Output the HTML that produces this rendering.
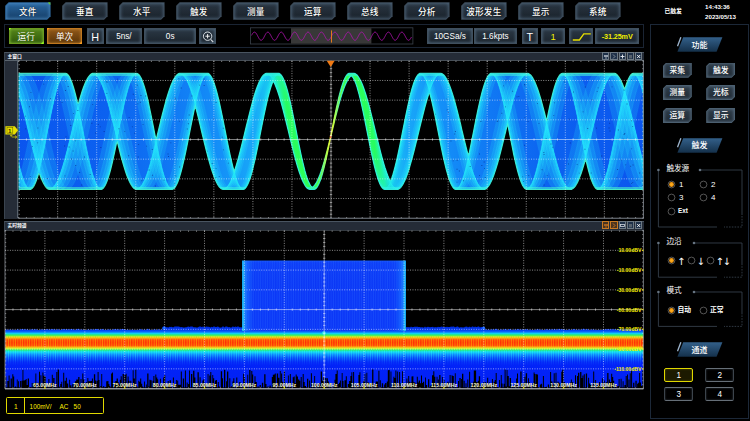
<!DOCTYPE html><html lang="zh"><head><meta charset="utf-8"><title>Oscilloscope</title><style>
html,body{margin:0;padding:0;background:#000;}
body{width:750px;height:421px;position:relative;overflow:hidden;font-family:"Liberation Sans","Noto Sans CJK SC",sans-serif;color:#fff;}
.a{position:absolute;box-sizing:border-box;}
.t{position:absolute;white-space:nowrap;line-height:1;}
.mb{position:absolute;box-sizing:border-box;height:17.4px;width:45.4px;top:2.3px;clip-path:polygon(3.5px 0,100% 0,100% calc(100% - 3.5px),calc(100% - 3.5px) 100%,0 100%,0 3.5px);background:#3f4f5e;}
.mb i{position:absolute;left:0.8px;top:0.8px;right:0.8px;bottom:0.8px;clip-path:polygon(3.2px 0,100% 0,100% calc(100% - 3.2px),calc(100% - 3.2px) 100%,0 100%,0 3.2px);background:linear-gradient(#2a3642,#1a222b);box-shadow:inset 0 0 3.5px 0.5px #536b80;}
.mb span{position:absolute;left:0;right:0;top:0;bottom:0;text-align:center;font-size:8.6px;line-height:20.2px;font-weight:500;letter-spacing:0.2px;text-shadow:0 0 1px #000;}
.tb{position:absolute;box-sizing:border-box;top:27.6px;height:16.6px;background:linear-gradient(#2b3845,#1b242d);box-shadow:inset 0 0 3px 0.5px #4f667a;border:0.8px solid #40505f;text-align:center;font-size:8.2px;line-height:16px;}
.pb{position:absolute;box-sizing:border-box;width:29px;height:15.2px;clip-path:polygon(3.5px 0,100% 0,100% calc(100% - 3.5px),calc(100% - 3.5px) 100%,0 100%,0 3.5px);background:#4b5f70;}
.pb i{position:absolute;left:0.8px;top:0.8px;right:0.8px;bottom:0.8px;clip-path:polygon(3.2px 0,100% 0,100% calc(100% - 3.2px),calc(100% - 3.2px) 100%,0 100%,0 3.2px);background:linear-gradient(#2f3d4a,#202a34);box-shadow:inset 0 0 3px 0.5px #54697c;}
.pb span{position:absolute;left:0;right:0;top:0;bottom:0;text-align:center;font-size:7.8px;line-height:16px;font-weight:500;}
.hd{position:absolute;height:15px;width:45px;}
.hd span{position:absolute;left:0;right:0;top:0.6px;text-align:center;font-size:8px;line-height:16px;font-weight:500;}
.rd{position:absolute;width:5.6px;height:5.6px;border-radius:50%;border:0.8px solid #9aa0a6;box-sizing:border-box;background:#000;}
.rd.on{background:#f29a1c;border-color:#c8c8c8;box-shadow:inset 0 0 0 0.8px #3a2a10;}
.rl{position:absolute;font-size:6.6px;line-height:1;white-space:nowrap;font-weight:bold;}
.gl{position:absolute;font-size:7.8px;line-height:1;white-space:nowrap;background:#000;padding:0 1px;}
.cb{position:absolute;box-sizing:border-box;width:29.4px;height:14.8px;border:1px solid #666f78;border-left-color:#3c444c;border-right-color:#3c444c;border-radius:2px;background:#000;text-align:center;font-size:8.2px;line-height:13.4px;box-shadow:inset 0 0 2px #39424b;}
</style></head><body>
<div class="mb" style="left:5.2px;background:#2f6aa0"><i style="background:linear-gradient(#2a66a0,#163e66);box-shadow:inset 0 0 3.5px 0.5px #4d8cc4"></i><span>文件</span><b class="a" style="right:0;top:0;width:3px;height:3px;background:#6ad020;clip-path:polygon(0 0,100% 0,100% 100%)"></b></div>
<div class="mb" style="left:62.2px"><i></i><span>垂直</span></div>
<div class="mb" style="left:119.2px"><i></i><span>水平</span></div>
<div class="mb" style="left:176.2px"><i></i><span>触发</span></div>
<div class="mb" style="left:233.2px"><i></i><span>测量</span></div>
<div class="mb" style="left:290.2px"><i></i><span>运算</span></div>
<div class="mb" style="left:347.2px"><i></i><span>总线</span></div>
<div class="mb" style="left:404.2px"><i></i><span>分析</span></div>
<div class="mb" style="left:461.2px"><i></i><span>波形发生</span></div>
<div class="mb" style="left:518.2px"><i></i><span>显示</span></div>
<div class="mb" style="left:575.2px"><i></i><span>系统</span></div>
<div class="t" style="left:664.5px;top:9.2px;font-size:5.8px;font-weight:bold">已触发</div>
<div class="t" style="left:705px;top:3.7px;font-size:6.2px;font-weight:bold">14:43:36</div>
<div class="t" style="left:705px;top:13.7px;font-size:6.2px;font-weight:bold">2023/05/13</div>
<div class="a" style="left:4.2px;top:24.2px;width:639.6px;height:23.8px;border:1px solid #1a2433;"></div>
<div class="tb" style="left:8.8px;width:34.8px;background:linear-gradient(#55851a,#2f5a0a);border-color:#6a9a20;box-shadow:inset 0 0 3px #86bd3a;font-size:8.6px">运行<b class="a" style="left:-1px;top:-1px;width:3px;height:3px;background:#9aff20;clip-path:polygon(0 0,100% 0,0 100%)"></b><b class="a" style="right:-1px;bottom:-1px;width:3px;height:3px;background:#9aff20;clip-path:polygon(100% 0,100% 100%,0 100%)"></b></div>
<div class="tb" style="left:47.2px;width:34.6px;background:linear-gradient(#91581a,#5a3408);border-color:#c07820;box-shadow:inset 0 0 3px #d08a30;font-size:8.6px">单次<b class="a" style="left:-1px;top:-1px;width:3px;height:3px;background:#ffa020;clip-path:polygon(0 0,100% 0,0 100%)"></b><b class="a" style="right:-1px;bottom:-1px;width:3px;height:3px;background:#ffa020;clip-path:polygon(100% 0,100% 100%,0 100%)"></b></div>
<div class="tb" style="left:86.6px;width:17px;font-size:10.8px">H</div>
<div class="tb" style="left:105.8px;width:36.2px">5ns/</div>
<div class="tb" style="left:144.2px;width:52px">0s</div>
<div class="tb" style="left:198.6px;width:17.4px"><svg class="a" style="left:0;top:0" width="16" height="15" viewBox="0 0 16 15"><circle cx="7.6" cy="7.2" r="4.2" fill="none" stroke="#e8eef4" stroke-width="0.9"/><path d="M5.4 7.2h4.4M7.6 5v4.4" stroke="#fff" stroke-width="0.9"/><path d="M10.6 10.4l2.6 2.6" stroke="#cfd6dc" stroke-width="1.2"/></svg></div>
<svg class="a" style="left:250px;top:27px" width="164" height="18" viewBox="0 0 164 18"><rect x="0.5" y="0.8" width="162.4" height="16.2" fill="#000" stroke="#3a424b" stroke-width="0.8"/><rect x="41" y="1.2" width="80.4" height="15.4" fill="#383838"/><polyline points="1.5,8.4 2.0,7.5 2.5,6.7 3.0,6.0 3.5,5.5 4.0,5.2 4.5,5.1 5.0,5.2 5.5,5.6 6.0,6.1 6.5,6.9 7.0,7.7 7.5,8.6 8.0,9.6 8.5,10.5 9.0,11.4 9.5,12.1 10.0,12.7 10.5,13.1 11.0,13.3 11.5,13.2 12.0,13.0 12.5,12.5 13.0,11.9 13.5,11.1 14.0,10.2 14.5,9.2 15.0,8.2 15.5,7.3 16.0,6.5 16.5,5.9 17.0,5.4 17.5,5.2 18.0,5.1 18.5,5.3 19.0,5.7 19.5,6.3 20.0,7.0 20.5,7.9 21.0,8.8 21.5,9.8 22.0,10.7 22.5,11.5 23.0,12.3 23.5,12.8 24.0,13.2 24.5,13.3 25.0,13.2 25.5,12.9 26.0,12.4 26.5,11.7 27.0,10.9 27.5,10.0 28.0,9.0 28.5,8.1 29.0,7.2 29.5,6.4 30.0,5.8 30.5,5.4 31.0,5.1 31.5,5.1 32.0,5.4 32.5,5.8 33.0,6.4 33.5,7.2 34.0,8.1 34.5,9.0 35.0,10.0 35.5,10.9 36.0,11.7 36.5,12.4 37.0,12.9 37.5,13.2 38.0,13.3 38.5,13.2 39.0,12.8 39.5,12.3 40.0,11.5 40.5,10.7 41.0,9.8 41.5,8.8 42.0,7.9 42.5,7.0 43.0,6.3 43.5,5.7 44.0,5.3 44.5,5.1 45.0,5.2 45.5,5.4 46.0,5.9 46.5,6.5 47.0,7.3 47.5,8.2 48.0,9.2 48.5,10.2 49.0,11.1 49.5,11.9 50.0,12.5 50.5,13.0 51.0,13.2 51.5,13.3 52.0,13.1 52.5,12.7 53.0,12.1 53.5,11.4 54.0,10.5 54.5,9.6 55.0,8.6 55.5,7.7 56.0,6.9 56.5,6.1 57.0,5.6 57.5,5.2 58.0,5.1 58.5,5.2 59.0,5.5 59.5,6.0 60.0,6.7 60.5,7.5 61.0,8.4 61.5,9.4 62.0,10.3 62.5,11.2 63.0,12.0 63.5,12.6 64.0,13.0 64.5,13.3 65.0,13.3 65.5,13.0 66.0,12.6 66.5,12.0 67.0,11.2 67.5,10.3 68.0,9.4 68.5,8.4 69.0,7.5 69.5,6.7 70.0,6.0 70.5,5.5 71.0,5.2 71.5,5.1 72.0,5.2 72.5,5.6 73.0,6.1 73.5,6.9 74.0,7.7 74.5,8.6 75.0,9.6 75.5,10.5 76.0,11.4 76.5,12.1 77.0,12.7 77.5,13.1 78.0,13.3 78.5,13.2 79.0,13.0 79.5,12.5 80.0,11.9 80.5,11.1 81.0,10.2 81.5,9.2 82.0,8.2 82.5,7.3 83.0,6.5 83.5,5.9 84.0,5.4 84.5,5.2 85.0,5.1 85.5,5.3 86.0,5.7 86.5,6.3 87.0,7.0 87.5,7.9 88.0,8.8 88.5,9.8 89.0,10.7 89.5,11.5 90.0,12.3 90.5,12.8 91.0,13.2 91.5,13.3 92.0,13.2 92.5,12.9 93.0,12.4 93.5,11.7 94.0,10.9 94.5,10.0 95.0,9.0 95.5,8.1 96.0,7.2 96.5,6.4 97.0,5.8 97.5,5.4 98.0,5.1 98.5,5.1 99.0,5.4 99.5,5.8 100.0,6.4 100.5,7.2 101.0,8.1 101.5,9.0 102.0,10.0 102.5,10.9 103.0,11.7 103.5,12.4 104.0,12.9 104.5,13.2 105.0,13.3 105.5,13.2 106.0,12.8 106.5,12.3 107.0,11.5 107.5,10.7 108.0,9.8 108.5,8.8 109.0,7.9 109.5,7.0 110.0,6.3 110.5,5.7 111.0,5.3 111.5,5.1 112.0,5.2 112.5,5.4 113.0,5.9 113.5,6.5 114.0,7.3 114.5,8.2 115.0,9.2 115.5,10.2 116.0,11.1 116.5,11.9 117.0,12.5 117.5,13.0 118.0,13.2 118.5,13.3 119.0,13.1 119.5,12.7 120.0,12.1 120.5,11.4 121.0,10.5 121.5,9.6 122.0,8.6 122.5,7.7 123.0,6.9 123.5,6.1 124.0,5.6 124.5,5.2 125.0,5.1 125.5,5.2 126.0,5.5 126.5,6.0 127.0,6.7 127.5,7.5 128.0,8.4 128.5,9.4 129.0,10.3 129.5,11.2 130.0,12.0 130.5,12.6 131.0,13.0 131.5,13.3 132.0,13.3 132.5,13.0 133.0,12.6 133.5,12.0 134.0,11.2 134.5,10.3 135.0,9.4 135.5,8.4 136.0,7.5 136.5,6.7 137.0,6.0 137.5,5.5 138.0,5.2 138.5,5.1 139.0,5.2 139.5,5.6 140.0,6.1 140.5,6.9 141.0,7.7 141.5,8.6 142.0,9.6 142.5,10.5 143.0,11.4 143.5,12.1 144.0,12.7 144.5,13.1 145.0,13.3 145.5,13.2 146.0,13.0 146.5,12.5 147.0,11.9 147.5,11.1 148.0,10.2 148.5,9.2 149.0,8.2 149.5,7.3 150.0,6.5 150.5,5.9 151.0,5.4 151.5,5.2 152.0,5.1 152.5,5.3 153.0,5.7 153.5,6.3 154.0,7.0 154.5,7.9 155.0,8.8 155.5,9.8 156.0,10.7 156.5,11.5 157.0,12.3 157.5,12.8 158.0,13.2 158.5,13.3 159.0,13.2 159.5,12.9 160.0,12.4 160.5,11.7 161.0,10.9 161.5,10.0" fill="none" stroke="#b414b4" stroke-width="0.8"/><path d="M81.5 3.4v12.2" stroke="#f08018" stroke-width="0.9"/></svg>
<div class="tb" style="left:427.2px;width:45.4px">10GSa/s</div>
<div class="tb" style="left:474.2px;width:42.6px">1.6kpts</div>
<div class="tb" style="left:521.6px;width:16.6px;font-size:10.8px">T</div>
<div class="tb" style="left:541px;width:24px;color:#f0f000;font-size:9.4px">1</div>
<div class="tb" style="left:568.8px;width:24px"><svg class="a" style="left:0;top:0" width="23" height="15" viewBox="0 0 23 15"><path d="M2.8 11h6.6l4.4-6.2h7" fill="none" stroke="#e8e000" stroke-width="1.3"/></svg></div>
<div class="tb" style="left:595px;width:44.4px;color:#f0f000;font-size:7.2px;font-weight:bold;letter-spacing:-0.1px">-31.25mV</div>
<div class="a" style="left:4.2px;top:52.2px;width:639.6px;height:166.4px;background:#252c37;border-top:0.8px solid #4a5561;border-left:0.8px solid #3a444f;"></div>
<div class="a" style="left:4.8px;top:60.2px;width:13.4px;height:158px;background:#252c37;border-right:0.8px solid #59636d"></div>
<div class="t" style="left:7.4px;top:54.8px;font-size:4.8px;font-weight:bold">主窗口</div>
<div class="a" style="left:4.8px;top:60.2px;width:639px;height:0.8px;background:#59636d"></div>
<div class="a" style="left:602.1px;top:52.3px;width:7.4px;height:8.2px;background:#1f3149;border:0.8px solid #6d7983"></div><div class="a" style="left:610.2px;top:52.3px;width:7.4px;height:8.2px;background:#1f3149;border:0.8px solid #6d7983"></div><div class="a" style="left:618.6px;top:52.3px;width:7.4px;height:8.2px;background:#1f3149;border:0.8px solid #6d7983"></div><div class="a" style="left:626.8px;top:52.3px;width:7.4px;height:8.2px;background:#1f3149;border:0.8px solid #6d7983"></div><div class="a" style="left:635.0px;top:52.3px;width:7.4px;height:8.2px;background:#1f3149;border:0.8px solid #6d7983"></div><svg class="a" style="left:602px;top:52px" width="42" height="10" viewBox="0 0 42 10"><path d="M2 4h4" stroke="#e6ebf0" stroke-width="1.2" fill="none"/><path d="M3 6h2" stroke="#e6ebf0" stroke-opacity="0.75" stroke-width="0.8" fill="none"/><path d="M11 2.5l2 2l-2 2" stroke="#9aa5af" stroke-width="0.8" fill="none"/><path d="M18.5 4.5h4M20.5 2.5v4" stroke="#e6ebf0" stroke-width="0.9"/><rect x="27" y="3" width="3" height="3.4" fill="#56616c"/><path d="M35.2 3l3 3M38.2 3l-3 3" stroke="#fff" stroke-width="0.9"/></svg>
<svg class="a" style="left:0;top:0" width="750" height="421" viewBox="0 0 750 421"><defs><linearGradient id="wg" gradientUnits="userSpaceOnUse" x1="0" y1="0" x2="661" y2="0"><stop offset="0.0009" stop-color="#0a52ee"/><stop offset="0.1673" stop-color="#0c62f0"/><stop offset="0.2581" stop-color="#1078f4"/><stop offset="0.3337" stop-color="#1490f8"/><stop offset="0.3852" stop-color="#18a8f8"/><stop offset="0.4064" stop-color="#18c8f0"/><stop offset="0.4185" stop-color="#20f0b0"/><stop offset="0.4336" stop-color="#28fc60"/><stop offset="0.4790" stop-color="#30ff50"/><stop offset="0.4911" stop-color="#70ff40"/><stop offset="0.5002" stop-color="#d0ff38"/><stop offset="0.5002" stop-color="#d0ff38"/><stop offset="0.5092" stop-color="#70ff40"/><stop offset="0.5213" stop-color="#30ff50"/><stop offset="0.5667" stop-color="#28fc60"/><stop offset="0.5818" stop-color="#20f0b0"/><stop offset="0.5939" stop-color="#18c8f0"/><stop offset="0.6151" stop-color="#18a8f8"/><stop offset="0.6666" stop-color="#1490f8"/><stop offset="0.7422" stop-color="#1078f4"/><stop offset="0.8330" stop-color="#0c62f0"/><stop offset="0.9994" stop-color="#0a52ee"/></linearGradient><linearGradient id="eg" gradientUnits="userSpaceOnUse" x1="0" y1="0" x2="661" y2="0"><stop offset="0.0009" stop-color="#24e8ff"/><stop offset="0.4033" stop-color="#22ecf8"/><stop offset="0.4215" stop-color="#20f4d0"/><stop offset="0.4396" stop-color="#28fc78"/><stop offset="0.4759" stop-color="#38ff60"/><stop offset="0.4896" stop-color="#90ff50"/><stop offset="0.5002" stop-color="#e0ff30"/><stop offset="0.5002" stop-color="#e0ff30"/><stop offset="0.5107" stop-color="#90ff50"/><stop offset="0.5244" stop-color="#38ff60"/><stop offset="0.5607" stop-color="#28fc78"/><stop offset="0.5788" stop-color="#20f4d0"/><stop offset="0.5970" stop-color="#22ecf8"/><stop offset="0.9994" stop-color="#24e8ff"/></linearGradient><linearGradient id="og" gradientUnits="userSpaceOnUse" x1="0" y1="0" x2="661" y2="0"><stop offset="0.0009" stop-color="#50ffc8"/><stop offset="0.4699" stop-color="#30f4e8"/><stop offset="0.4850" stop-color="#30f0d0"/><stop offset="0.4941" stop-color="#b0ff50"/><stop offset="0.5002" stop-color="#f0f030"/><stop offset="0.5002" stop-color="#f0f030"/><stop offset="0.5062" stop-color="#b0ff50"/><stop offset="0.5153" stop-color="#30f0d0"/><stop offset="0.5304" stop-color="#30f4e8"/><stop offset="0.9994" stop-color="#50ffc8"/></linearGradient><clipPath id="mc"><rect x="18.6" y="60.8" width="624.8" height="157.39999999999998"/></clipPath></defs><rect x="18.6" y="60.8" width="624.8" height="157.4" fill="#000"/><clipPath id="ec"><path d="M18.6,73.3 19.6,73.3 20.6,73.3 21.6,73.3 22.6,73.3 23.6,73.3 24.6,73.3 25.6,73.3 26.6,73.3 27.6,73.3 28.6,73.3 29.6,73.3 30.6,73.3 31.6,73.3 32.6,73.3 33.6,73.3 34.6,73.3 35.6,73.3 36.6,73.3 37.6,73.3 38.6,73.3 39.6,73.3 40.6,73.3 41.6,73.3 42.6,73.3 43.6,73.3 44.6,73.3 45.5,73.3 46.5,73.3 47.5,73.3 48.5,73.3 49.5,73.3 50.5,73.3 51.5,73.3 52.5,73.3 53.5,73.3 54.5,73.3 55.5,73.3 56.5,73.3 57.5,73.3 58.5,73.3 59.5,73.3 60.5,73.3 61.5,73.3 62.5,73.3 63.5,73.3 64.5,73.3 65.5,73.3 66.5,73.5 67.5,74.2 68.5,75.4 69.5,76.9 70.5,78.9 71.5,81.3 72.5,84.1 73.5,87.2 74.5,90.7 75.5,94.4 76.5,98.5 77.5,102.8 78.5,103.3 79.5,99.7 80.5,96.3 81.5,93.1 82.5,90.0 83.5,87.2 84.5,84.6 85.5,82.3 86.5,80.2 87.5,78.4 88.5,76.8 89.5,75.5 90.5,74.5 91.5,73.8 92.5,73.4 93.5,73.3 94.5,73.3 95.5,73.3 96.5,73.3 97.4,73.3 98.4,73.3 99.4,73.3 100.4,73.3 101.4,73.3 102.4,73.3 103.4,73.3 104.4,73.3 105.4,73.3 106.4,73.3 107.4,73.3 108.4,73.3 109.4,73.3 110.4,73.3 111.4,73.3 112.4,73.3 113.4,73.3 114.4,73.3 115.4,73.3 116.4,73.3 117.4,73.3 118.4,73.3 119.4,73.3 120.4,73.3 121.4,73.3 122.4,73.3 123.4,73.3 124.4,73.3 125.4,73.3 126.4,73.3 127.4,73.3 128.4,73.3 129.4,73.3 130.4,73.3 131.4,73.3 132.4,73.3 133.4,73.3 134.4,73.3 135.4,73.3 136.4,73.3 137.4,73.5 138.4,74.1 139.4,75.2 140.4,76.7 141.4,78.6 142.4,81.0 143.4,83.7 144.4,86.7 145.4,90.2 146.4,93.9 147.4,97.9 148.4,102.2 149.3,106.7 150.3,111.4 151.3,116.2 152.3,121.2 153.3,126.2 154.3,131.3 155.3,136.3 156.3,139.1 157.3,135.0 158.3,130.9 159.3,126.7 160.3,122.6 161.3,118.5 162.3,114.5 163.3,110.6 164.3,106.8 165.3,103.1 166.3,99.5 167.3,96.1 168.3,92.9 169.3,89.9 170.3,87.1 171.3,84.5 172.3,82.2 173.3,80.1 174.3,78.3 175.3,76.7 176.3,75.4 177.3,74.5 178.3,73.8 179.3,73.4 180.3,73.3 181.3,73.3 182.3,73.3 183.3,73.3 184.3,73.3 185.3,73.3 186.3,73.3 187.3,73.3 188.3,73.3 189.3,73.3 190.3,73.3 191.3,73.3 192.3,73.3 193.3,73.3 194.3,73.3 195.3,73.3 196.3,73.3 197.3,73.3 198.3,73.3 199.3,73.3 200.3,73.3 201.2,73.3 202.2,73.3 203.2,73.3 204.2,73.3 205.2,73.3 206.2,73.3 207.2,73.3 208.2,73.4 209.2,74.0 210.2,75.0 211.2,76.5 212.2,78.3 213.2,80.6 214.2,83.3 215.2,86.3 216.2,89.7 217.2,93.4 218.2,97.4 219.2,101.6 220.2,106.1 221.2,110.8 222.2,115.6 223.2,120.5 224.2,125.5 225.2,130.6 226.2,135.6 227.2,140.7 228.2,145.6 229.2,150.4 230.2,155.1 231.2,159.6 232.2,163.8 233.2,167.8 234.2,171.5 235.2,168.5 236.2,165.3 237.2,161.9 238.2,158.4 239.2,154.7 240.2,150.9 241.2,147.0 242.2,143.0 243.2,138.9 244.2,134.8 245.2,130.6 246.2,126.5 247.2,122.4 248.2,118.3 249.2,114.3 250.2,110.4 251.2,106.6 252.2,102.9 253.1,99.3 254.1,95.9 255.1,92.7 256.1,89.7 257.1,86.9 258.1,84.4 259.1,82.0 260.1,80.0 261.1,78.2 262.1,76.6 263.1,75.4 264.1,74.4 265.1,73.8 266.1,73.4 267.1,73.3 268.1,73.3 269.1,73.3 270.1,73.3 271.1,73.3 272.1,73.3 273.1,73.3 274.1,73.3 275.1,73.3 276.1,73.3 277.1,73.3 278.1,73.3 279.1,73.4 280.1,73.9 281.1,74.9 282.1,76.2 283.1,78.1 284.1,80.3 285.1,82.9 286.1,85.9 287.1,89.2 288.1,92.9 289.1,96.8 290.1,101.0 291.1,105.5 292.1,110.1 293.1,114.9 294.1,119.8 295.1,124.8 296.1,129.9 297.1,135.0 298.1,140.0 299.1,144.9 300.1,149.8 301.1,154.5 302.1,159.0 303.1,163.2 304.1,167.3 305.0,171.0 306.0,174.4 307.0,177.5 308.0,180.2 309.0,182.6 310.0,184.5 311.0,186.0 312.0,187.1 313.0,186.7 314.0,185.8 315.0,184.5 316.0,183.0 317.0,181.2 318.0,179.1 319.0,176.7 320.0,174.2 321.0,171.4 322.0,168.4 323.0,165.1 324.0,161.8 325.0,158.2 326.0,154.5 327.0,150.7 328.0,146.8 329.0,142.7 330.0,138.7 331.0,134.2 332.0,129.1 333.0,124.1 334.0,119.1 335.0,114.2 336.0,109.4 337.0,104.8 338.0,100.4 339.0,96.2 340.0,92.3 341.0,88.7 342.0,85.4 343.0,82.5 344.0,79.9 345.0,77.8 346.0,76.0 347.0,74.7 348.0,73.8 349.0,73.4 350.0,73.3 351.0,73.3 352.0,73.3 353.0,73.3 354.0,73.3 355.0,73.6 356.0,74.1 357.0,74.9 357.9,76.1 358.9,77.5 359.9,79.2 360.9,81.1 361.9,83.3 362.9,85.8 363.9,88.5 364.9,91.4 365.9,94.5 366.9,97.8 367.9,101.3 368.9,104.9 369.9,108.7 370.9,112.6 371.9,116.6 372.9,120.6 373.9,124.7 374.9,128.8 375.9,133.0 376.9,137.1 377.9,141.2 378.9,145.2 379.9,149.2 380.9,153.1 381.9,156.8 382.9,160.4 383.9,163.9 384.9,167.2 385.9,170.2 386.9,173.1 387.9,175.8 388.9,178.2 389.9,180.4 390.9,180.2 391.9,177.5 392.9,174.4 393.9,170.9 394.9,167.2 395.9,163.2 396.9,158.9 397.9,154.4 398.9,149.7 399.9,144.8 400.9,139.9 401.9,134.9 402.9,129.8 403.9,124.8 404.9,119.8 405.9,114.8 406.9,110.0 407.9,105.4 408.9,101.0 409.8,96.7 410.8,92.8 411.8,89.1 412.8,85.8 413.8,82.8 414.8,80.2 415.8,78.0 416.8,76.2 417.8,74.8 418.8,73.9 419.8,73.4 420.8,73.3 421.8,73.3 422.8,73.3 423.8,73.3 424.8,73.3 425.8,73.3 426.8,73.3 427.8,73.3 428.8,73.3 429.8,73.3 430.8,73.3 431.8,73.3 432.8,73.3 433.8,73.3 434.8,73.3 435.8,73.3 436.8,73.3 437.8,73.3 438.8,73.3 439.8,73.3 440.8,73.3 441.8,73.6 442.8,74.1 443.8,75.0 444.8,76.1 445.8,77.6 446.8,79.3 447.8,81.2 448.8,83.5 449.8,85.9 450.8,88.6 451.8,91.6 452.8,94.7 453.8,98.0 454.8,101.5 455.8,105.1 456.8,108.9 457.8,112.8 458.8,116.8 459.8,120.8 460.8,124.9 461.7,129.1 462.7,133.2 463.7,137.3 464.7,141.4 465.7,145.5 466.7,149.4 467.7,153.3 468.7,155.0 469.7,150.3 470.7,145.5 471.7,140.6 472.7,135.6 473.7,130.5 474.7,125.4 475.7,120.4 476.7,115.5 477.7,110.7 478.7,106.0 479.7,101.5 480.7,97.3 481.7,93.3 482.7,89.6 483.7,86.3 484.7,83.2 485.7,80.6 486.7,78.3 487.7,76.4 488.7,75.0 489.7,74.0 490.7,73.4 491.7,73.3 492.7,73.3 493.7,73.3 494.7,73.3 495.7,73.3 496.7,73.3 497.7,73.3 498.7,73.3 499.7,73.3 500.7,73.3 501.7,73.3 502.7,73.3 503.7,73.3 504.7,73.3 505.7,73.3 506.7,73.3 507.7,73.3 508.7,73.3 509.7,73.3 510.7,73.3 511.7,73.3 512.7,73.3 513.6,73.3 514.6,73.3 515.6,73.3 516.6,73.3 517.6,73.3 518.6,73.3 519.6,73.3 520.6,73.3 521.6,73.3 522.6,73.3 523.6,73.3 524.6,73.3 525.6,73.3 526.6,73.3 527.6,73.3 528.6,73.6 529.6,74.2 530.6,75.0 531.6,76.2 532.6,77.6 533.6,79.4 534.6,81.3 535.6,83.6 536.6,86.1 537.6,88.8 538.6,91.7 539.6,94.9 540.6,98.2 541.6,101.7 542.6,105.3 543.6,109.1 544.6,113.0 545.6,117.0 546.6,121.1 547.6,116.2 548.6,111.3 549.6,106.6 550.6,102.1 551.6,97.9 552.6,93.8 553.6,90.1 554.6,86.7 555.6,83.6 556.6,80.9 557.6,78.6 558.6,76.7 559.6,75.2 560.6,74.1 561.6,73.5 562.6,73.3 563.6,73.3 564.6,73.3 565.5,73.3 566.5,73.3 567.5,73.3 568.5,73.3 569.5,73.3 570.5,73.3 571.5,73.3 572.5,73.3 573.5,73.3 574.5,73.3 575.5,73.3 576.5,73.3 577.5,73.3 578.5,73.3 579.5,73.3 580.5,73.3 581.5,73.3 582.5,73.3 583.5,73.3 584.5,73.3 585.5,73.3 586.5,73.3 587.5,73.3 588.5,73.3 589.5,73.3 590.5,73.3 591.5,73.3 592.5,73.3 593.5,73.3 594.5,73.3 595.5,73.3 596.5,73.3 597.5,73.3 598.5,73.3 599.5,73.3 600.5,73.3 601.5,73.3 602.5,73.3 603.5,73.3 604.5,73.3 605.5,73.3 606.5,73.3 607.5,73.3 608.5,73.3 609.5,73.3 610.5,73.3 611.5,73.3 612.5,73.3 613.5,73.3 614.5,73.3 615.5,73.6 616.5,74.2 617.4,75.1 618.4,76.3 619.4,77.7 620.4,79.5 621.4,81.5 622.4,83.7 623.4,86.2 624.4,89.0 625.4,87.1 626.4,84.0 627.4,81.3 628.4,78.9 629.4,76.9 630.4,75.3 631.4,74.2 632.4,73.5 633.4,73.3 634.4,73.3 635.4,73.3 636.4,73.3 637.4,73.3 638.4,73.3 639.4,73.3 640.4,73.3 641.4,73.3 642.4,73.3 643.4,73.3 L643.4,189.5 642.4,189.5 641.4,189.5 640.4,189.5 639.4,189.5 638.4,189.5 637.4,189.5 636.4,189.5 635.4,189.5 634.4,189.5 633.4,189.5 632.4,189.5 631.4,189.5 630.4,189.5 629.4,189.5 628.4,189.5 627.4,189.5 626.4,189.5 625.4,189.5 624.4,189.5 623.4,189.5 622.4,189.5 621.4,189.5 620.4,189.5 619.4,189.5 618.4,189.5 617.4,189.5 616.5,189.5 615.5,189.5 614.5,189.5 613.5,189.5 612.5,189.5 611.5,189.5 610.5,189.5 609.5,189.5 608.5,189.5 607.5,189.5 606.5,189.5 605.5,189.5 604.5,189.5 603.5,189.5 602.5,189.5 601.5,189.5 600.5,189.5 599.5,189.5 598.5,189.5 597.5,189.5 596.5,189.0 595.5,188.1 594.5,186.8 593.5,185.1 592.5,182.9 591.5,180.4 590.5,177.5 589.5,174.2 588.5,170.6 587.5,166.7 586.5,162.5 585.5,159.2 584.5,162.8 583.5,166.2 582.5,169.4 581.5,172.5 580.5,175.3 579.5,177.9 578.5,180.3 577.5,182.4 576.5,184.3 575.5,185.9 574.5,187.2 573.5,188.2 572.5,188.9 571.5,189.4 570.5,189.5 569.5,189.5 568.5,189.5 567.5,189.5 566.5,189.5 565.5,189.5 564.6,189.5 563.6,189.5 562.6,189.5 561.6,189.5 560.6,189.5 559.6,189.5 558.6,189.5 557.6,189.5 556.6,189.5 555.6,189.5 554.6,189.5 553.6,189.5 552.6,189.5 551.6,189.5 550.6,189.5 549.6,189.5 548.6,189.5 547.6,189.5 546.6,189.5 545.6,189.5 544.6,189.5 543.6,189.5 542.6,189.5 541.6,189.5 540.6,189.5 539.6,189.5 538.6,189.5 537.6,189.5 536.6,189.5 535.6,189.5 534.6,189.5 533.6,189.5 532.6,189.5 531.6,189.5 530.6,189.5 529.6,189.5 528.6,189.5 527.6,189.5 526.6,189.5 525.6,189.1 524.6,188.3 523.6,187.0 522.6,185.4 521.6,183.3 520.6,180.8 519.6,177.9 518.6,174.7 517.6,171.1 516.6,167.2 515.6,163.1 514.6,158.7 513.6,154.2 512.7,149.4 511.7,144.5 510.7,139.5 509.7,134.5 508.7,129.4 507.7,124.4 506.7,127.4 505.7,131.5 504.7,135.7 503.7,139.8 502.7,143.9 501.7,147.9 500.7,151.8 499.7,155.7 498.7,159.4 497.7,163.0 496.7,166.4 495.7,169.6 494.7,172.6 493.7,175.5 492.7,178.1 491.7,180.4 490.7,182.5 489.7,184.4 488.7,186.0 487.7,187.2 486.7,188.3 485.7,189.0 484.7,189.4 483.7,189.5 482.7,189.5 481.7,189.5 480.7,189.5 479.7,189.5 478.7,189.5 477.7,189.5 476.7,189.5 475.7,189.5 474.7,189.5 473.7,189.5 472.7,189.5 471.7,189.5 470.7,189.5 469.7,189.5 468.7,189.5 467.7,189.5 466.7,189.5 465.7,189.5 464.7,189.5 463.7,189.5 462.7,189.5 461.7,189.5 460.8,189.5 459.8,189.5 458.8,189.5 457.8,189.5 456.8,189.5 455.8,189.5 454.8,189.2 453.8,188.4 452.8,187.2 451.8,185.6 450.8,183.6 449.8,181.1 448.8,178.3 447.8,175.1 446.8,171.6 445.8,167.8 444.8,163.7 443.8,159.3 442.8,154.8 441.8,150.1 440.8,145.2 439.8,140.2 438.8,135.2 437.8,130.1 436.8,125.1 435.8,120.1 434.8,115.2 433.8,110.4 432.8,105.8 431.8,101.5 430.8,97.3 429.8,93.4 428.8,94.0 427.8,97.2 426.8,100.5 425.8,104.1 424.8,107.7 423.8,111.5 422.8,115.5 421.8,119.5 420.8,123.5 419.8,127.6 418.8,131.8 417.8,135.9 416.8,140.0 415.8,144.1 414.8,148.1 413.8,152.1 412.8,155.9 411.8,159.6 410.8,163.2 409.8,166.6 408.9,169.8 407.9,172.8 406.9,175.6 405.9,178.2 404.9,180.6 403.9,182.6 402.9,184.5 401.9,186.0 400.9,187.3 399.9,188.3 398.9,189.0 397.9,189.4 396.9,189.5 395.9,189.5 394.9,189.5 393.9,189.5 392.9,189.5 391.9,189.5 390.9,189.5 389.9,189.5 388.9,189.5 387.9,189.5 386.9,189.5 385.9,189.5 384.9,189.5 383.9,189.2 382.9,188.6 381.9,187.4 380.9,185.9 379.9,183.9 378.9,181.5 377.9,178.7 376.9,175.6 375.9,172.1 374.9,168.3 373.9,164.3 372.9,160.0 371.9,155.4 370.9,150.7 369.9,145.9 368.9,140.9 367.9,135.9 366.9,130.8 365.9,125.8 364.9,120.8 363.9,115.9 362.9,111.1 361.9,106.5 360.9,102.0 359.9,97.9 358.9,93.9 357.9,90.3 357.0,87.0 356.0,84.1 355.0,81.5 354.0,79.4 353.0,77.6 352.0,76.3 351.0,76.0 350.0,76.9 349.0,78.2 348.0,79.7 347.0,81.5 346.0,83.5 345.0,85.8 344.0,88.4 343.0,91.2 342.0,94.2 341.0,97.4 340.0,100.7 339.0,104.3 338.0,108.0 337.0,111.8 336.0,115.7 335.0,119.7 334.0,123.8 333.0,127.9 332.0,132.0 331.0,136.1 330.0,140.8 329.0,145.8 328.0,150.6 327.0,155.3 326.0,159.9 325.0,164.2 324.0,168.3 323.0,172.1 322.0,175.5 321.0,178.7 320.0,181.4 319.0,183.8 318.0,185.8 317.0,187.4 316.0,188.5 315.0,189.2 314.0,189.5 313.0,189.5 312.0,189.5 311.0,189.5 310.0,189.5 309.0,189.3 308.0,188.8 307.0,188.0 306.0,186.9 305.0,185.5 304.1,183.8 303.1,181.9 302.1,179.7 301.1,177.3 300.1,174.6 299.1,171.7 298.1,168.6 297.1,165.3 296.1,161.8 295.1,158.2 294.1,154.5 293.1,150.6 292.1,146.6 291.1,142.6 290.1,138.5 289.1,134.3 288.1,130.2 287.1,126.1 286.1,122.0 285.1,117.9 284.1,114.0 283.1,110.1 282.1,106.3 281.1,102.7 280.1,99.2 279.1,95.9 278.1,92.8 277.1,89.9 276.1,87.2 275.1,84.8 274.1,82.6 273.1,81.2 272.1,83.7 271.1,86.6 270.1,89.8 269.1,93.4 268.1,97.2 267.1,101.4 266.1,105.8 265.1,110.4 264.1,115.1 263.1,120.0 262.1,125.0 261.1,130.0 260.1,135.1 259.1,140.1 258.1,145.1 257.1,150.0 256.1,154.7 255.1,159.3 254.1,163.6 253.1,167.7 252.2,171.6 251.2,175.1 250.2,178.3 249.2,181.1 248.2,183.5 247.2,185.6 246.2,187.2 245.2,188.4 244.2,189.2 243.2,189.5 242.2,189.5 241.2,189.5 240.2,189.5 239.2,189.5 238.2,189.5 237.2,189.5 236.2,189.5 235.2,189.5 234.2,189.5 233.2,189.5 232.2,189.5 231.2,189.5 230.2,189.5 229.2,189.5 228.2,189.5 227.2,189.5 226.2,189.5 225.2,189.5 224.2,189.5 223.2,189.5 222.2,189.3 221.2,188.7 220.2,187.9 219.2,186.8 218.2,185.4 217.2,183.7 216.2,181.8 215.2,179.6 214.2,177.1 213.2,174.4 212.2,171.5 211.2,168.4 210.2,165.1 209.2,161.6 208.2,158.0 207.2,154.2 206.2,150.4 205.2,146.4 204.2,142.3 203.2,138.2 202.2,134.1 201.2,130.0 200.3,125.8 199.3,121.8 198.3,117.7 197.3,113.7 196.3,109.9 195.3,106.1 194.3,109.7 193.3,114.5 192.3,119.3 191.3,124.3 190.3,129.3 189.3,134.4 188.3,139.4 187.3,144.4 186.3,149.3 185.3,154.1 184.3,158.7 183.3,163.0 182.3,167.2 181.3,171.0 180.3,174.6 179.3,177.8 178.3,180.7 177.3,183.2 176.3,185.3 175.3,187.0 174.3,188.3 173.3,189.1 172.3,189.5 171.3,189.5 170.3,189.5 169.3,189.5 168.3,189.5 167.3,189.5 166.3,189.5 165.3,189.5 164.3,189.5 163.3,189.5 162.3,189.5 161.3,189.5 160.3,189.5 159.3,189.5 158.3,189.5 157.3,189.5 156.3,189.5 155.3,189.5 154.3,189.5 153.3,189.5 152.3,189.5 151.3,189.5 150.3,189.5 149.3,189.5 148.4,189.5 147.4,189.5 146.4,189.5 145.4,189.5 144.4,189.5 143.4,189.5 142.4,189.5 141.4,189.5 140.4,189.5 139.4,189.5 138.4,189.5 137.4,189.5 136.4,189.5 135.4,189.2 134.4,188.7 133.4,187.9 132.4,186.7 131.4,185.3 130.4,183.6 129.4,181.6 128.4,179.4 127.4,177.0 126.4,174.3 125.4,171.3 124.4,168.2 123.4,164.9 122.4,161.4 121.4,157.8 120.4,154.0 119.4,150.1 118.4,146.2 117.4,142.1 116.4,143.8 115.4,148.7 114.4,153.4 113.4,158.0 112.4,162.5 111.4,166.6 110.4,170.5 109.4,174.1 108.4,177.4 107.4,180.4 106.4,182.9 105.4,185.1 104.4,186.8 103.4,188.1 102.4,189.0 101.4,189.4 100.4,189.5 99.4,189.5 98.4,189.5 97.4,189.5 96.5,189.5 95.5,189.5 94.5,189.5 93.5,189.5 92.5,189.5 91.5,189.5 90.5,189.5 89.5,189.5 88.5,189.5 87.5,189.5 86.5,189.5 85.5,189.5 84.5,189.5 83.5,189.5 82.5,189.5 81.5,189.5 80.5,189.5 79.5,189.5 78.5,189.5 77.5,189.5 76.5,189.5 75.5,189.5 74.5,189.5 73.5,189.5 72.5,189.5 71.5,189.5 70.5,189.5 69.5,189.5 68.5,189.5 67.5,189.5 66.5,189.5 65.5,189.5 64.5,189.5 63.5,189.5 62.5,189.5 61.5,189.5 60.5,189.5 59.5,189.5 58.5,189.5 57.5,189.5 56.5,189.5 55.5,189.5 54.5,189.5 53.5,189.5 52.5,189.5 51.5,189.5 50.5,189.5 49.5,189.5 48.5,189.2 47.5,188.7 46.5,187.8 45.5,186.6 44.6,185.2 43.6,183.5 42.6,181.5 41.6,179.3 40.6,176.8 39.6,174.1 38.6,173.7 37.6,177.0 36.6,180.0 35.6,182.6 34.6,184.8 33.6,186.6 32.6,188.0 31.6,188.9 30.6,189.4 29.6,189.5 28.6,189.5 27.6,189.5 26.6,189.5 25.6,189.5 24.6,189.5 23.6,189.5 22.6,189.5 21.6,189.5 20.6,189.5 19.6,189.5 18.6,189.5Z"/></clipPath><g clip-path="url(#mc)"><path d="M18.6,73.3 19.6,73.3 20.6,73.3 21.6,73.3 22.6,73.3 23.6,73.3 24.6,73.3 25.6,73.3 26.6,73.3 27.6,73.3 28.6,73.3 29.6,73.3 30.6,73.3 31.6,73.3 32.6,73.3 33.6,73.3 34.6,73.3 35.6,73.3 36.6,73.3 37.6,73.3 38.6,73.3 39.6,73.3 40.6,73.3 41.6,73.3 42.6,73.3 43.6,73.3 44.6,73.3 45.5,73.3 46.5,73.3 47.5,73.3 48.5,73.3 49.5,73.3 50.5,73.3 51.5,73.3 52.5,73.3 53.5,73.3 54.5,73.3 55.5,73.3 56.5,73.3 57.5,73.3 58.5,73.3 59.5,73.3 60.5,73.3 61.5,73.3 62.5,73.3 63.5,73.3 64.5,73.3 65.5,73.3 66.5,73.5 67.5,74.2 68.5,75.4 69.5,76.9 70.5,78.9 71.5,81.3 72.5,84.1 73.5,87.2 74.5,90.7 75.5,94.4 76.5,98.5 77.5,102.8 78.5,103.3 79.5,99.7 80.5,96.3 81.5,93.1 82.5,90.0 83.5,87.2 84.5,84.6 85.5,82.3 86.5,80.2 87.5,78.4 88.5,76.8 89.5,75.5 90.5,74.5 91.5,73.8 92.5,73.4 93.5,73.3 94.5,73.3 95.5,73.3 96.5,73.3 97.4,73.3 98.4,73.3 99.4,73.3 100.4,73.3 101.4,73.3 102.4,73.3 103.4,73.3 104.4,73.3 105.4,73.3 106.4,73.3 107.4,73.3 108.4,73.3 109.4,73.3 110.4,73.3 111.4,73.3 112.4,73.3 113.4,73.3 114.4,73.3 115.4,73.3 116.4,73.3 117.4,73.3 118.4,73.3 119.4,73.3 120.4,73.3 121.4,73.3 122.4,73.3 123.4,73.3 124.4,73.3 125.4,73.3 126.4,73.3 127.4,73.3 128.4,73.3 129.4,73.3 130.4,73.3 131.4,73.3 132.4,73.3 133.4,73.3 134.4,73.3 135.4,73.3 136.4,73.3 137.4,73.5 138.4,74.1 139.4,75.2 140.4,76.7 141.4,78.6 142.4,81.0 143.4,83.7 144.4,86.7 145.4,90.2 146.4,93.9 147.4,97.9 148.4,102.2 149.3,106.7 150.3,111.4 151.3,116.2 152.3,121.2 153.3,126.2 154.3,131.3 155.3,136.3 156.3,139.1 157.3,135.0 158.3,130.9 159.3,126.7 160.3,122.6 161.3,118.5 162.3,114.5 163.3,110.6 164.3,106.8 165.3,103.1 166.3,99.5 167.3,96.1 168.3,92.9 169.3,89.9 170.3,87.1 171.3,84.5 172.3,82.2 173.3,80.1 174.3,78.3 175.3,76.7 176.3,75.4 177.3,74.5 178.3,73.8 179.3,73.4 180.3,73.3 181.3,73.3 182.3,73.3 183.3,73.3 184.3,73.3 185.3,73.3 186.3,73.3 187.3,73.3 188.3,73.3 189.3,73.3 190.3,73.3 191.3,73.3 192.3,73.3 193.3,73.3 194.3,73.3 195.3,73.3 196.3,73.3 197.3,73.3 198.3,73.3 199.3,73.3 200.3,73.3 201.2,73.3 202.2,73.3 203.2,73.3 204.2,73.3 205.2,73.3 206.2,73.3 207.2,73.3 208.2,73.4 209.2,74.0 210.2,75.0 211.2,76.5 212.2,78.3 213.2,80.6 214.2,83.3 215.2,86.3 216.2,89.7 217.2,93.4 218.2,97.4 219.2,101.6 220.2,106.1 221.2,110.8 222.2,115.6 223.2,120.5 224.2,125.5 225.2,130.6 226.2,135.6 227.2,140.7 228.2,145.6 229.2,150.4 230.2,155.1 231.2,159.6 232.2,163.8 233.2,167.8 234.2,171.5 235.2,168.5 236.2,165.3 237.2,161.9 238.2,158.4 239.2,154.7 240.2,150.9 241.2,147.0 242.2,143.0 243.2,138.9 244.2,134.8 245.2,130.6 246.2,126.5 247.2,122.4 248.2,118.3 249.2,114.3 250.2,110.4 251.2,106.6 252.2,102.9 253.1,99.3 254.1,95.9 255.1,92.7 256.1,89.7 257.1,86.9 258.1,84.4 259.1,82.0 260.1,80.0 261.1,78.2 262.1,76.6 263.1,75.4 264.1,74.4 265.1,73.8 266.1,73.4 267.1,73.3 268.1,73.3 269.1,73.3 270.1,73.3 271.1,73.3 272.1,73.3 273.1,73.3 274.1,73.3 275.1,73.3 276.1,73.3 277.1,73.3 278.1,73.3 279.1,73.4 280.1,73.9 281.1,74.9 282.1,76.2 283.1,78.1 284.1,80.3 285.1,82.9 286.1,85.9 287.1,89.2 288.1,92.9 289.1,96.8 290.1,101.0 291.1,105.5 292.1,110.1 293.1,114.9 294.1,119.8 295.1,124.8 296.1,129.9 297.1,135.0 298.1,140.0 299.1,144.9 300.1,149.8 301.1,154.5 302.1,159.0 303.1,163.2 304.1,167.3 305.0,171.0 306.0,174.4 307.0,177.5 308.0,180.2 309.0,182.6 310.0,184.5 311.0,186.0 312.0,187.1 313.0,186.7 314.0,185.8 315.0,184.5 316.0,183.0 317.0,181.2 318.0,179.1 319.0,176.7 320.0,174.2 321.0,171.4 322.0,168.4 323.0,165.1 324.0,161.8 325.0,158.2 326.0,154.5 327.0,150.7 328.0,146.8 329.0,142.7 330.0,138.7 331.0,134.2 332.0,129.1 333.0,124.1 334.0,119.1 335.0,114.2 336.0,109.4 337.0,104.8 338.0,100.4 339.0,96.2 340.0,92.3 341.0,88.7 342.0,85.4 343.0,82.5 344.0,79.9 345.0,77.8 346.0,76.0 347.0,74.7 348.0,73.8 349.0,73.4 350.0,73.3 351.0,73.3 352.0,73.3 353.0,73.3 354.0,73.3 355.0,73.6 356.0,74.1 357.0,74.9 357.9,76.1 358.9,77.5 359.9,79.2 360.9,81.1 361.9,83.3 362.9,85.8 363.9,88.5 364.9,91.4 365.9,94.5 366.9,97.8 367.9,101.3 368.9,104.9 369.9,108.7 370.9,112.6 371.9,116.6 372.9,120.6 373.9,124.7 374.9,128.8 375.9,133.0 376.9,137.1 377.9,141.2 378.9,145.2 379.9,149.2 380.9,153.1 381.9,156.8 382.9,160.4 383.9,163.9 384.9,167.2 385.9,170.2 386.9,173.1 387.9,175.8 388.9,178.2 389.9,180.4 390.9,180.2 391.9,177.5 392.9,174.4 393.9,170.9 394.9,167.2 395.9,163.2 396.9,158.9 397.9,154.4 398.9,149.7 399.9,144.8 400.9,139.9 401.9,134.9 402.9,129.8 403.9,124.8 404.9,119.8 405.9,114.8 406.9,110.0 407.9,105.4 408.9,101.0 409.8,96.7 410.8,92.8 411.8,89.1 412.8,85.8 413.8,82.8 414.8,80.2 415.8,78.0 416.8,76.2 417.8,74.8 418.8,73.9 419.8,73.4 420.8,73.3 421.8,73.3 422.8,73.3 423.8,73.3 424.8,73.3 425.8,73.3 426.8,73.3 427.8,73.3 428.8,73.3 429.8,73.3 430.8,73.3 431.8,73.3 432.8,73.3 433.8,73.3 434.8,73.3 435.8,73.3 436.8,73.3 437.8,73.3 438.8,73.3 439.8,73.3 440.8,73.3 441.8,73.6 442.8,74.1 443.8,75.0 444.8,76.1 445.8,77.6 446.8,79.3 447.8,81.2 448.8,83.5 449.8,85.9 450.8,88.6 451.8,91.6 452.8,94.7 453.8,98.0 454.8,101.5 455.8,105.1 456.8,108.9 457.8,112.8 458.8,116.8 459.8,120.8 460.8,124.9 461.7,129.1 462.7,133.2 463.7,137.3 464.7,141.4 465.7,145.5 466.7,149.4 467.7,153.3 468.7,155.0 469.7,150.3 470.7,145.5 471.7,140.6 472.7,135.6 473.7,130.5 474.7,125.4 475.7,120.4 476.7,115.5 477.7,110.7 478.7,106.0 479.7,101.5 480.7,97.3 481.7,93.3 482.7,89.6 483.7,86.3 484.7,83.2 485.7,80.6 486.7,78.3 487.7,76.4 488.7,75.0 489.7,74.0 490.7,73.4 491.7,73.3 492.7,73.3 493.7,73.3 494.7,73.3 495.7,73.3 496.7,73.3 497.7,73.3 498.7,73.3 499.7,73.3 500.7,73.3 501.7,73.3 502.7,73.3 503.7,73.3 504.7,73.3 505.7,73.3 506.7,73.3 507.7,73.3 508.7,73.3 509.7,73.3 510.7,73.3 511.7,73.3 512.7,73.3 513.6,73.3 514.6,73.3 515.6,73.3 516.6,73.3 517.6,73.3 518.6,73.3 519.6,73.3 520.6,73.3 521.6,73.3 522.6,73.3 523.6,73.3 524.6,73.3 525.6,73.3 526.6,73.3 527.6,73.3 528.6,73.6 529.6,74.2 530.6,75.0 531.6,76.2 532.6,77.6 533.6,79.4 534.6,81.3 535.6,83.6 536.6,86.1 537.6,88.8 538.6,91.7 539.6,94.9 540.6,98.2 541.6,101.7 542.6,105.3 543.6,109.1 544.6,113.0 545.6,117.0 546.6,121.1 547.6,116.2 548.6,111.3 549.6,106.6 550.6,102.1 551.6,97.9 552.6,93.8 553.6,90.1 554.6,86.7 555.6,83.6 556.6,80.9 557.6,78.6 558.6,76.7 559.6,75.2 560.6,74.1 561.6,73.5 562.6,73.3 563.6,73.3 564.6,73.3 565.5,73.3 566.5,73.3 567.5,73.3 568.5,73.3 569.5,73.3 570.5,73.3 571.5,73.3 572.5,73.3 573.5,73.3 574.5,73.3 575.5,73.3 576.5,73.3 577.5,73.3 578.5,73.3 579.5,73.3 580.5,73.3 581.5,73.3 582.5,73.3 583.5,73.3 584.5,73.3 585.5,73.3 586.5,73.3 587.5,73.3 588.5,73.3 589.5,73.3 590.5,73.3 591.5,73.3 592.5,73.3 593.5,73.3 594.5,73.3 595.5,73.3 596.5,73.3 597.5,73.3 598.5,73.3 599.5,73.3 600.5,73.3 601.5,73.3 602.5,73.3 603.5,73.3 604.5,73.3 605.5,73.3 606.5,73.3 607.5,73.3 608.5,73.3 609.5,73.3 610.5,73.3 611.5,73.3 612.5,73.3 613.5,73.3 614.5,73.3 615.5,73.6 616.5,74.2 617.4,75.1 618.4,76.3 619.4,77.7 620.4,79.5 621.4,81.5 622.4,83.7 623.4,86.2 624.4,89.0 625.4,87.1 626.4,84.0 627.4,81.3 628.4,78.9 629.4,76.9 630.4,75.3 631.4,74.2 632.4,73.5 633.4,73.3 634.4,73.3 635.4,73.3 636.4,73.3 637.4,73.3 638.4,73.3 639.4,73.3 640.4,73.3 641.4,73.3 642.4,73.3 643.4,73.3 L643.4,189.5 642.4,189.5 641.4,189.5 640.4,189.5 639.4,189.5 638.4,189.5 637.4,189.5 636.4,189.5 635.4,189.5 634.4,189.5 633.4,189.5 632.4,189.5 631.4,189.5 630.4,189.5 629.4,189.5 628.4,189.5 627.4,189.5 626.4,189.5 625.4,189.5 624.4,189.5 623.4,189.5 622.4,189.5 621.4,189.5 620.4,189.5 619.4,189.5 618.4,189.5 617.4,189.5 616.5,189.5 615.5,189.5 614.5,189.5 613.5,189.5 612.5,189.5 611.5,189.5 610.5,189.5 609.5,189.5 608.5,189.5 607.5,189.5 606.5,189.5 605.5,189.5 604.5,189.5 603.5,189.5 602.5,189.5 601.5,189.5 600.5,189.5 599.5,189.5 598.5,189.5 597.5,189.5 596.5,189.0 595.5,188.1 594.5,186.8 593.5,185.1 592.5,182.9 591.5,180.4 590.5,177.5 589.5,174.2 588.5,170.6 587.5,166.7 586.5,162.5 585.5,159.2 584.5,162.8 583.5,166.2 582.5,169.4 581.5,172.5 580.5,175.3 579.5,177.9 578.5,180.3 577.5,182.4 576.5,184.3 575.5,185.9 574.5,187.2 573.5,188.2 572.5,188.9 571.5,189.4 570.5,189.5 569.5,189.5 568.5,189.5 567.5,189.5 566.5,189.5 565.5,189.5 564.6,189.5 563.6,189.5 562.6,189.5 561.6,189.5 560.6,189.5 559.6,189.5 558.6,189.5 557.6,189.5 556.6,189.5 555.6,189.5 554.6,189.5 553.6,189.5 552.6,189.5 551.6,189.5 550.6,189.5 549.6,189.5 548.6,189.5 547.6,189.5 546.6,189.5 545.6,189.5 544.6,189.5 543.6,189.5 542.6,189.5 541.6,189.5 540.6,189.5 539.6,189.5 538.6,189.5 537.6,189.5 536.6,189.5 535.6,189.5 534.6,189.5 533.6,189.5 532.6,189.5 531.6,189.5 530.6,189.5 529.6,189.5 528.6,189.5 527.6,189.5 526.6,189.5 525.6,189.1 524.6,188.3 523.6,187.0 522.6,185.4 521.6,183.3 520.6,180.8 519.6,177.9 518.6,174.7 517.6,171.1 516.6,167.2 515.6,163.1 514.6,158.7 513.6,154.2 512.7,149.4 511.7,144.5 510.7,139.5 509.7,134.5 508.7,129.4 507.7,124.4 506.7,127.4 505.7,131.5 504.7,135.7 503.7,139.8 502.7,143.9 501.7,147.9 500.7,151.8 499.7,155.7 498.7,159.4 497.7,163.0 496.7,166.4 495.7,169.6 494.7,172.6 493.7,175.5 492.7,178.1 491.7,180.4 490.7,182.5 489.7,184.4 488.7,186.0 487.7,187.2 486.7,188.3 485.7,189.0 484.7,189.4 483.7,189.5 482.7,189.5 481.7,189.5 480.7,189.5 479.7,189.5 478.7,189.5 477.7,189.5 476.7,189.5 475.7,189.5 474.7,189.5 473.7,189.5 472.7,189.5 471.7,189.5 470.7,189.5 469.7,189.5 468.7,189.5 467.7,189.5 466.7,189.5 465.7,189.5 464.7,189.5 463.7,189.5 462.7,189.5 461.7,189.5 460.8,189.5 459.8,189.5 458.8,189.5 457.8,189.5 456.8,189.5 455.8,189.5 454.8,189.2 453.8,188.4 452.8,187.2 451.8,185.6 450.8,183.6 449.8,181.1 448.8,178.3 447.8,175.1 446.8,171.6 445.8,167.8 444.8,163.7 443.8,159.3 442.8,154.8 441.8,150.1 440.8,145.2 439.8,140.2 438.8,135.2 437.8,130.1 436.8,125.1 435.8,120.1 434.8,115.2 433.8,110.4 432.8,105.8 431.8,101.5 430.8,97.3 429.8,93.4 428.8,94.0 427.8,97.2 426.8,100.5 425.8,104.1 424.8,107.7 423.8,111.5 422.8,115.5 421.8,119.5 420.8,123.5 419.8,127.6 418.8,131.8 417.8,135.9 416.8,140.0 415.8,144.1 414.8,148.1 413.8,152.1 412.8,155.9 411.8,159.6 410.8,163.2 409.8,166.6 408.9,169.8 407.9,172.8 406.9,175.6 405.9,178.2 404.9,180.6 403.9,182.6 402.9,184.5 401.9,186.0 400.9,187.3 399.9,188.3 398.9,189.0 397.9,189.4 396.9,189.5 395.9,189.5 394.9,189.5 393.9,189.5 392.9,189.5 391.9,189.5 390.9,189.5 389.9,189.5 388.9,189.5 387.9,189.5 386.9,189.5 385.9,189.5 384.9,189.5 383.9,189.2 382.9,188.6 381.9,187.4 380.9,185.9 379.9,183.9 378.9,181.5 377.9,178.7 376.9,175.6 375.9,172.1 374.9,168.3 373.9,164.3 372.9,160.0 371.9,155.4 370.9,150.7 369.9,145.9 368.9,140.9 367.9,135.9 366.9,130.8 365.9,125.8 364.9,120.8 363.9,115.9 362.9,111.1 361.9,106.5 360.9,102.0 359.9,97.9 358.9,93.9 357.9,90.3 357.0,87.0 356.0,84.1 355.0,81.5 354.0,79.4 353.0,77.6 352.0,76.3 351.0,76.0 350.0,76.9 349.0,78.2 348.0,79.7 347.0,81.5 346.0,83.5 345.0,85.8 344.0,88.4 343.0,91.2 342.0,94.2 341.0,97.4 340.0,100.7 339.0,104.3 338.0,108.0 337.0,111.8 336.0,115.7 335.0,119.7 334.0,123.8 333.0,127.9 332.0,132.0 331.0,136.1 330.0,140.8 329.0,145.8 328.0,150.6 327.0,155.3 326.0,159.9 325.0,164.2 324.0,168.3 323.0,172.1 322.0,175.5 321.0,178.7 320.0,181.4 319.0,183.8 318.0,185.8 317.0,187.4 316.0,188.5 315.0,189.2 314.0,189.5 313.0,189.5 312.0,189.5 311.0,189.5 310.0,189.5 309.0,189.3 308.0,188.8 307.0,188.0 306.0,186.9 305.0,185.5 304.1,183.8 303.1,181.9 302.1,179.7 301.1,177.3 300.1,174.6 299.1,171.7 298.1,168.6 297.1,165.3 296.1,161.8 295.1,158.2 294.1,154.5 293.1,150.6 292.1,146.6 291.1,142.6 290.1,138.5 289.1,134.3 288.1,130.2 287.1,126.1 286.1,122.0 285.1,117.9 284.1,114.0 283.1,110.1 282.1,106.3 281.1,102.7 280.1,99.2 279.1,95.9 278.1,92.8 277.1,89.9 276.1,87.2 275.1,84.8 274.1,82.6 273.1,81.2 272.1,83.7 271.1,86.6 270.1,89.8 269.1,93.4 268.1,97.2 267.1,101.4 266.1,105.8 265.1,110.4 264.1,115.1 263.1,120.0 262.1,125.0 261.1,130.0 260.1,135.1 259.1,140.1 258.1,145.1 257.1,150.0 256.1,154.7 255.1,159.3 254.1,163.6 253.1,167.7 252.2,171.6 251.2,175.1 250.2,178.3 249.2,181.1 248.2,183.5 247.2,185.6 246.2,187.2 245.2,188.4 244.2,189.2 243.2,189.5 242.2,189.5 241.2,189.5 240.2,189.5 239.2,189.5 238.2,189.5 237.2,189.5 236.2,189.5 235.2,189.5 234.2,189.5 233.2,189.5 232.2,189.5 231.2,189.5 230.2,189.5 229.2,189.5 228.2,189.5 227.2,189.5 226.2,189.5 225.2,189.5 224.2,189.5 223.2,189.5 222.2,189.3 221.2,188.7 220.2,187.9 219.2,186.8 218.2,185.4 217.2,183.7 216.2,181.8 215.2,179.6 214.2,177.1 213.2,174.4 212.2,171.5 211.2,168.4 210.2,165.1 209.2,161.6 208.2,158.0 207.2,154.2 206.2,150.4 205.2,146.4 204.2,142.3 203.2,138.2 202.2,134.1 201.2,130.0 200.3,125.8 199.3,121.8 198.3,117.7 197.3,113.7 196.3,109.9 195.3,106.1 194.3,109.7 193.3,114.5 192.3,119.3 191.3,124.3 190.3,129.3 189.3,134.4 188.3,139.4 187.3,144.4 186.3,149.3 185.3,154.1 184.3,158.7 183.3,163.0 182.3,167.2 181.3,171.0 180.3,174.6 179.3,177.8 178.3,180.7 177.3,183.2 176.3,185.3 175.3,187.0 174.3,188.3 173.3,189.1 172.3,189.5 171.3,189.5 170.3,189.5 169.3,189.5 168.3,189.5 167.3,189.5 166.3,189.5 165.3,189.5 164.3,189.5 163.3,189.5 162.3,189.5 161.3,189.5 160.3,189.5 159.3,189.5 158.3,189.5 157.3,189.5 156.3,189.5 155.3,189.5 154.3,189.5 153.3,189.5 152.3,189.5 151.3,189.5 150.3,189.5 149.3,189.5 148.4,189.5 147.4,189.5 146.4,189.5 145.4,189.5 144.4,189.5 143.4,189.5 142.4,189.5 141.4,189.5 140.4,189.5 139.4,189.5 138.4,189.5 137.4,189.5 136.4,189.5 135.4,189.2 134.4,188.7 133.4,187.9 132.4,186.7 131.4,185.3 130.4,183.6 129.4,181.6 128.4,179.4 127.4,177.0 126.4,174.3 125.4,171.3 124.4,168.2 123.4,164.9 122.4,161.4 121.4,157.8 120.4,154.0 119.4,150.1 118.4,146.2 117.4,142.1 116.4,143.8 115.4,148.7 114.4,153.4 113.4,158.0 112.4,162.5 111.4,166.6 110.4,170.5 109.4,174.1 108.4,177.4 107.4,180.4 106.4,182.9 105.4,185.1 104.4,186.8 103.4,188.1 102.4,189.0 101.4,189.4 100.4,189.5 99.4,189.5 98.4,189.5 97.4,189.5 96.5,189.5 95.5,189.5 94.5,189.5 93.5,189.5 92.5,189.5 91.5,189.5 90.5,189.5 89.5,189.5 88.5,189.5 87.5,189.5 86.5,189.5 85.5,189.5 84.5,189.5 83.5,189.5 82.5,189.5 81.5,189.5 80.5,189.5 79.5,189.5 78.5,189.5 77.5,189.5 76.5,189.5 75.5,189.5 74.5,189.5 73.5,189.5 72.5,189.5 71.5,189.5 70.5,189.5 69.5,189.5 68.5,189.5 67.5,189.5 66.5,189.5 65.5,189.5 64.5,189.5 63.5,189.5 62.5,189.5 61.5,189.5 60.5,189.5 59.5,189.5 58.5,189.5 57.5,189.5 56.5,189.5 55.5,189.5 54.5,189.5 53.5,189.5 52.5,189.5 51.5,189.5 50.5,189.5 49.5,189.5 48.5,189.2 47.5,188.7 46.5,187.8 45.5,186.6 44.6,185.2 43.6,183.5 42.6,181.5 41.6,179.3 40.6,176.8 39.6,174.1 38.6,173.7 37.6,177.0 36.6,180.0 35.6,182.6 34.6,184.8 33.6,186.6 32.6,188.0 31.6,188.9 30.6,189.4 29.6,189.5 28.6,189.5 27.6,189.5 26.6,189.5 25.6,189.5 24.6,189.5 23.6,189.5 22.6,189.5 21.6,189.5 20.6,189.5 19.6,189.5 18.6,189.5Z" fill="url(#wg)"/><g clip-path="url(#ec)"><path d="M18.6,94.6 20.6,101.3 22.6,108.7 24.6,116.5 26.6,124.6 28.6,132.9 30.6,141.1 32.6,149.1 34.6,156.8 36.6,163.9 38.6,170.4 40.6,176.0 42.6,180.7 44.6,184.4 46.5,187.0 48.5,188.4 50.5,188.6 52.5,187.7 54.5,185.5 56.5,182.3 58.5,177.9 60.5,172.6 62.5,166.5 64.5,159.6 66.5,152.1 68.5,144.2 70.5,136.0 72.5,127.8 74.5,119.6 76.5,111.6 78.5,104.1 80.5,97.1 82.5,90.8 84.5,85.4 86.5,81.0 88.5,77.6 90.5,75.3 92.5,74.2 94.5,74.3 96.5,75.6 98.4,78.0 100.4,81.6 102.4,86.2 104.4,91.7 106.4,98.1 108.4,105.1 110.4,112.7 112.4,120.7 114.4,128.9 116.4,137.2 118.4,145.4 120.4,153.2 122.4,160.6 124.4,167.4 126.4,173.5 128.4,178.6 130.4,182.8 132.4,185.9 134.4,187.9 136.4,188.7 138.4,188.3 140.4,186.7 142.4,184.0 144.4,180.1 146.4,175.3 148.4,169.5 150.3,162.9 152.3,155.7 154.3,148.0 156.3,139.9 158.3,131.7 160.3,123.4 162.3,115.3 164.3,107.6 166.3,100.3 168.3,93.7 170.3,87.9 172.3,83.0 174.3,79.1 176.3,76.2 178.3,74.6 180.3,74.1 182.3,74.8 184.3,76.7 186.3,79.8 188.3,83.9 190.3,89.0 192.3,95.0 194.3,101.7 196.3,109.1 198.3,116.9 200.3,125.0 202.2,133.3 204.2,141.5 206.2,149.6 208.2,157.2 210.2,164.3 212.2,170.7 214.2,176.3 216.2,181.0 218.2,184.6 220.2,187.1 222.2,188.5 224.2,188.6 226.2,187.6 228.2,185.4 230.2,182.1 232.2,177.7 234.2,172.3 236.2,166.1 238.2,159.2 240.2,151.7 242.2,143.8 244.2,135.6 246.2,127.3 248.2,119.1 250.2,111.2 252.2,103.7 254.1,96.7 256.1,90.5 258.1,85.2 260.1,80.8 262.1,77.4 264.1,75.2 266.1,74.2 268.1,74.3 270.1,75.7 272.1,78.2 274.1,81.8 276.1,86.4 278.1,92.0 280.1,98.4 282.1,105.5 284.1,113.2 286.1,121.2 288.1,129.4 290.1,137.7 292.1,145.8 294.1,153.7 296.1,161.0 298.1,167.8 300.1,173.8 302.1,178.9 304.1,183.0 306.0,186.1 308.0,188.0 310.0,188.7 312.0,188.2 314.0,186.6 316.0,183.8 318.0,179.9 320.0,175.0 322.0,169.2 324.0,162.6 326.0,155.3 328.0,147.6 330.0,139.5 332.0,131.2 334.0,123.0 336.0,114.9 338.0,107.2 340.0,99.9 342.0,93.4 344.0,87.6 346.0,82.7 348.0,78.9 350.0,76.1 352.0,74.5 354.0,74.1 356.0,74.9 357.9,76.9 359.9,80.0 361.9,84.1 363.9,89.3 365.9,95.3 367.9,102.1 369.9,109.5 371.9,117.4 373.9,125.5 375.9,133.8 377.9,142.0 379.9,150.0 381.9,157.6 383.9,164.7 385.9,171.0 387.9,176.6 389.9,181.2 391.9,184.8 393.9,187.2 395.9,188.5 397.9,188.6 399.9,187.5 401.9,185.2 403.9,181.8 405.9,177.4 407.9,172.0 409.8,165.8 411.8,158.8 413.8,151.3 415.8,143.3 417.8,135.1 419.8,126.8 421.8,118.7 423.8,110.7 425.8,103.3 427.8,96.4 429.8,90.2 431.8,84.9 433.8,80.6 435.8,77.3 437.8,75.1 439.8,74.2 441.8,74.4 443.8,75.8 445.8,78.4 447.8,82.0 449.8,86.7 451.8,92.4 453.8,98.8 455.8,105.9 457.8,113.6 459.8,121.6 461.7,129.9 463.7,138.1 465.7,146.3 467.7,154.1 469.7,161.4 471.7,168.1 473.7,174.1 475.7,179.1 477.7,183.2 479.7,186.2 481.7,188.0 483.7,188.7 485.7,188.2 487.7,186.4 489.7,183.6 491.7,179.6 493.7,174.7 495.7,168.8 497.7,162.2 499.7,154.9 501.7,147.1 503.7,139.0 505.7,130.7 507.7,122.5 509.7,114.4 511.7,106.7 513.6,99.5 515.6,93.0 517.6,87.3 519.6,82.5 521.6,78.7 523.6,76.0 525.6,74.5 527.6,74.1 529.6,75.0 531.6,77.0 533.6,80.2 535.6,84.4 537.6,89.6 539.6,95.7 541.6,102.5 543.6,109.9 545.6,117.8 547.6,126.0 549.6,134.2 551.6,142.4 553.6,150.4 555.6,158.0 557.6,165.0 559.6,171.4 561.6,176.9 563.6,181.4 565.5,184.9 567.5,187.3 569.5,188.5 571.5,188.6 573.5,187.4 575.5,185.1 577.5,181.6 579.5,177.1 581.5,171.7 583.5,165.4 585.5,158.4 587.5,150.8 589.5,142.9 591.5,134.7 593.5,126.4 595.5,118.2 597.5,110.3 599.5,102.9 601.5,96.0 603.5,89.9 605.5,84.6 607.5,80.3 609.5,77.1 611.5,75.0 613.5,74.1 615.5,74.4 617.4,75.9 619.4,78.5 621.4,82.3 623.4,87.0 625.4,92.7 627.4,99.2 629.4,106.4 631.4,114.0 633.4,122.1 635.4,130.3 637.4,138.6 639.4,146.7 641.4,154.5 643.4,161.8 L643.4,164.2 641.4,157.1 639.4,149.4 637.4,141.4 635.4,133.1 633.4,124.9 631.4,116.7 629.4,108.9 627.4,101.5 625.4,94.8 623.4,88.8 621.4,83.7 619.4,79.6 617.4,76.6 615.5,74.8 613.5,74.1 611.5,74.6 609.5,76.4 607.5,79.2 605.5,83.2 603.5,88.2 601.5,94.1 599.5,100.7 597.5,108.1 595.5,115.9 593.5,124.0 591.5,132.3 589.5,140.5 587.5,148.6 585.5,156.3 583.5,163.5 581.5,170.0 579.5,175.7 577.5,180.5 575.5,184.2 573.5,186.9 571.5,188.4 569.5,188.7 567.5,187.7 565.5,185.7 563.6,182.4 561.6,178.1 559.6,172.9 557.6,166.7 555.6,159.8 553.6,152.4 551.6,144.4 549.6,136.3 547.6,128.0 545.6,119.7 543.6,111.8 541.6,104.2 539.6,97.2 537.6,90.9 535.6,85.5 533.6,81.0 531.6,77.6 529.6,75.3 527.6,74.2 525.6,74.3 523.6,75.6 521.6,78.0 519.6,81.6 517.6,86.2 515.6,91.8 513.6,98.2 511.7,105.2 509.7,112.9 507.7,120.9 505.7,129.1 503.7,137.4 501.7,145.6 499.7,153.5 497.7,160.9 495.7,167.6 493.7,173.7 491.7,178.8 489.7,183.0 487.7,186.0 485.7,188.0 483.7,188.7 481.7,188.2 479.7,186.6 477.7,183.8 475.7,179.9 473.7,175.0 471.7,169.1 469.7,162.5 467.7,155.2 465.7,147.5 463.7,139.3 461.7,131.1 459.8,122.8 457.8,114.7 455.8,107.0 453.8,99.8 451.8,93.2 449.8,87.4 447.8,82.6 445.8,78.8 443.8,76.0 441.8,74.5 439.8,74.1 437.8,75.0 435.8,77.0 433.8,80.1 431.8,84.4 429.8,89.6 427.8,95.7 425.8,102.5 423.8,110.0 421.8,117.8 419.8,126.0 417.8,134.3 415.8,142.5 413.8,150.5 411.8,158.1 409.8,165.2 407.9,171.5 405.9,177.0 403.9,181.5 401.9,185.0 399.9,187.4 397.9,188.6 395.9,188.5 393.9,187.3 391.9,185.0 389.9,181.5 387.9,176.9 385.9,171.4 383.9,165.1 381.9,158.0 379.9,150.4 377.9,142.4 375.9,134.2 373.9,125.9 371.9,117.7 369.9,109.8 367.9,102.4 365.9,95.6 363.9,89.5 361.9,84.3 359.9,80.1 357.9,76.9 356.0,74.9 354.0,74.1 352.0,74.5 350.0,76.1 348.0,78.8 346.0,82.6 344.0,87.5 342.0,93.3 340.0,99.9 338.0,107.1 336.0,114.8 334.0,122.9 332.0,131.2 330.0,139.5 328.0,147.6 326.0,155.3 324.0,162.6 322.0,169.2 320.0,175.0 318.0,179.9 316.0,183.8 314.0,186.6 312.0,188.2 310.0,188.7 308.0,187.9 306.0,186.0 304.1,182.9 302.1,178.7 300.1,173.6 298.1,167.5 296.1,160.8 294.1,153.3 292.1,145.5 290.1,137.3 288.1,129.0 286.1,120.8 284.1,112.8 282.1,105.1 280.1,98.1 278.1,91.7 276.1,86.1 274.1,81.5 272.1,78.0 270.1,75.6 268.1,74.3 266.1,74.2 264.1,75.3 262.1,77.7 260.1,81.1 258.1,85.6 256.1,91.0 254.1,97.3 252.2,104.3 250.2,111.9 248.2,119.9 246.2,128.1 244.2,136.4 242.2,144.6 240.2,152.5 238.2,159.9 236.2,166.8 234.2,172.9 232.2,178.2 230.2,182.5 228.2,185.7 226.2,187.8 224.2,188.7 222.2,188.4 220.2,186.9 218.2,184.2 216.2,180.4 214.2,175.6 212.2,169.9 210.2,163.4 208.2,156.2 206.2,148.5 204.2,140.4 202.2,132.1 200.3,123.9 198.3,115.7 196.3,107.9 194.3,100.6 192.3,94.0 190.3,88.1 188.3,83.1 186.3,79.2 184.3,76.3 182.3,74.6 180.3,74.1 178.3,74.8 176.3,76.7 174.3,79.7 172.3,83.8 170.3,88.9 168.3,94.8 166.3,101.6 164.3,109.0 162.3,116.8 160.3,125.0 158.3,133.3 156.3,141.5 154.3,149.5 152.3,157.2 150.3,164.3 148.4,170.7 146.4,176.3 144.4,181.0 142.4,184.6 140.4,187.1 138.4,188.5 136.4,188.6 134.4,187.6 132.4,185.3 130.4,182.0 128.4,177.6 126.4,172.2 124.4,165.9 122.4,159.0 120.4,151.4 118.4,143.5 116.4,135.3 114.4,127.0 112.4,118.8 110.4,110.8 108.4,103.3 106.4,96.4 104.4,90.2 102.4,84.9 100.4,80.6 98.4,77.3 96.5,75.1 94.5,74.2 92.5,74.4 90.5,75.8 88.5,78.4 86.5,82.1 84.5,86.8 82.5,92.5 80.5,99.0 78.5,106.1 76.5,113.8 74.5,121.9 72.5,130.1 70.5,138.4 68.5,146.6 66.5,154.4 64.5,161.7 62.5,168.4 60.5,174.3 58.5,179.4 56.5,183.4 54.5,186.3 52.5,188.1 50.5,188.7 48.5,188.1 46.5,186.3 44.6,183.4 42.6,179.3 40.6,174.3 38.6,168.4 36.6,161.7 34.6,154.3 32.6,146.5 30.6,138.4 28.6,130.1 26.6,121.8 24.6,113.8 22.6,106.1 20.6,98.9 18.6,92.4Z" fill="url(#eg)" fill-opacity="0.95" stroke="url(#eg)" stroke-opacity="0.47" stroke-width="0.6"/><path d="M18.6,92.4 20.6,98.9 22.6,106.1 24.6,113.8 26.6,121.8 28.6,130.1 30.6,138.4 32.6,146.5 34.6,154.3 36.6,161.7 38.6,168.4 40.6,174.3 42.6,179.3 44.6,183.4 46.5,186.3 48.5,188.1 50.5,188.7 52.5,188.1 54.5,186.3 56.5,183.4 58.5,179.4 60.5,174.3 62.5,168.4 64.5,161.7 66.5,154.4 68.5,146.6 70.5,138.4 72.5,130.1 74.5,121.9 76.5,113.8 78.5,106.1 80.5,99.0 82.5,92.5 84.5,86.8 86.5,82.1 88.5,78.4 90.5,75.8 92.5,74.4 94.5,74.2 96.5,75.1 98.4,77.3 100.4,80.6 102.4,84.9 104.4,90.2 106.4,96.4 108.4,103.3 110.4,110.8 112.4,118.8 114.4,127.0 116.4,135.3 118.4,143.5 120.4,151.4 122.4,159.0 124.4,165.9 126.4,172.2 128.4,177.6 130.4,182.0 132.4,185.3 134.4,187.6 136.4,188.6 138.4,188.5 140.4,187.1 142.4,184.6 144.4,181.0 146.4,176.3 148.4,170.7 150.3,164.3 152.3,157.2 154.3,149.5 156.3,141.5 158.3,133.3 160.3,125.0 162.3,116.8 164.3,109.0 166.3,101.6 168.3,94.8 170.3,88.9 172.3,83.8 174.3,79.7 176.3,76.7 178.3,74.8 180.3,74.1 182.3,74.6 184.3,76.3 186.3,79.2 188.3,83.1 190.3,88.1 192.3,94.0 194.3,100.6 196.3,107.9 198.3,115.7 200.3,123.9 202.2,132.1 204.2,140.4 206.2,148.5 208.2,156.2 210.2,163.4 212.2,169.9 214.2,175.6 216.2,180.4 218.2,184.2 220.2,186.9 222.2,188.4 224.2,188.7 226.2,187.8 228.2,185.7 230.2,182.5 232.2,178.2 234.2,172.9 236.2,166.8 238.2,159.9 240.2,152.5 242.2,144.6 244.2,136.4 246.2,128.1 248.2,119.9 250.2,111.9 252.2,104.3 254.1,97.3 256.1,91.0 258.1,85.6 260.1,81.1 262.1,77.7 264.1,75.3 266.1,74.2 268.1,74.3 270.1,75.6 272.1,78.0 274.1,81.5 276.1,86.1 278.1,91.7 280.1,98.1 282.1,105.1 284.1,112.8 286.1,120.8 288.1,129.0 290.1,137.3 292.1,145.5 294.1,153.3 296.1,160.8 298.1,167.5 300.1,173.6 302.1,178.7 304.1,182.9 306.0,186.0 308.0,187.9 310.0,188.7 312.0,188.2 314.0,186.6 316.0,183.8 318.0,179.9 320.0,175.0 322.0,169.2 324.0,162.6 326.0,155.3 328.0,147.6 330.0,139.5 332.0,131.2 334.0,122.9 336.0,114.8 338.0,107.1 340.0,99.9 342.0,93.3 344.0,87.5 346.0,82.6 348.0,78.8 350.0,76.1 352.0,74.5 354.0,74.1 356.0,74.9 357.9,76.9 359.9,80.1 361.9,84.3 363.9,89.5 365.9,95.6 367.9,102.4 369.9,109.8 371.9,117.7 373.9,125.9 375.9,134.2 377.9,142.4 379.9,150.4 381.9,158.0 383.9,165.1 385.9,171.4 387.9,176.9 389.9,181.5 391.9,185.0 393.9,187.3 395.9,188.5 397.9,188.6 399.9,187.4 401.9,185.0 403.9,181.5 405.9,177.0 407.9,171.5 409.8,165.2 411.8,158.1 413.8,150.5 415.8,142.5 417.8,134.3 419.8,126.0 421.8,117.8 423.8,110.0 425.8,102.5 427.8,95.7 429.8,89.6 431.8,84.4 433.8,80.1 435.8,77.0 437.8,75.0 439.8,74.1 441.8,74.5 443.8,76.0 445.8,78.8 447.8,82.6 449.8,87.4 451.8,93.2 453.8,99.8 455.8,107.0 457.8,114.7 459.8,122.8 461.7,131.1 463.7,139.3 465.7,147.5 467.7,155.2 469.7,162.5 471.7,169.1 473.7,175.0 475.7,179.9 477.7,183.8 479.7,186.6 481.7,188.2 483.7,188.7 485.7,188.0 487.7,186.0 489.7,183.0 491.7,178.8 493.7,173.7 495.7,167.6 497.7,160.9 499.7,153.5 501.7,145.6 503.7,137.4 505.7,129.1 507.7,120.9 509.7,112.9 511.7,105.2 513.6,98.2 515.6,91.8 517.6,86.2 519.6,81.6 521.6,78.0 523.6,75.6 525.6,74.3 527.6,74.2 529.6,75.3 531.6,77.6 533.6,81.0 535.6,85.5 537.6,90.9 539.6,97.2 541.6,104.2 543.6,111.8 545.6,119.7 547.6,128.0 549.6,136.3 551.6,144.4 553.6,152.4 555.6,159.8 557.6,166.7 559.6,172.9 561.6,178.1 563.6,182.4 565.5,185.7 567.5,187.7 569.5,188.7 571.5,188.4 573.5,186.9 575.5,184.2 577.5,180.5 579.5,175.7 581.5,170.0 583.5,163.5 585.5,156.3 587.5,148.6 589.5,140.5 591.5,132.3 593.5,124.0 595.5,115.9 597.5,108.1 599.5,100.7 601.5,94.1 603.5,88.2 605.5,83.2 607.5,79.2 609.5,76.4 611.5,74.6 613.5,74.1 615.5,74.8 617.4,76.6 619.4,79.6 621.4,83.7 623.4,88.8 625.4,94.8 627.4,101.5 629.4,108.9 631.4,116.7 633.4,124.9 635.4,133.1 637.4,141.4 639.4,149.4 641.4,157.1 643.4,164.2 L643.4,169.8 641.4,163.3 639.4,156.0 637.4,148.3 635.4,140.1 633.4,131.8 631.4,123.5 629.4,115.3 627.4,107.5 625.4,100.2 623.4,93.6 621.4,87.7 619.4,82.8 617.4,78.9 615.5,76.1 613.5,74.5 611.5,74.1 609.5,74.9 607.5,76.9 605.5,80.1 603.5,84.3 601.5,89.6 599.5,95.7 597.5,102.6 595.5,110.1 593.5,118.0 591.5,126.2 589.5,134.6 587.5,142.9 585.5,150.9 583.5,158.5 581.5,165.5 579.5,171.9 577.5,177.3 575.5,181.8 573.5,185.2 571.5,187.5 569.5,188.6 567.5,188.5 565.5,187.2 563.6,184.6 561.6,181.0 559.6,176.3 557.6,170.7 555.6,164.2 553.6,157.1 551.6,149.3 549.6,141.3 547.6,133.0 545.6,124.6 543.6,116.4 541.6,108.6 539.6,101.2 537.6,94.4 535.6,88.5 533.6,83.4 531.6,79.4 529.6,76.4 527.6,74.7 525.6,74.1 523.6,74.7 521.6,76.6 519.6,79.6 517.6,83.7 515.6,88.8 513.6,94.8 511.7,101.6 509.7,109.0 507.7,116.9 505.7,125.1 503.7,133.4 501.7,141.7 499.7,149.8 497.7,157.5 495.7,164.6 493.7,171.0 491.7,176.6 489.7,181.3 487.7,184.8 485.7,187.3 483.7,188.5 481.7,188.6 479.7,187.4 477.7,185.1 475.7,181.6 473.7,177.0 471.7,171.5 469.7,165.1 467.7,158.1 465.7,150.4 463.7,142.4 461.7,134.1 459.8,125.8 457.8,117.5 455.8,109.6 453.8,102.2 451.8,95.3 449.8,89.2 447.8,84.1 445.8,79.9 443.8,76.8 441.8,74.8 439.8,74.1 437.8,74.6 435.8,76.3 433.8,79.1 431.8,83.1 429.8,88.0 427.8,93.9 425.8,100.6 423.8,108.0 421.8,115.8 419.8,124.0 417.8,132.3 415.8,140.6 413.8,148.7 411.8,156.5 409.8,163.7 407.9,170.2 405.9,175.9 403.9,180.7 401.9,184.4 399.9,187.0 397.9,188.4 395.9,188.6 393.9,187.6 391.9,185.4 389.9,182.1 387.9,177.7 385.9,172.3 383.9,166.1 381.9,159.1 379.9,151.5 377.9,143.5 375.9,135.2 373.9,126.9 371.9,118.7 369.9,110.7 367.9,103.1 365.9,96.2 363.9,90.0 361.9,84.7 359.9,80.4 357.9,77.1 356.0,75.0 354.0,74.1 352.0,74.4 350.0,76.0 348.0,78.7 346.0,82.5 344.0,87.3 342.0,93.1 340.0,99.7 338.0,106.9 336.0,114.7 334.0,122.8 332.0,131.2 330.0,139.5 328.0,147.6 326.0,155.4 324.0,162.7 322.0,169.4 320.0,175.2 318.0,180.1 316.0,184.0 314.0,186.7 312.0,188.3 310.0,188.7 308.0,187.8 306.0,185.8 304.1,182.6 302.1,178.4 300.1,173.1 298.1,167.0 296.1,160.1 294.1,152.6 292.1,144.6 290.1,136.4 288.1,128.0 286.1,119.8 284.1,111.7 282.1,104.1 280.1,97.1 278.1,90.8 276.1,85.4 274.1,80.9 272.1,77.5 270.1,75.3 268.1,74.2 266.1,74.3 264.1,75.7 262.1,78.2 260.1,81.9 258.1,86.6 256.1,92.2 254.1,98.7 252.2,105.9 250.2,113.6 248.2,121.7 246.2,130.0 244.2,138.4 242.2,146.5 240.2,154.4 238.2,161.8 236.2,168.5 234.2,174.4 232.2,179.5 230.2,183.5 228.2,186.4 226.2,188.2 224.2,188.7 222.2,188.0 220.2,186.2 218.2,183.1 216.2,179.0 214.2,173.9 212.2,167.8 210.2,161.0 208.2,153.6 206.2,145.7 204.2,137.5 202.2,129.2 200.3,120.9 198.3,112.8 196.3,105.2 194.3,98.0 192.3,91.6 190.3,86.1 188.3,81.5 186.3,77.9 184.3,75.5 182.3,74.3 180.3,74.2 178.3,75.4 176.3,77.8 174.3,81.3 172.3,85.9 170.3,91.4 168.3,97.8 166.3,104.9 164.3,112.5 162.3,120.6 160.3,128.9 158.3,137.2 156.3,145.4 154.3,153.3 152.3,160.8 150.3,167.6 148.4,173.7 146.4,178.8 144.4,183.0 142.4,186.1 140.4,188.0 138.4,188.7 136.4,188.2 134.4,186.5 132.4,183.6 130.4,179.6 128.4,174.6 126.4,168.7 124.4,162.0 122.4,154.7 120.4,146.8 118.4,138.6 116.4,130.3 114.4,122.0 112.4,113.9 110.4,106.2 108.4,99.0 106.4,92.5 104.4,86.8 102.4,82.0 100.4,78.3 98.4,75.8 96.5,74.4 94.5,74.2 92.5,75.2 90.5,77.4 88.5,80.8 86.5,85.2 84.5,90.6 82.5,96.9 80.5,103.9 78.5,111.5 76.5,119.5 74.5,127.7 72.5,136.1 70.5,144.3 68.5,152.3 66.5,159.8 64.5,166.7 62.5,172.9 60.5,178.2 58.5,182.5 56.5,185.7 54.5,187.8 52.5,188.7 50.5,188.3 48.5,186.8 46.5,184.1 44.6,180.2 42.6,175.4 40.6,169.6 38.6,163.0 36.6,155.7 34.6,147.9 32.6,139.8 30.6,131.5 28.6,123.1 26.6,115.0 24.6,107.2 22.6,99.9 20.6,93.3 18.6,87.5Z" fill="url(#eg)" fill-opacity="0.75" stroke="url(#eg)" stroke-opacity="0.38" stroke-width="0.6"/><path d="M18.6,87.5 20.6,93.3 22.6,99.9 24.6,107.2 26.6,115.0 28.6,123.1 30.6,131.5 32.6,139.8 34.6,147.9 36.6,155.7 38.6,163.0 40.6,169.6 42.6,175.4 44.6,180.2 46.5,184.1 48.5,186.8 50.5,188.3 52.5,188.7 54.5,187.8 56.5,185.7 58.5,182.5 60.5,178.2 62.5,172.9 64.5,166.7 66.5,159.8 68.5,152.3 70.5,144.3 72.5,136.1 74.5,127.7 76.5,119.5 78.5,111.5 80.5,103.9 82.5,96.9 84.5,90.6 86.5,85.2 88.5,80.8 90.5,77.4 92.5,75.2 94.5,74.2 96.5,74.4 98.4,75.8 100.4,78.3 102.4,82.0 104.4,86.8 106.4,92.5 108.4,99.0 110.4,106.2 112.4,113.9 114.4,122.0 116.4,130.3 118.4,138.6 120.4,146.8 122.4,154.7 124.4,162.0 126.4,168.7 128.4,174.6 130.4,179.6 132.4,183.6 134.4,186.5 136.4,188.2 138.4,188.7 140.4,188.0 142.4,186.1 144.4,183.0 146.4,178.8 148.4,173.7 150.3,167.6 152.3,160.8 154.3,153.3 156.3,145.4 158.3,137.2 160.3,128.9 162.3,120.6 164.3,112.5 166.3,104.9 168.3,97.8 170.3,91.4 172.3,85.9 174.3,81.3 176.3,77.8 178.3,75.4 180.3,74.2 182.3,74.3 184.3,75.5 186.3,77.9 188.3,81.5 190.3,86.1 192.3,91.6 194.3,98.0 196.3,105.2 198.3,112.8 200.3,120.9 202.2,129.2 204.2,137.5 206.2,145.7 208.2,153.6 210.2,161.0 212.2,167.8 214.2,173.9 216.2,179.0 218.2,183.1 220.2,186.2 222.2,188.0 224.2,188.7 226.2,188.2 228.2,186.4 230.2,183.5 232.2,179.5 234.2,174.4 236.2,168.5 238.2,161.8 240.2,154.4 242.2,146.5 244.2,138.4 246.2,130.0 248.2,121.7 250.2,113.6 252.2,105.9 254.1,98.7 256.1,92.2 258.1,86.6 260.1,81.9 262.1,78.2 264.1,75.7 266.1,74.3 268.1,74.2 270.1,75.3 272.1,77.5 274.1,80.9 276.1,85.4 278.1,90.8 280.1,97.1 282.1,104.1 284.1,111.7 286.1,119.8 288.1,128.0 290.1,136.4 292.1,144.6 294.1,152.6 296.1,160.1 298.1,167.0 300.1,173.1 302.1,178.4 304.1,182.6 306.0,185.8 308.0,187.8 310.0,188.7 312.0,188.3 314.0,186.7 316.0,184.0 318.0,180.1 320.0,175.2 322.0,169.4 324.0,162.7 326.0,155.4 328.0,147.6 330.0,139.5 332.0,131.2 334.0,122.8 336.0,114.7 338.0,106.9 340.0,99.7 342.0,93.1 344.0,87.3 346.0,82.5 348.0,78.7 350.0,76.0 352.0,74.4 354.0,74.1 356.0,75.0 357.9,77.1 359.9,80.4 361.9,84.7 363.9,90.0 365.9,96.2 367.9,103.1 369.9,110.7 371.9,118.7 373.9,126.9 375.9,135.2 377.9,143.5 379.9,151.5 381.9,159.1 383.9,166.1 385.9,172.3 387.9,177.7 389.9,182.1 391.9,185.4 393.9,187.6 395.9,188.6 397.9,188.4 399.9,187.0 401.9,184.4 403.9,180.7 405.9,175.9 407.9,170.2 409.8,163.7 411.8,156.5 413.8,148.7 415.8,140.6 417.8,132.3 419.8,124.0 421.8,115.8 423.8,108.0 425.8,100.6 427.8,93.9 429.8,88.0 431.8,83.1 433.8,79.1 435.8,76.3 437.8,74.6 439.8,74.1 441.8,74.8 443.8,76.8 445.8,79.9 447.8,84.1 449.8,89.2 451.8,95.3 453.8,102.2 455.8,109.6 457.8,117.5 459.8,125.8 461.7,134.1 463.7,142.4 465.7,150.4 467.7,158.1 469.7,165.1 471.7,171.5 473.7,177.0 475.7,181.6 477.7,185.1 479.7,187.4 481.7,188.6 483.7,188.5 485.7,187.3 487.7,184.8 489.7,181.3 491.7,176.6 493.7,171.0 495.7,164.6 497.7,157.5 499.7,149.8 501.7,141.7 503.7,133.4 505.7,125.1 507.7,116.9 509.7,109.0 511.7,101.6 513.6,94.8 515.6,88.8 517.6,83.7 519.6,79.6 521.6,76.6 523.6,74.7 525.6,74.1 527.6,74.7 529.6,76.4 531.6,79.4 533.6,83.4 535.6,88.5 537.6,94.4 539.6,101.2 541.6,108.6 543.6,116.4 545.6,124.6 547.6,133.0 549.6,141.3 551.6,149.3 553.6,157.1 555.6,164.2 557.6,170.7 559.6,176.3 561.6,181.0 563.6,184.6 565.5,187.2 567.5,188.5 569.5,188.6 571.5,187.5 573.5,185.2 575.5,181.8 577.5,177.3 579.5,171.9 581.5,165.5 583.5,158.5 585.5,150.9 587.5,142.9 589.5,134.6 591.5,126.2 593.5,118.0 595.5,110.1 597.5,102.6 599.5,95.7 601.5,89.6 603.5,84.3 605.5,80.1 607.5,76.9 609.5,74.9 611.5,74.1 613.5,74.5 615.5,76.1 617.4,78.9 619.4,82.8 621.4,87.7 623.4,93.6 625.4,100.2 627.4,107.5 629.4,115.3 631.4,123.5 633.4,131.8 635.4,140.1 637.4,148.3 639.4,156.0 641.4,163.3 643.4,169.8 L643.4,177.6 641.4,172.1 639.4,165.8 637.4,158.7 635.4,151.0 633.4,142.9 631.4,134.6 629.4,126.2 627.4,117.9 625.4,109.8 623.4,102.3 621.4,95.4 619.4,89.3 617.4,84.0 615.5,79.8 613.5,76.7 611.5,74.8 609.5,74.1 607.5,74.6 605.5,76.4 603.5,79.3 601.5,83.4 599.5,88.5 597.5,94.5 595.5,101.4 593.5,108.8 591.5,116.8 589.5,125.1 587.5,133.5 585.5,141.8 583.5,150.0 581.5,157.7 579.5,164.9 577.5,171.3 575.5,176.9 573.5,181.5 571.5,185.0 569.5,187.4 567.5,188.6 565.5,188.5 563.6,187.2 561.6,184.7 559.6,181.1 557.6,176.3 555.6,170.7 553.6,164.1 551.6,156.9 549.6,149.1 547.6,140.9 545.6,132.5 543.6,124.1 541.6,115.9 539.6,108.0 537.6,100.6 535.6,93.8 533.6,87.9 531.6,82.9 529.6,79.0 527.6,76.1 525.6,74.5 523.6,74.1 521.6,75.0 519.6,77.0 517.6,80.2 515.6,84.5 513.6,89.9 511.7,96.1 509.7,103.1 507.7,110.7 505.7,118.7 503.7,127.1 501.7,135.5 499.7,143.8 497.7,151.9 495.7,159.5 493.7,166.5 491.7,172.7 489.7,178.1 487.7,182.5 485.7,185.7 483.7,187.8 481.7,188.7 479.7,188.3 477.7,186.7 475.7,183.9 473.7,180.0 471.7,175.1 469.7,169.2 467.7,162.4 465.7,155.0 463.7,147.1 461.7,138.9 459.8,130.5 457.8,122.1 455.8,114.0 453.8,106.2 451.8,98.9 449.8,92.3 447.8,86.6 445.8,81.9 443.8,78.2 441.8,75.6 439.8,74.3 437.8,74.2 435.8,75.3 433.8,77.7 431.8,81.2 429.8,85.7 427.8,91.3 425.8,97.7 423.8,104.9 421.8,112.6 419.8,120.7 417.8,129.1 415.8,137.5 413.8,145.8 411.8,153.7 409.8,161.2 407.9,168.1 405.9,174.1 403.9,179.2 401.9,183.3 399.9,186.3 397.9,188.1 395.9,188.7 393.9,188.0 391.9,186.2 389.9,183.1 387.9,178.9 385.9,173.7 383.9,167.6 381.9,160.7 379.9,153.2 377.9,145.2 375.9,136.9 373.9,128.5 371.9,120.1 369.9,112.0 367.9,104.4 365.9,97.2 363.9,90.9 361.9,85.4 359.9,80.9 357.9,77.5 356.0,75.2 354.0,74.2 352.0,74.4 350.0,75.8 348.0,78.4 346.0,82.2 344.0,87.0 342.0,92.8 340.0,99.4 338.0,106.7 336.0,114.5 334.0,122.7 332.0,131.1 330.0,139.5 328.0,147.7 326.0,155.6 324.0,162.9 322.0,169.6 320.0,175.4 318.0,180.3 316.0,184.2 314.0,186.9 312.0,188.4 310.0,188.7 308.0,187.7 306.0,185.5 304.1,182.2 302.1,177.8 300.1,172.3 298.1,166.0 296.1,159.0 294.1,151.3 292.1,143.2 290.1,134.9 288.1,126.5 286.1,118.2 284.1,110.1 282.1,102.6 280.1,95.6 278.1,89.5 276.1,84.2 274.1,80.0 272.1,76.8 270.1,74.9 268.1,74.1 266.1,74.6 264.1,76.3 262.1,79.2 260.1,83.2 258.1,88.3 256.1,94.3 254.1,101.1 252.2,108.5 250.2,116.5 248.2,124.7 246.2,133.1 244.2,141.5 242.2,149.7 240.2,157.4 238.2,164.6 236.2,171.1 234.2,176.7 232.2,181.4 230.2,184.9 228.2,187.3 226.2,188.6 224.2,188.5 222.2,187.3 220.2,184.8 218.2,181.2 216.2,176.5 214.2,170.9 212.2,164.4 210.2,157.2 208.2,149.4 206.2,141.2 204.2,132.9 202.2,124.5 200.3,116.2 198.3,108.3 196.3,100.9 194.3,94.1 192.3,88.1 190.3,83.1 188.3,79.1 186.3,76.2 184.3,74.6 182.3,74.1 180.3,74.9 178.3,76.9 176.3,80.1 174.3,84.4 172.3,89.7 170.3,95.9 168.3,102.8 166.3,110.4 164.3,118.4 162.3,126.7 160.3,135.2 158.3,143.5 156.3,151.6 154.3,159.2 152.3,166.2 150.3,172.5 148.4,177.9 146.4,182.3 144.4,185.6 142.4,187.7 140.4,188.7 138.4,188.3 136.4,186.8 134.4,184.1 132.4,180.2 130.4,175.3 128.4,169.4 126.4,162.7 124.4,155.3 122.4,147.5 120.4,139.2 118.4,130.8 116.4,122.5 114.4,114.3 112.4,106.4 110.4,99.2 108.4,92.6 106.4,86.8 104.4,82.0 102.4,78.3 100.4,75.7 98.4,74.3 96.5,74.2 94.5,75.3 92.5,77.6 90.5,81.0 88.5,85.5 86.5,91.1 84.5,97.5 82.5,104.6 80.5,112.3 78.5,120.4 76.5,128.8 74.5,137.2 72.5,145.5 70.5,153.4 68.5,160.9 66.5,167.8 64.5,173.9 62.5,179.1 60.5,183.2 58.5,186.2 56.5,188.1 54.5,188.7 52.5,188.1 50.5,186.3 48.5,183.2 46.5,179.1 44.6,173.9 42.6,167.9 40.6,161.0 38.6,153.5 36.6,145.5 34.6,137.2 32.6,128.8 30.6,120.5 28.6,112.3 26.6,104.6 24.6,97.5 22.6,91.1 20.6,85.6 18.6,81.0Z" fill="url(#eg)" fill-opacity="0.6" stroke="url(#eg)" stroke-opacity="0.30" stroke-width="0.6"/><path d="M18.6,81.0 20.6,85.6 22.6,91.1 24.6,97.5 26.6,104.6 28.6,112.3 30.6,120.5 32.6,128.8 34.6,137.2 36.6,145.5 38.6,153.5 40.6,161.0 42.6,167.9 44.6,173.9 46.5,179.1 48.5,183.2 50.5,186.3 52.5,188.1 54.5,188.7 56.5,188.1 58.5,186.2 60.5,183.2 62.5,179.1 64.5,173.9 66.5,167.8 68.5,160.9 70.5,153.4 72.5,145.5 74.5,137.2 76.5,128.8 78.5,120.4 80.5,112.3 82.5,104.6 84.5,97.5 86.5,91.1 88.5,85.5 90.5,81.0 92.5,77.6 94.5,75.3 96.5,74.2 98.4,74.3 100.4,75.7 102.4,78.3 104.4,82.0 106.4,86.8 108.4,92.6 110.4,99.2 112.4,106.4 114.4,114.3 116.4,122.5 118.4,130.8 120.4,139.2 122.4,147.5 124.4,155.3 126.4,162.7 128.4,169.4 130.4,175.3 132.4,180.2 134.4,184.1 136.4,186.8 138.4,188.3 140.4,188.7 142.4,187.7 144.4,185.6 146.4,182.3 148.4,177.9 150.3,172.5 152.3,166.2 154.3,159.2 156.3,151.6 158.3,143.5 160.3,135.2 162.3,126.7 164.3,118.4 166.3,110.4 168.3,102.8 170.3,95.9 172.3,89.7 174.3,84.4 176.3,80.1 178.3,76.9 180.3,74.9 182.3,74.1 184.3,74.6 186.3,76.2 188.3,79.1 190.3,83.1 192.3,88.1 194.3,94.1 196.3,100.9 198.3,108.3 200.3,116.2 202.2,124.5 204.2,132.9 206.2,141.2 208.2,149.4 210.2,157.2 212.2,164.4 214.2,170.9 216.2,176.5 218.2,181.2 220.2,184.8 222.2,187.3 224.2,188.5 226.2,188.6 228.2,187.3 230.2,184.9 232.2,181.4 234.2,176.7 236.2,171.1 238.2,164.6 240.2,157.4 242.2,149.7 244.2,141.5 246.2,133.1 248.2,124.7 250.2,116.5 252.2,108.5 254.1,101.1 256.1,94.3 258.1,88.3 260.1,83.2 262.1,79.2 264.1,76.3 266.1,74.6 268.1,74.1 270.1,74.9 272.1,76.8 274.1,80.0 276.1,84.2 278.1,89.5 280.1,95.6 282.1,102.6 284.1,110.1 286.1,118.2 288.1,126.5 290.1,134.9 292.1,143.2 294.1,151.3 296.1,159.0 298.1,166.0 300.1,172.3 302.1,177.8 304.1,182.2 306.0,185.5 308.0,187.7 310.0,188.7 312.0,188.4 314.0,186.9 316.0,184.2 318.0,180.3 320.0,175.4 322.0,169.6 324.0,162.9 326.0,155.6 328.0,147.7 330.0,139.5 332.0,131.1 334.0,122.7 336.0,114.5 338.0,106.7 340.0,99.4 342.0,92.8 344.0,87.0 346.0,82.2 348.0,78.4 350.0,75.8 352.0,74.4 354.0,74.2 356.0,75.2 357.9,77.5 359.9,80.9 361.9,85.4 363.9,90.9 365.9,97.2 367.9,104.4 369.9,112.0 371.9,120.1 373.9,128.5 375.9,136.9 377.9,145.2 379.9,153.2 381.9,160.7 383.9,167.6 385.9,173.7 387.9,178.9 389.9,183.1 391.9,186.2 393.9,188.0 395.9,188.7 397.9,188.1 399.9,186.3 401.9,183.3 403.9,179.2 405.9,174.1 407.9,168.1 409.8,161.2 411.8,153.7 413.8,145.8 415.8,137.5 417.8,129.1 419.8,120.7 421.8,112.6 423.8,104.9 425.8,97.7 427.8,91.3 429.8,85.7 431.8,81.2 433.8,77.7 435.8,75.3 437.8,74.2 439.8,74.3 441.8,75.6 443.8,78.2 445.8,81.9 447.8,86.6 449.8,92.3 451.8,98.9 453.8,106.2 455.8,114.0 457.8,122.1 459.8,130.5 461.7,138.9 463.7,147.1 465.7,155.0 467.7,162.4 469.7,169.2 471.7,175.1 473.7,180.0 475.7,183.9 477.7,186.7 479.7,188.3 481.7,188.7 483.7,187.8 485.7,185.7 487.7,182.5 489.7,178.1 491.7,172.7 493.7,166.5 495.7,159.5 497.7,151.9 499.7,143.8 501.7,135.5 503.7,127.1 505.7,118.7 507.7,110.7 509.7,103.1 511.7,96.1 513.6,89.9 515.6,84.5 517.6,80.2 519.6,77.0 521.6,75.0 523.6,74.1 525.6,74.5 527.6,76.1 529.6,79.0 531.6,82.9 533.6,87.9 535.6,93.8 537.6,100.6 539.6,108.0 541.6,115.9 543.6,124.1 545.6,132.5 547.6,140.9 549.6,149.1 551.6,156.9 553.6,164.1 555.6,170.7 557.6,176.3 559.6,181.1 561.6,184.7 563.6,187.2 565.5,188.5 567.5,188.6 569.5,187.4 571.5,185.0 573.5,181.5 575.5,176.9 577.5,171.3 579.5,164.9 581.5,157.7 583.5,150.0 585.5,141.8 587.5,133.5 589.5,125.1 591.5,116.8 593.5,108.8 595.5,101.4 597.5,94.5 599.5,88.5 601.5,83.4 603.5,79.3 605.5,76.4 607.5,74.6 609.5,74.1 611.5,74.8 613.5,76.7 615.5,79.8 617.4,84.0 619.4,89.3 621.4,95.4 623.4,102.3 625.4,109.8 627.4,117.9 629.4,126.2 631.4,134.6 633.4,142.9 635.4,151.0 637.4,158.7 639.4,165.8 641.4,172.1 643.4,177.6 L643.4,185.6 641.4,182.2 639.4,177.7 637.4,172.2 635.4,165.8 633.4,158.6 631.4,150.8 629.4,142.6 627.4,134.1 625.4,125.6 623.4,117.2 621.4,109.2 619.4,101.6 617.4,94.6 615.5,88.5 613.5,83.4 611.5,79.3 609.5,76.3 607.5,74.6 605.5,74.1 603.5,74.9 601.5,76.9 599.5,80.2 597.5,84.6 595.5,90.0 593.5,96.3 591.5,103.4 589.5,111.2 587.5,119.3 585.5,127.8 583.5,136.3 581.5,144.7 579.5,152.8 577.5,160.5 575.5,167.5 573.5,173.7 571.5,179.0 569.5,183.2 567.5,186.2 565.5,188.1 563.6,188.7 561.6,188.0 559.6,186.1 557.6,183.0 555.6,178.7 553.6,173.4 551.6,167.2 549.6,160.1 547.6,152.5 545.6,144.3 543.6,135.9 541.6,127.4 539.6,118.9 537.6,110.8 535.6,103.1 533.6,96.0 531.6,89.7 529.6,84.3 527.6,80.0 525.6,76.8 523.6,74.8 521.6,74.1 519.6,74.6 517.6,76.4 515.6,79.4 513.6,83.6 511.7,88.8 509.7,95.0 507.7,101.9 505.7,109.5 503.7,117.6 501.7,126.0 499.7,134.5 497.7,143.0 495.7,151.2 493.7,159.0 491.7,166.1 489.7,172.5 487.7,177.9 485.7,182.4 483.7,185.7 481.7,187.8 479.7,188.7 477.7,188.3 475.7,186.6 473.7,183.7 471.7,179.7 469.7,174.6 467.7,168.5 465.7,161.6 463.7,154.1 461.7,146.0 459.8,137.6 457.8,129.1 455.8,120.7 453.8,112.4 451.8,104.6 449.8,97.4 447.8,90.9 445.8,85.4 443.8,80.8 441.8,77.4 439.8,75.1 437.8,74.2 435.8,74.4 433.8,76.0 431.8,78.7 429.8,82.6 427.8,87.6 425.8,93.6 423.8,100.4 421.8,107.9 419.8,115.9 417.8,124.3 415.8,132.8 413.8,141.3 411.8,149.5 409.8,157.4 407.9,164.7 405.9,171.2 403.9,176.9 401.9,181.6 399.9,185.1 397.9,187.5 395.9,188.6 393.9,188.5 391.9,187.1 389.9,184.4 387.9,180.6 385.9,175.7 383.9,169.8 381.9,163.1 379.9,155.7 377.9,147.7 375.9,139.4 373.9,130.9 371.9,122.4 369.9,114.1 367.9,106.2 365.9,98.8 363.9,92.2 361.9,86.4 359.9,81.7 357.9,78.0 356.0,75.5 354.0,74.3 352.0,74.3 350.0,75.5 348.0,78.0 346.0,81.7 344.0,86.5 342.0,92.3 340.0,99.0 338.0,106.3 336.0,114.2 334.0,122.5 332.0,131.0 330.0,139.5 328.0,147.9 326.0,155.8 324.0,163.2 322.0,170.0 320.0,175.8 318.0,180.7 316.0,184.5 314.0,187.1 312.0,188.5 310.0,188.6 308.0,187.5 306.0,185.1 304.1,181.5 302.1,176.8 300.1,171.1 298.1,164.6 296.1,157.3 294.1,149.4 292.1,141.1 290.1,132.6 288.1,124.1 286.1,115.8 284.1,107.8 282.1,100.3 280.1,93.5 278.1,87.5 276.1,82.6 274.1,78.7 272.1,75.9 270.1,74.4 268.1,74.2 266.1,75.2 264.1,77.4 262.1,80.9 260.1,85.5 258.1,91.0 256.1,97.5 254.1,104.8 252.2,112.6 250.2,120.8 248.2,129.3 246.2,137.8 244.2,146.2 242.2,154.2 240.2,161.8 238.2,168.6 236.2,174.7 234.2,179.8 232.2,183.8 230.2,186.7 228.2,188.3 226.2,188.7 224.2,187.8 222.2,185.7 220.2,182.3 218.2,177.9 216.2,172.4 214.2,166.0 212.2,158.8 210.2,151.1 208.2,142.9 206.2,134.4 204.2,125.9 202.2,117.5 200.3,109.4 198.3,101.8 196.3,94.8 194.3,88.7 192.3,83.5 190.3,79.4 188.3,76.4 186.3,74.6 184.3,74.1 182.3,74.9 180.3,76.9 178.3,80.1 176.3,84.4 174.3,89.8 172.3,96.1 170.3,103.2 168.3,110.9 166.3,119.1 164.3,127.5 162.3,136.0 160.3,144.5 158.3,152.6 156.3,160.3 154.3,167.3 152.3,173.5 150.3,178.8 148.4,183.1 146.4,186.2 144.4,188.1 142.4,188.7 140.4,188.1 138.4,186.2 136.4,183.1 134.4,178.9 132.4,173.6 130.4,167.4 128.4,160.4 126.4,152.7 124.4,144.6 122.4,136.2 120.4,127.6 118.4,119.2 116.4,111.0 114.4,103.3 112.4,96.2 110.4,89.9 108.4,84.5 106.4,80.1 104.4,76.9 102.4,74.9 100.4,74.1 98.4,74.6 96.5,76.4 94.5,79.3 92.5,83.4 90.5,88.6 88.5,94.8 86.5,101.7 84.5,109.3 82.5,117.4 80.5,125.8 78.5,134.3 76.5,142.7 74.5,151.0 72.5,158.7 70.5,165.9 68.5,172.3 66.5,177.8 64.5,182.3 62.5,185.6 60.5,187.8 58.5,188.7 56.5,188.3 54.5,186.7 52.5,183.8 50.5,179.8 48.5,174.8 46.5,168.7 44.6,161.9 42.6,154.3 40.6,146.3 38.6,137.9 36.6,129.4 34.6,120.9 32.6,112.7 30.6,104.9 28.6,97.6 26.6,91.1 24.6,85.5 22.6,80.9 20.6,77.5 18.6,75.2Z" fill="url(#eg)" fill-opacity="0.46" stroke="url(#eg)" stroke-opacity="0.23" stroke-width="0.6"/><path d="M18.6,75.2 20.6,77.5 22.6,80.9 24.6,85.5 26.6,91.1 28.6,97.6 30.6,104.9 32.6,112.7 34.6,120.9 36.6,129.4 38.6,137.9 40.6,146.3 42.6,154.3 44.6,161.9 46.5,168.7 48.5,174.8 50.5,179.8 52.5,183.8 54.5,186.7 56.5,188.3 58.5,188.7 60.5,187.8 62.5,185.6 64.5,182.3 66.5,177.8 68.5,172.3 70.5,165.9 72.5,158.7 74.5,151.0 76.5,142.7 78.5,134.3 80.5,125.8 82.5,117.4 84.5,109.3 86.5,101.7 88.5,94.8 90.5,88.6 92.5,83.4 94.5,79.3 96.5,76.4 98.4,74.6 100.4,74.1 102.4,74.9 104.4,76.9 106.4,80.1 108.4,84.5 110.4,89.9 112.4,96.2 114.4,103.3 116.4,111.0 118.4,119.2 120.4,127.6 122.4,136.2 124.4,144.6 126.4,152.7 128.4,160.4 130.4,167.4 132.4,173.6 134.4,178.9 136.4,183.1 138.4,186.2 140.4,188.1 142.4,188.7 144.4,188.1 146.4,186.2 148.4,183.1 150.3,178.8 152.3,173.5 154.3,167.3 156.3,160.3 158.3,152.6 160.3,144.5 162.3,136.0 164.3,127.5 166.3,119.1 168.3,110.9 170.3,103.2 172.3,96.1 174.3,89.8 176.3,84.4 178.3,80.1 180.3,76.9 182.3,74.9 184.3,74.1 186.3,74.6 188.3,76.4 190.3,79.4 192.3,83.5 194.3,88.7 196.3,94.8 198.3,101.8 200.3,109.4 202.2,117.5 204.2,125.9 206.2,134.4 208.2,142.9 210.2,151.1 212.2,158.8 214.2,166.0 216.2,172.4 218.2,177.9 220.2,182.3 222.2,185.7 224.2,187.8 226.2,188.7 228.2,188.3 230.2,186.7 232.2,183.8 234.2,179.8 236.2,174.7 238.2,168.6 240.2,161.8 242.2,154.2 244.2,146.2 246.2,137.8 248.2,129.3 250.2,120.8 252.2,112.6 254.1,104.8 256.1,97.5 258.1,91.0 260.1,85.5 262.1,80.9 264.1,77.4 266.1,75.2 268.1,74.2 270.1,74.4 272.1,75.9 274.1,78.7 276.1,82.6 278.1,87.5 280.1,93.5 282.1,100.3 284.1,107.8 286.1,115.8 288.1,124.1 290.1,132.6 292.1,141.1 294.1,149.4 296.1,157.3 298.1,164.6 300.1,171.1 302.1,176.8 304.1,181.5 306.0,185.1 308.0,187.5 310.0,188.6 312.0,188.5 314.0,187.1 316.0,184.5 318.0,180.7 320.0,175.8 322.0,170.0 324.0,163.2 326.0,155.8 328.0,147.9 330.0,139.5 332.0,131.0 334.0,122.5 336.0,114.2 338.0,106.3 340.0,99.0 342.0,92.3 344.0,86.5 346.0,81.7 348.0,78.0 350.0,75.5 352.0,74.3 354.0,74.3 356.0,75.5 357.9,78.0 359.9,81.7 361.9,86.4 363.9,92.2 365.9,98.8 367.9,106.2 369.9,114.1 371.9,122.4 373.9,130.9 375.9,139.4 377.9,147.7 379.9,155.7 381.9,163.1 383.9,169.8 385.9,175.7 387.9,180.6 389.9,184.4 391.9,187.1 393.9,188.5 395.9,188.6 397.9,187.5 399.9,185.1 401.9,181.6 403.9,176.9 405.9,171.2 407.9,164.7 409.8,157.4 411.8,149.5 413.8,141.3 415.8,132.8 417.8,124.3 419.8,115.9 421.8,107.9 423.8,100.4 425.8,93.6 427.8,87.6 429.8,82.6 431.8,78.7 433.8,76.0 435.8,74.4 437.8,74.2 439.8,75.1 441.8,77.4 443.8,80.8 445.8,85.4 447.8,90.9 449.8,97.4 451.8,104.6 453.8,112.4 455.8,120.7 457.8,129.1 459.8,137.6 461.7,146.0 463.7,154.1 465.7,161.6 467.7,168.5 469.7,174.6 471.7,179.7 473.7,183.7 475.7,186.6 477.7,188.3 479.7,188.7 481.7,187.8 483.7,185.7 485.7,182.4 487.7,177.9 489.7,172.5 491.7,166.1 493.7,159.0 495.7,151.2 497.7,143.0 499.7,134.5 501.7,126.0 503.7,117.6 505.7,109.5 507.7,101.9 509.7,95.0 511.7,88.8 513.6,83.6 515.6,79.4 517.6,76.4 519.6,74.6 521.6,74.1 523.6,74.8 525.6,76.8 527.6,80.0 529.6,84.3 531.6,89.7 533.6,96.0 535.6,103.1 537.6,110.8 539.6,118.9 541.6,127.4 543.6,135.9 545.6,144.3 547.6,152.5 549.6,160.1 551.6,167.2 553.6,173.4 555.6,178.7 557.6,183.0 559.6,186.1 561.6,188.0 563.6,188.7 565.5,188.1 567.5,186.2 569.5,183.2 571.5,179.0 573.5,173.7 575.5,167.5 577.5,160.5 579.5,152.8 581.5,144.7 583.5,136.3 585.5,127.8 587.5,119.3 589.5,111.2 591.5,103.4 593.5,96.3 595.5,90.0 597.5,84.6 599.5,80.2 601.5,76.9 603.5,74.9 605.5,74.1 607.5,74.6 609.5,76.3 611.5,79.3 613.5,83.4 615.5,88.5 617.4,94.6 619.4,101.6 621.4,109.2 623.4,117.2 625.4,125.6 627.4,134.1 629.4,142.6 631.4,150.8 633.4,158.6 635.4,165.8 637.4,172.2 639.4,177.7 641.4,182.2 643.4,185.6 L643.4,188.6 641.4,188.5 639.4,187.2 637.4,184.5 635.4,180.7 633.4,175.7 631.4,169.7 629.4,162.9 627.4,155.3 625.4,147.2 623.4,138.7 621.4,130.0 619.4,121.4 617.4,113.0 615.5,105.0 613.5,97.6 611.5,91.0 609.5,85.4 607.5,80.7 605.5,77.3 603.5,75.1 601.5,74.1 599.5,74.5 597.5,76.2 595.5,79.1 593.5,83.3 591.5,88.5 589.5,94.7 587.5,101.8 585.5,109.5 583.5,117.8 581.5,126.3 579.5,135.0 577.5,143.6 575.5,151.9 573.5,159.7 571.5,166.9 569.5,173.3 567.5,178.7 565.5,183.1 563.6,186.2 561.6,188.1 559.6,188.7 557.6,188.0 555.6,186.0 553.6,182.7 551.6,178.3 549.6,172.8 547.6,166.3 545.6,159.1 543.6,151.2 541.6,142.9 539.6,134.3 537.6,125.6 535.6,117.1 533.6,108.9 531.6,101.2 529.6,94.2 527.6,88.0 525.6,82.9 523.6,78.8 521.6,76.0 519.6,74.4 517.6,74.2 515.6,75.2 513.6,77.5 511.7,81.1 509.7,85.8 507.7,91.6 505.7,98.2 503.7,105.7 501.7,113.7 499.7,122.1 497.7,130.8 495.7,139.4 493.7,147.9 491.7,156.0 489.7,163.5 487.7,170.3 485.7,176.2 483.7,181.1 481.7,184.8 479.7,187.3 477.7,188.6 475.7,188.5 473.7,187.1 471.7,184.5 469.7,180.6 467.7,175.6 465.7,169.6 463.7,162.7 461.7,155.1 459.8,147.0 457.8,138.5 455.8,129.8 453.8,121.2 451.8,112.8 449.8,104.9 447.8,97.5 445.8,90.9 443.8,85.3 441.8,80.7 439.8,77.2 437.8,75.0 435.8,74.1 433.8,74.5 431.8,76.2 429.8,79.2 427.8,83.4 425.8,88.6 423.8,94.9 421.8,102.0 419.8,109.7 417.8,118.0 415.8,126.5 413.8,135.2 411.8,143.8 409.8,152.1 407.9,159.9 405.9,167.1 403.9,173.4 401.9,178.8 399.9,183.1 397.9,186.3 395.9,188.1 393.9,188.7 391.9,188.0 389.9,185.9 387.9,182.6 385.9,178.2 383.9,172.7 381.9,166.2 379.9,158.9 377.9,151.0 375.9,142.7 373.9,134.1 371.9,125.4 369.9,116.9 367.9,108.7 365.9,101.0 363.9,94.0 361.9,87.9 359.9,82.8 357.9,78.8 356.0,75.9 354.0,74.4 352.0,74.2 350.0,75.2 348.0,77.6 346.0,81.2 344.0,85.9 342.0,91.7 340.0,98.4 338.0,105.8 336.0,113.9 334.0,122.3 332.0,130.9 330.0,139.6 328.0,148.0 326.0,156.1 324.0,163.6 322.0,170.4 320.0,176.3 318.0,181.2 316.0,184.9 314.0,187.4 312.0,188.6 310.0,188.5 308.0,187.1 306.0,184.4 304.1,180.5 302.1,175.5 300.1,169.5 298.1,162.6 296.1,155.0 294.1,146.8 292.1,138.3 290.1,129.7 288.1,121.0 286.1,112.7 284.1,104.7 282.1,97.4 280.1,90.8 278.1,85.2 276.1,80.6 274.1,77.2 272.1,75.0 270.1,74.1 268.1,74.6 266.1,76.3 264.1,79.3 262.1,83.5 260.1,88.7 258.1,95.0 256.1,102.1 254.1,109.9 252.2,118.1 250.2,126.7 248.2,135.4 246.2,143.9 244.2,152.2 242.2,160.0 240.2,167.2 238.2,173.5 236.2,178.9 234.2,183.2 232.2,186.3 230.2,188.1 228.2,188.7 226.2,187.9 224.2,185.9 222.2,182.6 220.2,178.1 218.2,172.5 216.2,166.1 214.2,158.8 212.2,150.9 210.2,142.5 208.2,133.9 206.2,125.2 204.2,116.7 202.2,108.5 200.3,100.9 198.3,93.9 196.3,87.8 194.3,82.7 192.3,78.7 190.3,75.9 188.3,74.4 186.3,74.2 184.3,75.3 182.3,77.7 180.3,81.3 178.3,86.0 176.3,91.8 174.3,98.5 172.3,106.0 170.3,114.0 168.3,122.5 166.3,131.1 164.3,139.8 162.3,148.2 160.3,156.3 158.3,163.8 156.3,170.5 154.3,176.4 152.3,181.2 150.3,184.9 148.4,187.4 146.4,188.6 144.4,188.5 142.4,187.0 140.4,184.3 138.4,180.4 136.4,175.4 134.4,169.3 132.4,162.4 130.4,154.8 128.4,146.6 126.4,138.1 124.4,129.5 122.4,120.9 120.4,112.5 118.4,104.5 116.4,97.2 114.4,90.7 112.4,85.1 110.4,80.5 108.4,77.1 106.4,75.0 104.4,74.1 102.4,74.6 100.4,76.3 98.4,79.3 96.5,83.6 94.5,88.9 92.5,95.1 90.5,102.3 88.5,110.0 86.5,118.3 84.5,126.9 82.5,135.5 80.5,144.1 78.5,152.4 76.5,160.2 74.5,167.3 72.5,173.7 70.5,179.0 68.5,183.3 66.5,186.4 64.5,188.2 62.5,188.7 60.5,187.9 58.5,185.8 56.5,182.5 54.5,178.0 52.5,172.4 50.5,165.9 48.5,158.6 46.5,150.7 44.6,142.3 42.6,133.7 40.6,125.1 38.6,116.5 36.6,108.4 34.6,100.7 32.6,93.8 30.6,87.7 28.6,82.6 26.6,78.6 24.6,75.9 22.6,74.4 20.6,74.2 18.6,75.3Z" fill="url(#eg)" fill-opacity="0.32" stroke="url(#eg)" stroke-opacity="0.16" stroke-width="0.6"/><path d="M18.6,75.3 20.6,74.2 22.6,74.4 24.6,75.9 26.6,78.6 28.6,82.6 30.6,87.7 32.6,93.8 34.6,100.7 36.6,108.4 38.6,116.5 40.6,125.1 42.6,133.7 44.6,142.3 46.5,150.7 48.5,158.6 50.5,165.9 52.5,172.4 54.5,178.0 56.5,182.5 58.5,185.8 60.5,187.9 62.5,188.7 64.5,188.2 66.5,186.4 68.5,183.3 70.5,179.0 72.5,173.7 74.5,167.3 76.5,160.2 78.5,152.4 80.5,144.1 82.5,135.5 84.5,126.9 86.5,118.3 88.5,110.0 90.5,102.3 92.5,95.1 94.5,88.9 96.5,83.6 98.4,79.3 100.4,76.3 102.4,74.6 104.4,74.1 106.4,75.0 108.4,77.1 110.4,80.5 112.4,85.1 114.4,90.7 116.4,97.2 118.4,104.5 120.4,112.5 122.4,120.9 124.4,129.5 126.4,138.1 128.4,146.6 130.4,154.8 132.4,162.4 134.4,169.3 136.4,175.4 138.4,180.4 140.4,184.3 142.4,187.0 144.4,188.5 146.4,188.6 148.4,187.4 150.3,184.9 152.3,181.2 154.3,176.4 156.3,170.5 158.3,163.8 160.3,156.3 162.3,148.2 164.3,139.8 166.3,131.1 168.3,122.5 170.3,114.0 172.3,106.0 174.3,98.5 176.3,91.8 178.3,86.0 180.3,81.3 182.3,77.7 184.3,75.3 186.3,74.2 188.3,74.4 190.3,75.9 192.3,78.7 194.3,82.7 196.3,87.8 198.3,93.9 200.3,100.9 202.2,108.5 204.2,116.7 206.2,125.2 208.2,133.9 210.2,142.5 212.2,150.9 214.2,158.8 216.2,166.1 218.2,172.5 220.2,178.1 222.2,182.6 224.2,185.9 226.2,187.9 228.2,188.7 230.2,188.1 232.2,186.3 234.2,183.2 236.2,178.9 238.2,173.5 240.2,167.2 242.2,160.0 244.2,152.2 246.2,143.9 248.2,135.4 250.2,126.7 252.2,118.1 254.1,109.9 256.1,102.1 258.1,95.0 260.1,88.7 262.1,83.5 264.1,79.3 266.1,76.3 268.1,74.6 270.1,74.1 272.1,75.0 274.1,77.2 276.1,80.6 278.1,85.2 280.1,90.8 282.1,97.4 284.1,104.7 286.1,112.7 288.1,121.0 290.1,129.7 292.1,138.3 294.1,146.8 296.1,155.0 298.1,162.6 300.1,169.5 302.1,175.5 304.1,180.5 306.0,184.4 308.0,187.1 310.0,188.5 312.0,188.6 314.0,187.4 316.0,184.9 318.0,181.2 320.0,176.3 322.0,170.4 324.0,163.6 326.0,156.1 328.0,148.0 330.0,139.6 332.0,130.9 334.0,122.3 336.0,113.9 338.0,105.8 340.0,98.4 342.0,91.7 344.0,85.9 346.0,81.2 348.0,77.6 350.0,75.2 352.0,74.2 354.0,74.4 356.0,75.9 357.9,78.8 359.9,82.8 361.9,87.9 363.9,94.0 365.9,101.0 367.9,108.7 369.9,116.9 371.9,125.4 373.9,134.1 375.9,142.7 377.9,151.0 379.9,158.9 381.9,166.2 383.9,172.7 385.9,178.2 387.9,182.6 389.9,185.9 391.9,188.0 393.9,188.7 395.9,188.1 397.9,186.3 399.9,183.1 401.9,178.8 403.9,173.4 405.9,167.1 407.9,159.9 409.8,152.1 411.8,143.8 413.8,135.2 415.8,126.5 417.8,118.0 419.8,109.7 421.8,102.0 423.8,94.9 425.8,88.6 427.8,83.4 429.8,79.2 431.8,76.2 433.8,74.5 435.8,74.1 437.8,75.0 439.8,77.2 441.8,80.7 443.8,85.3 445.8,90.9 447.8,97.5 449.8,104.9 451.8,112.8 453.8,121.2 455.8,129.8 457.8,138.5 459.8,147.0 461.7,155.1 463.7,162.7 465.7,169.6 467.7,175.6 469.7,180.6 471.7,184.5 473.7,187.1 475.7,188.5 477.7,188.6 479.7,187.3 481.7,184.8 483.7,181.1 485.7,176.2 487.7,170.3 489.7,163.5 491.7,156.0 493.7,147.9 495.7,139.4 497.7,130.8 499.7,122.1 501.7,113.7 503.7,105.7 505.7,98.2 507.7,91.6 509.7,85.8 511.7,81.1 513.6,77.5 515.6,75.2 517.6,74.2 519.6,74.4 521.6,76.0 523.6,78.8 525.6,82.9 527.6,88.0 529.6,94.2 531.6,101.2 533.6,108.9 535.6,117.1 537.6,125.6 539.6,134.3 541.6,142.9 543.6,151.2 545.6,159.1 547.6,166.3 549.6,172.8 551.6,178.3 553.6,182.7 555.6,186.0 557.6,188.0 559.6,188.7 561.6,188.1 563.6,186.2 565.5,183.1 567.5,178.7 569.5,173.3 571.5,166.9 573.5,159.7 575.5,151.9 577.5,143.6 579.5,135.0 581.5,126.3 583.5,117.8 585.5,109.5 587.5,101.8 589.5,94.7 591.5,88.5 593.5,83.3 595.5,79.1 597.5,76.2 599.5,74.5 601.5,74.1 603.5,75.1 605.5,77.3 607.5,80.7 609.5,85.4 611.5,91.0 613.5,97.6 615.5,105.0 617.4,113.0 619.4,121.4 621.4,130.0 623.4,138.7 625.4,147.2 627.4,155.3 629.4,162.9 631.4,169.7 633.4,175.7 635.4,180.7 637.4,184.5 639.4,187.2 641.4,188.5 643.4,188.6 L643.4,178.7 641.4,183.1 639.4,186.3 637.4,188.2 635.4,188.7 633.4,187.8 631.4,185.6 629.4,182.1 627.4,177.4 625.4,171.6 623.4,164.8 621.4,157.2 619.4,149.0 617.4,140.4 615.5,131.5 613.5,122.7 611.5,114.1 609.5,105.9 607.5,98.3 605.5,91.5 603.5,85.6 601.5,80.8 599.5,77.3 597.5,75.0 595.5,74.1 593.5,74.6 591.5,76.4 589.5,79.5 587.5,83.9 585.5,89.4 583.5,95.9 581.5,103.3 579.5,111.3 577.5,119.9 575.5,128.7 573.5,137.5 571.5,146.2 569.5,154.6 567.5,162.4 565.5,169.4 563.6,175.6 561.6,180.7 559.6,184.6 557.6,187.2 555.6,188.6 553.6,188.5 551.6,187.1 549.6,184.3 547.6,180.3 545.6,175.1 543.6,168.9 541.6,161.7 539.6,153.9 537.6,145.5 535.6,136.7 533.6,127.9 531.6,119.1 529.6,110.6 527.6,102.6 525.6,95.3 523.6,88.9 521.6,83.5 519.6,79.2 517.6,76.2 515.6,74.5 513.6,74.1 511.7,75.2 509.7,77.5 507.7,81.2 505.7,86.1 503.7,92.0 501.7,98.9 499.7,106.6 497.7,114.8 495.7,123.5 493.7,132.3 491.7,141.1 489.7,149.7 487.7,157.9 485.7,165.4 483.7,172.1 481.7,177.8 479.7,182.5 477.7,185.9 475.7,188.0 473.7,188.7 471.7,188.1 469.7,186.1 467.7,182.8 465.7,178.3 463.7,172.6 461.7,166.0 459.8,158.6 457.8,150.4 455.8,141.9 453.8,133.1 451.8,124.2 449.8,115.5 447.8,107.2 445.8,99.5 443.8,92.6 441.8,86.5 439.8,81.6 437.8,77.8 435.8,75.3 433.8,74.2 431.8,74.4 429.8,76.0 427.8,78.9 425.8,83.1 423.8,88.4 421.8,94.8 419.8,102.0 417.8,109.9 415.8,118.4 413.8,127.1 411.8,136.0 409.8,144.7 407.9,153.2 405.9,161.1 403.9,168.3 401.9,174.6 399.9,179.9 397.9,184.0 395.9,186.9 393.9,188.4 391.9,188.6 389.9,187.4 387.9,184.9 385.9,181.1 383.9,176.1 381.9,170.0 379.9,163.0 377.9,155.3 375.9,146.9 373.9,138.3 371.9,129.4 369.9,120.6 367.9,112.1 365.9,104.0 363.9,96.5 361.9,89.9 359.9,84.3 357.9,79.9 356.0,76.6 354.0,74.7 352.0,74.1 350.0,74.9 348.0,77.0 346.0,80.5 344.0,85.1 342.0,90.9 340.0,97.7 338.0,105.2 336.0,113.4 334.0,122.0 332.0,130.8 330.0,139.6 328.0,148.3 326.0,156.5 324.0,164.2 322.0,171.0 320.0,176.9 318.0,181.7 316.0,185.4 314.0,187.7 312.0,188.7 310.0,188.3 308.0,186.5 306.0,183.5 304.1,179.1 302.1,173.7 300.1,167.2 298.1,159.9 296.1,151.9 294.1,143.4 292.1,134.6 290.1,125.7 288.1,117.0 286.1,108.6 284.1,100.8 282.1,93.7 280.1,87.5 278.1,82.3 276.1,78.4 274.1,75.7 272.1,74.3 270.1,74.3 268.1,75.6 266.1,78.3 264.1,82.3 262.1,87.4 260.1,93.6 258.1,100.7 256.1,108.5 254.1,116.9 252.2,125.6 250.2,134.5 248.2,143.3 246.2,151.8 244.2,159.8 242.2,167.1 240.2,173.6 238.2,179.1 236.2,183.4 234.2,186.5 232.2,188.3 230.2,188.7 228.2,187.7 226.2,185.4 224.2,181.8 222.2,177.0 220.2,171.1 218.2,164.3 216.2,156.6 214.2,148.4 212.2,139.8 210.2,130.9 208.2,122.1 206.2,113.5 204.2,105.3 202.2,97.8 200.3,91.0 198.3,85.2 196.3,80.5 194.3,77.1 192.3,74.9 190.3,74.1 188.3,74.7 186.3,76.6 184.3,79.8 182.3,84.3 180.3,89.8 178.3,96.4 176.3,103.8 174.3,111.9 172.3,120.5 170.3,129.3 168.3,138.1 166.3,146.8 164.3,155.1 162.3,162.9 160.3,169.9 158.3,176.0 156.3,181.0 154.3,184.8 152.3,187.4 150.3,188.6 148.4,188.4 146.4,186.9 144.4,184.1 142.4,180.0 140.4,174.7 138.4,168.4 136.4,161.2 134.4,153.3 132.4,144.9 130.4,136.1 128.4,127.3 126.4,118.5 124.4,110.0 122.4,102.1 120.4,94.9 118.4,88.5 116.4,83.1 114.4,79.0 112.4,76.0 110.4,74.4 108.4,74.2 106.4,75.3 104.4,77.8 102.4,81.5 100.4,86.4 98.4,92.5 96.5,99.4 94.5,107.1 92.5,115.4 90.5,124.1 88.5,132.9 86.5,141.8 84.5,150.3 82.5,158.4 80.5,165.9 78.5,172.5 76.5,178.2 74.5,182.7 72.5,186.0 70.5,188.1 68.5,188.7 66.5,188.0 64.5,185.9 62.5,182.5 60.5,177.9 58.5,172.2 56.5,165.5 54.5,158.0 52.5,149.9 50.5,141.3 48.5,132.5 46.5,123.6 44.6,115.0 42.6,106.7 40.6,99.0 38.6,92.1 36.6,86.1 34.6,81.3 32.6,77.6 30.6,75.2 28.6,74.1 26.6,74.5 24.6,76.2 22.6,79.2 20.6,83.4 18.6,88.8Z" fill="url(#eg)" fill-opacity="0.18" stroke="url(#eg)" stroke-opacity="0.09" stroke-width="0.6"/><path d="M18.6,162.1 20.6,170.1 22.6,177.0 24.6,182.4 26.6,186.2 28.6,188.3 30.6,188.6 32.6,187.2 34.6,184.0 36.6,179.2 38.6,172.9 40.6,165.3 42.6,156.6 44.6,147.2 46.5,137.3 48.5,127.2 50.5,117.2 52.5,107.7 54.5,98.9 56.5,91.1 58.5,84.6 60.5,79.5 62.5,76.0 64.5,74.3 66.5,74.3 68.5,76.2 70.5,79.7 72.5,84.9 74.5,91.5 76.5,99.3 78.5,108.2 80.5,117.7 82.5,127.7 84.5,137.8 86.5,147.7 88.5,157.1 90.5,165.7 92.5,173.2 94.5,179.5 96.5,184.2 98.4,187.3 100.4,188.6 102.4,188.2 104.4,186.0 106.4,182.1 108.4,176.6 110.4,169.7 112.4,161.7 114.4,152.6 116.4,143.0 118.4,132.9 120.4,122.8 122.4,113.0 124.4,103.7 126.4,95.4 128.4,88.1 130.4,82.2 132.4,77.8 134.4,75.1 136.4,74.1 138.4,74.9 140.4,77.5 142.4,81.8 144.4,87.5 146.4,94.7 148.4,103.0 150.3,112.2 152.3,122.0 154.3,132.1 156.3,142.1 158.3,151.9 160.3,160.9 162.3,169.1 164.3,176.1 166.3,181.7 168.3,185.7 170.3,188.1 172.3,188.7 174.3,187.5 176.3,184.5 178.3,179.9 180.3,173.8 182.3,166.4 184.3,157.9 186.3,148.5 188.3,138.6 190.3,128.5 192.3,118.5 194.3,108.9 196.3,100.0 198.3,92.1 200.3,85.4 202.2,80.1 204.2,76.4 206.2,74.4 208.2,74.2 210.2,75.8 212.2,79.1 214.2,84.1 216.2,90.5 218.2,98.2 220.2,106.9 222.2,116.4 224.2,126.3 226.2,136.4 228.2,146.4 230.2,155.9 232.2,164.6 234.2,172.3 236.2,178.7 238.2,183.7 240.2,187.0 242.2,188.6 244.2,188.4 246.2,186.4 248.2,182.7 250.2,177.5 252.2,170.8 254.1,162.8 256.1,153.9 258.1,144.3 260.1,134.3 262.1,124.2 264.1,114.3 266.1,105.0 268.1,96.4 270.1,89.0 272.1,82.9 274.1,78.3 276.1,75.3 278.1,74.1 280.1,74.7 282.1,77.0 284.1,81.1 286.1,86.7 288.1,93.7 290.1,101.8 292.1,110.9 294.1,120.6 296.1,130.7 298.1,140.8 300.1,150.6 302.1,159.8 304.1,168.1 306.0,175.2 308.0,181.0 310.0,185.3 312.0,187.9 314.0,188.7 316.0,187.7 318.0,185.0 320.0,180.6 322.0,174.7 324.0,167.5 326.0,159.1 328.0,149.8 330.0,140.0 332.0,129.9 334.0,119.9 336.0,110.2 338.0,101.2 340.0,93.1 342.0,86.2 344.0,80.7 346.0,76.8 348.0,74.6 350.0,74.2 352.0,75.5 354.0,78.6 356.0,83.3 357.9,89.5 359.9,97.1 361.9,105.7 363.9,115.1 365.9,125.0 367.9,135.1 369.9,145.1 371.9,154.6 373.9,163.5 375.9,171.3 377.9,177.9 379.9,183.1 381.9,186.6 383.9,188.4 385.9,188.5 387.9,186.8 389.9,183.3 391.9,178.3 393.9,171.7 395.9,164.0 397.9,155.2 399.9,145.6 401.9,135.7 403.9,125.6 405.9,115.6 407.9,106.2 409.8,97.5 411.8,89.9 413.8,83.6 415.8,78.8 417.8,75.6 419.8,74.2 421.8,74.5 423.8,76.6 425.8,80.4 427.8,85.8 429.8,92.6 431.8,100.7 433.8,109.6 435.8,119.3 437.8,129.3 439.8,139.4 441.8,149.3 443.8,158.5 445.8,167.0 447.8,174.3 449.8,180.3 451.8,184.8 453.8,187.6 455.8,188.7 457.8,188.0 459.8,185.5 461.7,181.3 463.7,175.6 465.7,168.5 467.7,160.3 469.7,151.1 471.7,141.4 473.7,131.3 475.7,121.2 477.7,111.5 479.7,102.3 481.7,94.1 483.7,87.1 485.7,81.4 487.7,77.2 489.7,74.8 491.7,74.1 493.7,75.2 495.7,78.1 497.7,82.6 499.7,88.6 501.7,96.0 503.7,104.4 505.7,113.7 507.7,123.6 509.7,133.7 511.7,143.7 513.6,153.4 515.6,162.3 517.6,170.3 519.6,177.1 521.6,182.5 523.6,186.2 525.6,188.3 527.6,188.6 529.6,187.1 531.6,183.9 533.6,179.0 535.6,172.7 537.6,165.1 539.6,156.4 541.6,147.0 543.6,137.0 545.6,126.9 547.6,117.0 549.6,107.4 551.6,98.7 553.6,90.9 555.6,84.4 557.6,79.4 559.6,76.0 561.6,74.3 563.6,74.4 565.5,76.2 567.5,79.8 569.5,85.0 571.5,91.6 573.5,99.5 575.5,108.4 577.5,117.9 579.5,127.9 581.5,138.0 583.5,147.9 585.5,157.3 587.5,165.9 589.5,173.4 591.5,179.6 593.5,184.3 595.5,187.3 597.5,188.7 599.5,188.2 601.5,185.9 603.5,182.0 605.5,176.5 607.5,169.6 609.5,161.5 611.5,152.4 613.5,142.7 615.5,132.7 617.4,122.6 619.4,112.8 621.4,103.5 623.4,95.2 625.4,87.9 627.4,82.1 629.4,77.7 631.4,75.0 633.4,74.1 635.4,75.0 637.4,77.6 639.4,81.9 641.4,87.7 643.4,94.9 L643.4,92.7 641.4,85.9 639.4,80.5 637.4,76.7 635.4,74.5 633.4,74.2 631.4,75.6 629.4,78.7 627.4,83.5 625.4,89.8 623.4,97.3 621.4,105.9 619.4,115.3 617.4,125.2 615.5,135.3 613.5,145.3 611.5,154.8 609.5,163.6 607.5,171.4 605.5,178.0 603.5,183.1 601.5,186.6 599.5,188.5 597.5,188.5 595.5,186.8 593.5,183.3 591.5,178.3 589.5,171.7 587.5,164.0 585.5,155.2 583.5,145.7 581.5,135.7 579.5,125.6 577.5,115.7 575.5,106.3 573.5,97.7 571.5,90.1 569.5,83.7 567.5,78.9 565.5,75.7 563.6,74.2 561.6,74.5 559.6,76.5 557.6,80.3 555.6,85.6 553.6,92.4 551.6,100.4 549.6,109.3 547.6,118.9 545.6,128.9 543.6,139.0 541.6,148.8 539.6,158.1 537.6,166.6 535.6,174.0 533.6,180.1 531.6,184.6 529.6,187.5 527.6,188.7 525.6,188.1 523.6,185.7 521.6,181.6 519.6,176.0 517.6,169.0 515.6,160.9 513.6,151.8 511.7,142.1 509.7,132.0 507.7,122.0 505.7,112.2 503.7,103.0 501.7,94.7 499.7,87.6 497.7,81.8 495.7,77.5 493.7,74.9 491.7,74.1 489.7,75.0 487.7,77.7 485.7,82.1 483.7,88.0 481.7,95.2 479.7,103.5 477.7,112.8 475.7,122.6 473.7,132.6 471.7,142.6 469.7,152.3 467.7,161.4 465.7,169.5 463.7,176.4 461.7,181.9 459.8,185.9 457.8,188.1 455.8,188.7 453.8,187.4 451.8,184.4 449.8,179.8 447.8,173.6 445.8,166.2 443.8,157.6 441.8,148.3 439.8,138.4 437.8,128.3 435.8,118.3 433.8,108.8 431.8,99.9 429.8,92.0 427.8,85.3 425.8,80.0 423.8,76.4 421.8,74.4 419.8,74.2 417.8,75.8 415.8,79.1 413.8,84.1 411.8,90.5 409.8,98.1 407.9,106.8 405.9,116.3 403.9,126.2 401.9,136.3 399.9,146.3 397.9,155.7 395.9,164.5 393.9,172.2 391.9,178.6 389.9,183.6 387.9,186.9 385.9,188.5 383.9,188.4 381.9,186.5 379.9,182.9 377.9,177.7 375.9,171.0 373.9,163.1 371.9,154.3 369.9,144.7 367.9,134.7 365.9,124.6 363.9,114.8 361.9,105.4 359.9,96.8 357.9,89.4 356.0,83.2 354.0,78.5 352.0,75.5 350.0,74.2 348.0,74.6 346.0,76.8 344.0,80.8 342.0,86.3 340.0,93.1 338.0,101.2 336.0,110.2 334.0,119.9 332.0,129.9 330.0,140.0 328.0,149.8 326.0,159.0 324.0,167.4 322.0,174.7 320.0,180.6 318.0,185.0 316.0,187.7 314.0,188.7 312.0,187.9 310.0,185.4 308.0,181.1 306.0,175.4 304.1,168.3 302.1,160.0 300.1,150.8 298.1,141.1 296.1,131.0 294.1,121.0 292.1,111.2 290.1,102.1 288.1,94.0 286.1,86.9 284.1,81.3 282.1,77.2 280.1,74.8 278.1,74.1 276.1,75.2 274.1,78.1 272.1,82.6 270.1,88.6 268.1,96.0 266.1,104.4 264.1,113.7 262.1,123.6 260.1,133.6 258.1,143.6 256.1,153.3 254.1,162.2 252.2,170.2 250.2,177.0 248.2,182.4 246.2,186.2 244.2,188.3 242.2,188.6 240.2,187.2 238.2,184.0 236.2,179.2 234.2,172.9 232.2,165.3 230.2,156.7 228.2,147.3 226.2,137.4 224.2,127.3 222.2,117.3 220.2,107.8 218.2,99.0 216.2,91.2 214.2,84.7 212.2,79.6 210.2,76.1 208.2,74.3 206.2,74.3 204.2,76.1 202.2,79.6 200.3,84.7 198.3,91.2 196.3,99.0 194.3,107.8 192.3,117.3 190.3,127.2 188.3,137.3 186.3,147.2 184.3,156.7 182.3,165.3 180.3,172.9 178.3,179.2 176.3,184.0 174.3,187.2 172.3,188.6 170.3,188.3 168.3,186.2 166.3,182.4 164.3,177.1 162.3,170.3 160.3,162.3 158.3,153.3 156.3,143.7 154.3,133.7 152.3,123.6 150.3,113.8 148.4,104.5 146.4,96.0 144.4,88.7 142.4,82.6 140.4,78.1 138.4,75.2 136.4,74.1 134.4,74.8 132.4,77.2 130.4,81.3 128.4,86.9 126.4,93.9 124.4,102.1 122.4,111.2 120.4,120.9 118.4,131.0 116.4,141.0 114.4,150.8 112.4,159.9 110.4,168.2 108.4,175.3 106.4,181.1 104.4,185.3 102.4,187.9 100.4,188.7 98.4,187.7 96.5,185.0 94.5,180.6 92.5,174.7 90.5,167.5 88.5,159.1 86.5,149.9 84.5,140.1 82.5,130.0 80.5,120.0 78.5,110.3 76.5,101.3 74.5,93.2 72.5,86.3 70.5,80.8 68.5,76.9 66.5,74.6 64.5,74.1 62.5,75.4 60.5,78.5 58.5,83.2 56.5,89.3 54.5,96.8 52.5,105.3 50.5,114.7 48.5,124.6 46.5,134.7 44.6,144.6 42.6,154.2 40.6,163.1 38.6,171.0 36.6,177.6 34.6,182.8 32.6,186.5 30.6,188.4 28.6,188.5 26.6,186.9 24.6,183.6 22.6,178.6 20.6,172.2 18.6,164.5Z" fill="url(#eg)" fill-opacity="0.95" stroke="url(#eg)" stroke-opacity="0.47" stroke-width="0.6"/><path d="M18.6,164.5 20.6,172.2 22.6,178.6 24.6,183.6 26.6,186.9 28.6,188.5 30.6,188.4 32.6,186.5 34.6,182.8 36.6,177.6 38.6,171.0 40.6,163.1 42.6,154.2 44.6,144.6 46.5,134.7 48.5,124.6 50.5,114.7 52.5,105.3 54.5,96.8 56.5,89.3 58.5,83.2 60.5,78.5 62.5,75.4 64.5,74.1 66.5,74.6 68.5,76.9 70.5,80.8 72.5,86.3 74.5,93.2 76.5,101.3 78.5,110.3 80.5,120.0 82.5,130.0 84.5,140.1 86.5,149.9 88.5,159.1 90.5,167.5 92.5,174.7 94.5,180.6 96.5,185.0 98.4,187.7 100.4,188.7 102.4,187.9 104.4,185.3 106.4,181.1 108.4,175.3 110.4,168.2 112.4,159.9 114.4,150.8 116.4,141.0 118.4,131.0 120.4,120.9 122.4,111.2 124.4,102.1 126.4,93.9 128.4,86.9 130.4,81.3 132.4,77.2 134.4,74.8 136.4,74.1 138.4,75.2 140.4,78.1 142.4,82.6 144.4,88.7 146.4,96.0 148.4,104.5 150.3,113.8 152.3,123.6 154.3,133.7 156.3,143.7 158.3,153.3 160.3,162.3 162.3,170.3 164.3,177.1 166.3,182.4 168.3,186.2 170.3,188.3 172.3,188.6 174.3,187.2 176.3,184.0 178.3,179.2 180.3,172.9 182.3,165.3 184.3,156.7 186.3,147.2 188.3,137.3 190.3,127.2 192.3,117.3 194.3,107.8 196.3,99.0 198.3,91.2 200.3,84.7 202.2,79.6 204.2,76.1 206.2,74.3 208.2,74.3 210.2,76.1 212.2,79.6 214.2,84.7 216.2,91.2 218.2,99.0 220.2,107.8 222.2,117.3 224.2,127.3 226.2,137.4 228.2,147.3 230.2,156.7 232.2,165.3 234.2,172.9 236.2,179.2 238.2,184.0 240.2,187.2 242.2,188.6 244.2,188.3 246.2,186.2 248.2,182.4 250.2,177.0 252.2,170.2 254.1,162.2 256.1,153.3 258.1,143.6 260.1,133.6 262.1,123.6 264.1,113.7 266.1,104.4 268.1,96.0 270.1,88.6 272.1,82.6 274.1,78.1 276.1,75.2 278.1,74.1 280.1,74.8 282.1,77.2 284.1,81.3 286.1,86.9 288.1,94.0 290.1,102.1 292.1,111.2 294.1,121.0 296.1,131.0 298.1,141.1 300.1,150.8 302.1,160.0 304.1,168.3 306.0,175.4 308.0,181.1 310.0,185.4 312.0,187.9 314.0,188.7 316.0,187.7 318.0,185.0 320.0,180.6 322.0,174.7 324.0,167.4 326.0,159.0 328.0,149.8 330.0,140.0 332.0,129.9 334.0,119.9 336.0,110.2 338.0,101.2 340.0,93.1 342.0,86.3 344.0,80.8 346.0,76.8 348.0,74.6 350.0,74.2 352.0,75.5 354.0,78.5 356.0,83.2 357.9,89.4 359.9,96.8 361.9,105.4 363.9,114.8 365.9,124.6 367.9,134.7 369.9,144.7 371.9,154.3 373.9,163.1 375.9,171.0 377.9,177.7 379.9,182.9 381.9,186.5 383.9,188.4 385.9,188.5 387.9,186.9 389.9,183.6 391.9,178.6 393.9,172.2 395.9,164.5 397.9,155.7 399.9,146.3 401.9,136.3 403.9,126.2 405.9,116.3 407.9,106.8 409.8,98.1 411.8,90.5 413.8,84.1 415.8,79.1 417.8,75.8 419.8,74.2 421.8,74.4 423.8,76.4 425.8,80.0 427.8,85.3 429.8,92.0 431.8,99.9 433.8,108.8 435.8,118.3 437.8,128.3 439.8,138.4 441.8,148.3 443.8,157.6 445.8,166.2 447.8,173.6 449.8,179.8 451.8,184.4 453.8,187.4 455.8,188.7 457.8,188.1 459.8,185.9 461.7,181.9 463.7,176.4 465.7,169.5 467.7,161.4 469.7,152.3 471.7,142.6 473.7,132.6 475.7,122.6 477.7,112.8 479.7,103.5 481.7,95.2 483.7,88.0 485.7,82.1 487.7,77.7 489.7,75.0 491.7,74.1 493.7,74.9 495.7,77.5 497.7,81.8 499.7,87.6 501.7,94.7 503.7,103.0 505.7,112.2 507.7,122.0 509.7,132.0 511.7,142.1 513.6,151.8 515.6,160.9 517.6,169.0 519.6,176.0 521.6,181.6 523.6,185.7 525.6,188.1 527.6,188.7 529.6,187.5 531.6,184.6 533.6,180.1 535.6,174.0 537.6,166.6 539.6,158.1 541.6,148.8 543.6,139.0 545.6,128.9 547.6,118.9 549.6,109.3 551.6,100.4 553.6,92.4 555.6,85.6 557.6,80.3 559.6,76.5 561.6,74.5 563.6,74.2 565.5,75.7 567.5,78.9 569.5,83.7 571.5,90.1 573.5,97.7 575.5,106.3 577.5,115.7 579.5,125.6 581.5,135.7 583.5,145.7 585.5,155.2 587.5,164.0 589.5,171.7 591.5,178.3 593.5,183.3 595.5,186.8 597.5,188.5 599.5,188.5 601.5,186.6 603.5,183.1 605.5,178.0 607.5,171.4 609.5,163.6 611.5,154.8 613.5,145.3 615.5,135.3 617.4,125.2 619.4,115.3 621.4,105.9 623.4,97.3 625.4,89.8 627.4,83.5 629.4,78.7 631.4,75.6 633.4,74.2 635.4,74.5 637.4,76.7 639.4,80.5 641.4,85.9 643.4,92.7 L643.4,87.7 641.4,81.9 639.4,77.6 637.4,75.0 635.4,74.1 633.4,75.0 631.4,77.6 629.4,81.8 627.4,87.6 625.4,94.7 623.4,103.0 621.4,112.1 619.4,121.8 617.4,131.8 615.5,141.8 613.5,151.5 611.5,160.6 609.5,168.7 607.5,175.7 605.5,181.4 603.5,185.5 601.5,188.0 599.5,188.7 597.5,187.7 595.5,184.9 593.5,180.5 591.5,174.5 589.5,167.3 587.5,158.9 585.5,149.7 583.5,140.0 581.5,130.0 579.5,120.0 577.5,110.3 575.5,101.4 573.5,93.3 571.5,86.4 569.5,80.9 567.5,77.0 565.5,74.7 563.6,74.1 561.6,75.4 559.6,78.3 557.6,82.9 555.6,88.9 553.6,96.3 551.6,104.8 549.6,114.0 547.6,123.8 545.6,133.9 543.6,143.8 541.6,153.4 539.6,162.3 537.6,170.3 535.6,177.0 533.6,182.4 531.6,186.2 529.6,188.3 527.6,188.6 525.6,187.2 523.6,184.1 521.6,179.4 519.6,173.2 517.6,165.7 515.6,157.1 513.6,147.8 511.7,138.0 509.7,127.9 507.7,118.0 505.7,108.5 503.7,99.6 501.7,91.8 499.7,85.2 497.7,80.0 495.7,76.3 493.7,74.4 491.7,74.2 489.7,75.8 487.7,79.1 485.7,84.0 483.7,90.3 481.7,98.0 479.7,106.6 477.7,116.0 475.7,125.9 473.7,135.9 471.7,145.8 469.7,155.3 467.7,164.0 465.7,171.7 463.7,178.2 461.7,183.3 459.8,186.7 457.8,188.5 455.8,188.5 453.8,186.7 451.8,183.3 449.8,178.2 447.8,171.7 445.8,164.0 443.8,155.3 441.8,145.8 439.8,135.9 437.8,125.9 435.8,116.0 433.8,106.6 431.8,98.0 429.8,90.3 427.8,84.0 425.8,79.1 423.8,75.8 421.8,74.2 419.8,74.4 417.8,76.4 415.8,80.0 413.8,85.2 411.8,91.8 409.8,99.6 407.9,108.5 405.9,118.0 403.9,127.9 401.9,138.0 399.9,147.8 397.9,157.1 395.9,165.7 393.9,173.2 391.9,179.4 389.9,184.1 387.9,187.2 385.9,188.6 383.9,188.3 381.9,186.2 379.9,182.4 377.9,177.0 375.9,170.3 373.9,162.3 371.9,153.4 369.9,143.8 367.9,133.9 365.9,123.8 363.9,114.0 361.9,104.8 359.9,96.3 357.9,88.9 356.0,82.9 354.0,78.3 352.0,75.4 350.0,74.1 348.0,74.7 346.0,77.0 344.0,80.9 342.0,86.4 340.0,93.3 338.0,101.4 336.0,110.4 334.0,120.0 332.0,130.0 330.0,140.0 328.0,149.8 326.0,158.9 324.0,167.3 322.0,174.5 320.0,180.5 318.0,184.9 316.0,187.7 314.0,188.7 312.0,188.0 310.0,185.5 308.0,181.4 306.0,175.7 304.1,168.7 302.1,160.6 300.1,151.5 298.1,141.8 296.1,131.8 294.1,121.8 292.1,112.1 290.1,103.0 288.1,94.7 286.1,87.6 284.1,81.8 282.1,77.6 280.1,75.0 278.1,74.1 276.1,75.0 274.1,77.6 272.1,81.9 270.1,87.7 268.1,94.9 266.1,103.1 264.1,112.3 262.1,122.0 260.1,132.0 258.1,142.0 256.1,151.7 254.1,160.7 252.2,168.9 250.2,175.9 248.2,181.5 246.2,185.6 244.2,188.0 242.2,188.7 240.2,187.6 238.2,184.8 236.2,180.4 234.2,174.4 232.2,167.1 230.2,158.8 228.2,149.6 226.2,139.8 224.2,129.8 222.2,119.8 220.2,110.2 218.2,101.2 216.2,93.2 214.2,86.3 212.2,80.8 210.2,76.9 208.2,74.6 206.2,74.1 204.2,75.4 202.2,78.4 200.3,83.0 198.3,89.1 196.3,96.5 194.3,104.9 192.3,114.2 190.3,124.0 188.3,134.1 186.3,144.0 184.3,153.6 182.3,162.5 180.3,170.4 178.3,177.1 176.3,182.5 174.3,186.2 172.3,188.3 170.3,188.6 168.3,187.2 166.3,184.0 164.3,179.3 162.3,173.0 160.3,165.5 158.3,156.9 156.3,147.6 154.3,137.7 152.3,127.7 150.3,117.8 148.4,108.3 146.4,99.5 144.4,91.7 142.4,85.1 140.4,79.9 138.4,76.3 136.4,74.4 134.4,74.3 132.4,75.9 130.4,79.2 128.4,84.1 126.4,90.5 124.4,98.1 122.4,106.8 120.4,116.2 118.4,126.1 116.4,136.1 114.4,146.0 112.4,155.5 110.4,164.2 108.4,171.9 106.4,178.3 104.4,183.4 102.4,186.8 100.4,188.5 98.4,188.5 96.5,186.7 94.5,183.2 92.5,178.1 90.5,171.6 88.5,163.8 86.5,155.1 84.5,145.6 82.5,135.7 80.5,125.7 78.5,115.8 76.5,106.4 74.5,97.8 72.5,90.2 70.5,83.9 68.5,79.0 66.5,75.8 64.5,74.2 62.5,74.4 60.5,76.4 58.5,80.1 56.5,85.3 54.5,91.9 52.5,99.8 50.5,108.6 48.5,118.2 46.5,128.1 44.6,138.2 42.6,148.0 40.6,157.3 38.6,165.8 36.6,173.3 34.6,179.5 32.6,184.2 30.6,187.3 28.6,188.6 26.6,188.2 24.6,186.1 22.6,182.3 20.6,176.9 18.6,170.1Z" fill="url(#eg)" fill-opacity="0.75" stroke="url(#eg)" stroke-opacity="0.38" stroke-width="0.6"/><path d="M18.6,170.1 20.6,176.9 22.6,182.3 24.6,186.1 26.6,188.2 28.6,188.6 30.6,187.3 32.6,184.2 34.6,179.5 36.6,173.3 38.6,165.8 40.6,157.3 42.6,148.0 44.6,138.2 46.5,128.1 48.5,118.2 50.5,108.6 52.5,99.8 54.5,91.9 56.5,85.3 58.5,80.1 60.5,76.4 62.5,74.4 64.5,74.2 66.5,75.8 68.5,79.0 70.5,83.9 72.5,90.2 74.5,97.8 76.5,106.4 78.5,115.8 80.5,125.7 82.5,135.7 84.5,145.6 86.5,155.1 88.5,163.8 90.5,171.6 92.5,178.1 94.5,183.2 96.5,186.7 98.4,188.5 100.4,188.5 102.4,186.8 104.4,183.4 106.4,178.3 108.4,171.9 110.4,164.2 112.4,155.5 114.4,146.0 116.4,136.1 118.4,126.1 120.4,116.2 122.4,106.8 124.4,98.1 126.4,90.5 128.4,84.1 130.4,79.2 132.4,75.9 134.4,74.3 136.4,74.4 138.4,76.3 140.4,79.9 142.4,85.1 144.4,91.7 146.4,99.5 148.4,108.3 150.3,117.8 152.3,127.7 154.3,137.7 156.3,147.6 158.3,156.9 160.3,165.5 162.3,173.0 164.3,179.3 166.3,184.0 168.3,187.2 170.3,188.6 172.3,188.3 174.3,186.2 176.3,182.5 178.3,177.1 180.3,170.4 182.3,162.5 184.3,153.6 186.3,144.0 188.3,134.1 190.3,124.0 192.3,114.2 194.3,104.9 196.3,96.5 198.3,89.1 200.3,83.0 202.2,78.4 204.2,75.4 206.2,74.1 208.2,74.6 210.2,76.9 212.2,80.8 214.2,86.3 216.2,93.2 218.2,101.2 220.2,110.2 222.2,119.8 224.2,129.8 226.2,139.8 228.2,149.6 230.2,158.8 232.2,167.1 234.2,174.4 236.2,180.4 238.2,184.8 240.2,187.6 242.2,188.7 244.2,188.0 246.2,185.6 248.2,181.5 250.2,175.9 252.2,168.9 254.1,160.7 256.1,151.7 258.1,142.0 260.1,132.0 262.1,122.0 264.1,112.3 266.1,103.1 268.1,94.9 270.1,87.7 272.1,81.9 274.1,77.6 276.1,75.0 278.1,74.1 280.1,75.0 282.1,77.6 284.1,81.8 286.1,87.6 288.1,94.7 290.1,103.0 292.1,112.1 294.1,121.8 296.1,131.8 298.1,141.8 300.1,151.5 302.1,160.6 304.1,168.7 306.0,175.7 308.0,181.4 310.0,185.5 312.0,188.0 314.0,188.7 316.0,187.7 318.0,184.9 320.0,180.5 322.0,174.5 324.0,167.3 326.0,158.9 328.0,149.8 330.0,140.0 332.0,130.0 334.0,120.0 336.0,110.4 338.0,101.4 340.0,93.3 342.0,86.4 344.0,80.9 346.0,77.0 348.0,74.7 350.0,74.1 352.0,75.4 354.0,78.3 356.0,82.9 357.9,88.9 359.9,96.3 361.9,104.8 363.9,114.0 365.9,123.8 367.9,133.9 369.9,143.8 371.9,153.4 373.9,162.3 375.9,170.3 377.9,177.0 379.9,182.4 381.9,186.2 383.9,188.3 385.9,188.6 387.9,187.2 389.9,184.1 391.9,179.4 393.9,173.2 395.9,165.7 397.9,157.1 399.9,147.8 401.9,138.0 403.9,127.9 405.9,118.0 407.9,108.5 409.8,99.6 411.8,91.8 413.8,85.2 415.8,80.0 417.8,76.4 419.8,74.4 421.8,74.2 423.8,75.8 425.8,79.1 427.8,84.0 429.8,90.3 431.8,98.0 433.8,106.6 435.8,116.0 437.8,125.9 439.8,135.9 441.8,145.8 443.8,155.3 445.8,164.0 447.8,171.7 449.8,178.2 451.8,183.3 453.8,186.7 455.8,188.5 457.8,188.5 459.8,186.7 461.7,183.3 463.7,178.2 465.7,171.7 467.7,164.0 469.7,155.3 471.7,145.8 473.7,135.9 475.7,125.9 477.7,116.0 479.7,106.6 481.7,98.0 483.7,90.3 485.7,84.0 487.7,79.1 489.7,75.8 491.7,74.2 493.7,74.4 495.7,76.3 497.7,80.0 499.7,85.2 501.7,91.8 503.7,99.6 505.7,108.5 507.7,118.0 509.7,127.9 511.7,138.0 513.6,147.8 515.6,157.1 517.6,165.7 519.6,173.2 521.6,179.4 523.6,184.1 525.6,187.2 527.6,188.6 529.6,188.3 531.6,186.2 533.6,182.4 535.6,177.0 537.6,170.3 539.6,162.3 541.6,153.4 543.6,143.8 545.6,133.9 547.6,123.8 549.6,114.0 551.6,104.8 553.6,96.3 555.6,88.9 557.6,82.9 559.6,78.3 561.6,75.4 563.6,74.1 565.5,74.7 567.5,77.0 569.5,80.9 571.5,86.4 573.5,93.3 575.5,101.4 577.5,110.3 579.5,120.0 581.5,130.0 583.5,140.0 585.5,149.7 587.5,158.9 589.5,167.3 591.5,174.5 593.5,180.5 595.5,184.9 597.5,187.7 599.5,188.7 601.5,188.0 603.5,185.5 605.5,181.4 607.5,175.7 609.5,168.7 611.5,160.6 613.5,151.5 615.5,141.8 617.4,131.8 619.4,121.8 621.4,112.1 623.4,103.0 625.4,94.7 627.4,87.6 629.4,81.8 631.4,77.6 633.4,75.0 635.4,74.1 637.4,75.0 639.4,77.6 641.4,81.9 643.4,87.7 L643.4,81.2 641.4,77.2 639.4,74.8 637.4,74.1 635.4,75.2 633.4,78.0 631.4,82.3 629.4,88.2 627.4,95.4 625.4,103.7 623.4,112.8 621.4,122.5 619.4,132.4 617.4,142.3 615.5,151.9 613.5,160.9 611.5,168.9 609.5,175.9 607.5,181.5 605.5,185.5 603.5,188.0 601.5,188.7 599.5,187.7 597.5,185.0 595.5,180.6 593.5,174.8 591.5,167.6 589.5,159.4 587.5,150.3 585.5,140.6 583.5,130.7 581.5,120.8 579.5,111.2 577.5,102.2 575.5,94.1 573.5,87.1 571.5,81.5 569.5,77.4 567.5,74.9 565.5,74.1 563.6,75.1 561.6,77.7 559.6,82.0 557.6,87.8 555.6,94.9 553.6,103.1 551.6,112.2 549.6,121.9 547.6,131.8 545.6,141.7 543.6,151.4 541.6,160.4 539.6,168.5 537.6,175.5 535.6,181.2 533.6,185.3 531.6,187.9 529.6,188.7 527.6,187.8 525.6,185.2 523.6,180.9 521.6,175.2 519.6,168.1 517.6,159.9 515.6,150.9 513.6,141.2 511.7,131.3 509.7,121.4 507.7,111.7 505.7,102.7 503.7,94.5 501.7,87.5 499.7,81.8 497.7,77.6 495.7,75.0 493.7,74.1 491.7,75.0 489.7,77.5 487.7,81.7 485.7,87.4 483.7,94.5 481.7,102.6 479.7,111.7 477.7,121.3 475.7,131.2 473.7,141.1 471.7,150.8 469.7,159.8 467.7,168.0 465.7,175.1 463.7,180.9 461.7,185.1 459.8,187.8 457.8,188.7 455.8,187.9 453.8,185.4 451.8,181.2 449.8,175.6 447.8,168.6 445.8,160.4 443.8,151.4 441.8,141.8 439.8,131.9 437.8,121.9 435.8,112.3 433.8,103.2 431.8,95.0 429.8,87.9 427.8,82.1 425.8,77.8 423.8,75.1 421.8,74.1 419.8,74.9 417.8,77.3 415.8,81.4 413.8,87.1 411.8,94.0 409.8,102.1 407.9,111.1 405.9,120.7 403.9,130.6 401.9,140.6 399.9,150.2 397.9,159.3 395.9,167.6 393.9,174.7 391.9,180.6 389.9,184.9 387.9,187.7 385.9,188.7 383.9,188.0 381.9,185.6 379.9,181.5 377.9,175.9 375.9,169.0 373.9,160.9 371.9,152.0 369.9,142.4 367.9,132.5 365.9,122.5 363.9,112.9 361.9,103.7 359.9,95.5 357.9,88.3 356.0,82.4 354.0,78.0 352.0,75.2 350.0,74.1 348.0,74.8 346.0,77.1 344.0,81.1 342.0,86.7 340.0,93.6 338.0,101.6 336.0,110.5 334.0,120.1 332.0,130.0 330.0,140.0 328.0,149.7 326.0,158.8 324.0,167.1 322.0,174.3 320.0,180.3 318.0,184.7 316.0,187.5 314.0,188.7 312.0,188.1 310.0,185.8 308.0,181.8 306.0,176.3 304.1,169.5 302.1,161.5 300.1,152.5 298.1,143.0 296.1,133.1 294.1,123.1 292.1,113.4 290.1,104.3 288.1,95.9 286.1,88.7 284.1,82.7 282.1,78.2 280.1,75.3 278.1,74.1 276.1,74.7 274.1,76.9 272.1,80.9 270.1,86.3 268.1,93.1 266.1,101.1 264.1,110.0 262.1,119.5 260.1,129.4 258.1,139.4 256.1,149.1 254.1,158.3 252.2,166.6 250.2,173.9 248.2,179.9 246.2,184.5 244.2,187.4 242.2,188.7 240.2,188.2 238.2,185.9 236.2,182.1 234.2,176.7 232.2,169.9 230.2,162.0 228.2,153.1 226.2,143.6 224.2,133.7 222.2,123.7 220.2,114.0 218.2,104.8 216.2,96.4 214.2,89.1 212.2,83.0 210.2,78.4 208.2,75.4 206.2,74.2 204.2,74.6 202.2,76.8 200.3,80.6 198.3,85.9 196.3,92.7 194.3,100.6 192.3,109.4 190.3,118.9 188.3,128.8 186.3,138.8 184.3,148.5 182.3,157.7 180.3,166.2 178.3,173.5 176.3,179.6 174.3,184.3 172.3,187.3 170.3,188.6 168.3,188.2 166.3,186.1 164.3,182.4 162.3,177.0 160.3,170.3 158.3,162.5 156.3,153.6 154.3,144.2 152.3,134.3 150.3,124.3 148.4,114.6 146.4,105.3 144.4,96.9 142.4,89.5 140.4,83.3 138.4,78.7 136.4,75.6 134.4,74.2 132.4,74.5 130.4,76.6 128.4,80.3 126.4,85.6 124.4,92.2 122.4,100.1 120.4,108.9 118.4,118.4 116.4,128.2 114.4,138.2 112.4,148.0 110.4,157.2 108.4,165.7 106.4,173.1 104.4,179.3 102.4,184.0 100.4,187.2 98.4,188.6 96.5,188.3 94.5,186.3 92.5,182.6 90.5,177.4 88.5,170.8 86.5,163.0 84.5,154.2 82.5,144.7 80.5,134.9 78.5,124.9 76.5,115.1 74.5,105.9 72.5,97.4 70.5,89.9 68.5,83.7 66.5,78.9 64.5,75.7 62.5,74.2 60.5,74.5 58.5,76.4 56.5,80.0 54.5,85.2 52.5,91.8 50.5,99.6 48.5,108.3 46.5,117.8 44.6,127.6 42.6,137.6 40.6,147.4 38.6,156.7 36.6,165.2 34.6,172.7 32.6,179.0 30.6,183.8 28.6,187.0 26.6,188.6 24.6,188.4 22.6,186.5 20.6,182.9 18.6,177.8Z" fill="url(#eg)" fill-opacity="0.6" stroke="url(#eg)" stroke-opacity="0.30" stroke-width="0.6"/><path d="M18.6,177.8 20.6,182.9 22.6,186.5 24.6,188.4 26.6,188.6 28.6,187.0 30.6,183.8 32.6,179.0 34.6,172.7 36.6,165.2 38.6,156.7 40.6,147.4 42.6,137.6 44.6,127.6 46.5,117.8 48.5,108.3 50.5,99.6 52.5,91.8 54.5,85.2 56.5,80.0 58.5,76.4 60.5,74.5 62.5,74.2 64.5,75.7 66.5,78.9 68.5,83.7 70.5,89.9 72.5,97.4 74.5,105.9 76.5,115.1 78.5,124.9 80.5,134.9 82.5,144.7 84.5,154.2 86.5,163.0 88.5,170.8 90.5,177.4 92.5,182.6 94.5,186.3 96.5,188.3 98.4,188.6 100.4,187.2 102.4,184.0 104.4,179.3 106.4,173.1 108.4,165.7 110.4,157.2 112.4,148.0 114.4,138.2 116.4,128.2 118.4,118.4 120.4,108.9 122.4,100.1 124.4,92.2 126.4,85.6 128.4,80.3 130.4,76.6 132.4,74.5 134.4,74.2 136.4,75.6 138.4,78.7 140.4,83.3 142.4,89.5 144.4,96.9 146.4,105.3 148.4,114.6 150.3,124.3 152.3,134.3 154.3,144.2 156.3,153.6 158.3,162.5 160.3,170.3 162.3,177.0 164.3,182.4 166.3,186.1 168.3,188.2 170.3,188.6 172.3,187.3 174.3,184.3 176.3,179.6 178.3,173.5 180.3,166.2 182.3,157.7 184.3,148.5 186.3,138.8 188.3,128.8 190.3,118.9 192.3,109.4 194.3,100.6 196.3,92.7 198.3,85.9 200.3,80.6 202.2,76.8 204.2,74.6 206.2,74.2 208.2,75.4 210.2,78.4 212.2,83.0 214.2,89.1 216.2,96.4 218.2,104.8 220.2,114.0 222.2,123.7 224.2,133.7 226.2,143.6 228.2,153.1 230.2,162.0 232.2,169.9 234.2,176.7 236.2,182.1 238.2,185.9 240.2,188.2 242.2,188.7 244.2,187.4 246.2,184.5 248.2,179.9 250.2,173.9 252.2,166.6 254.1,158.3 256.1,149.1 258.1,139.4 260.1,129.4 262.1,119.5 264.1,110.0 266.1,101.1 268.1,93.1 270.1,86.3 272.1,80.9 274.1,76.9 276.1,74.7 278.1,74.1 280.1,75.3 282.1,78.2 284.1,82.7 286.1,88.7 288.1,95.9 290.1,104.3 292.1,113.4 294.1,123.1 296.1,133.1 298.1,143.0 300.1,152.5 302.1,161.5 304.1,169.5 306.0,176.3 308.0,181.8 310.0,185.8 312.0,188.1 314.0,188.7 316.0,187.5 318.0,184.7 320.0,180.3 322.0,174.3 324.0,167.1 326.0,158.8 328.0,149.7 330.0,140.0 332.0,130.0 334.0,120.1 336.0,110.5 338.0,101.6 340.0,93.6 342.0,86.7 344.0,81.1 346.0,77.1 348.0,74.8 350.0,74.1 352.0,75.2 354.0,78.0 356.0,82.4 357.9,88.3 359.9,95.5 361.9,103.7 363.9,112.9 365.9,122.5 367.9,132.5 369.9,142.4 371.9,152.0 373.9,160.9 375.9,169.0 377.9,175.9 379.9,181.5 381.9,185.6 383.9,188.0 385.9,188.7 387.9,187.7 389.9,184.9 391.9,180.6 393.9,174.7 395.9,167.6 397.9,159.3 399.9,150.2 401.9,140.6 403.9,130.6 405.9,120.7 407.9,111.1 409.8,102.1 411.8,94.0 413.8,87.1 415.8,81.4 417.8,77.3 419.8,74.9 421.8,74.1 423.8,75.1 425.8,77.8 427.8,82.1 429.8,87.9 431.8,95.0 433.8,103.2 435.8,112.3 437.8,121.9 439.8,131.9 441.8,141.8 443.8,151.4 445.8,160.4 447.8,168.6 449.8,175.6 451.8,181.2 453.8,185.4 455.8,187.9 457.8,188.7 459.8,187.8 461.7,185.1 463.7,180.9 465.7,175.1 467.7,168.0 469.7,159.8 471.7,150.8 473.7,141.1 475.7,131.2 477.7,121.3 479.7,111.7 481.7,102.6 483.7,94.5 485.7,87.4 487.7,81.7 489.7,77.5 491.7,75.0 493.7,74.1 495.7,75.0 497.7,77.6 499.7,81.8 501.7,87.5 503.7,94.5 505.7,102.7 507.7,111.7 509.7,121.4 511.7,131.3 513.6,141.2 515.6,150.9 517.6,159.9 519.6,168.1 521.6,175.2 523.6,180.9 525.6,185.2 527.6,187.8 529.6,188.7 531.6,187.9 533.6,185.3 535.6,181.2 537.6,175.5 539.6,168.5 541.6,160.4 543.6,151.4 545.6,141.7 547.6,131.8 549.6,121.9 551.6,112.2 553.6,103.1 555.6,94.9 557.6,87.8 559.6,82.0 561.6,77.7 563.6,75.1 565.5,74.1 567.5,74.9 569.5,77.4 571.5,81.5 573.5,87.1 575.5,94.1 577.5,102.2 579.5,111.2 581.5,120.8 583.5,130.7 585.5,140.6 587.5,150.3 589.5,159.4 591.5,167.6 593.5,174.8 595.5,180.6 597.5,185.0 599.5,187.7 601.5,188.7 603.5,188.0 605.5,185.5 607.5,181.5 609.5,175.9 611.5,168.9 613.5,160.9 615.5,151.9 617.4,142.3 619.4,132.4 621.4,122.5 623.4,112.8 625.4,103.7 627.4,95.4 629.4,88.2 631.4,82.3 633.4,78.0 635.4,75.2 637.4,74.1 639.4,74.8 641.4,77.2 643.4,81.2 L643.4,75.2 641.4,74.1 639.4,74.7 637.4,76.9 635.4,80.8 633.4,86.2 631.4,92.9 629.4,100.7 627.4,109.5 625.4,118.9 623.4,128.6 621.4,138.5 619.4,148.1 617.4,157.3 615.5,165.7 613.5,173.0 611.5,179.2 609.5,183.9 607.5,187.1 605.5,188.6 603.5,188.4 601.5,186.5 599.5,183.0 597.5,178.0 595.5,171.6 593.5,164.0 591.5,155.4 589.5,146.2 587.5,136.4 585.5,126.6 583.5,116.9 581.5,107.6 579.5,99.0 577.5,91.4 575.5,84.9 573.5,79.9 571.5,76.3 569.5,74.4 567.5,74.2 565.5,75.7 563.6,78.8 561.6,83.5 559.6,89.6 557.6,97.0 555.6,105.3 553.6,114.5 551.6,124.1 549.6,133.9 547.6,143.7 545.6,153.1 543.6,161.9 541.6,169.8 539.6,176.5 537.6,181.9 535.6,185.8 533.6,188.1 531.6,188.7 529.6,187.6 527.6,184.8 525.6,180.5 523.6,174.7 521.6,167.6 519.6,159.5 517.6,150.5 515.6,141.0 513.6,131.1 511.7,121.3 509.7,111.8 507.7,102.9 505.7,94.8 503.7,87.8 501.7,82.0 499.7,77.8 497.7,75.1 495.7,74.1 493.7,74.8 491.7,77.2 489.7,81.2 487.7,86.6 485.7,93.4 483.7,101.3 481.7,110.1 479.7,119.6 477.7,129.4 475.7,139.2 473.7,148.8 471.7,157.9 469.7,166.2 467.7,173.5 465.7,179.6 463.7,184.2 461.7,187.2 459.8,188.6 457.8,188.3 455.8,186.3 453.8,182.7 451.8,177.6 449.8,171.1 447.8,163.4 445.8,154.8 443.8,145.4 441.8,135.7 439.8,125.9 437.8,116.2 435.8,106.9 433.8,98.4 431.8,90.9 429.8,84.5 427.8,79.6 425.8,76.1 423.8,74.4 421.8,74.3 419.8,75.9 417.8,79.1 415.8,83.9 413.8,90.1 411.8,97.5 409.8,106.0 407.9,115.1 405.9,124.8 403.9,134.7 401.9,144.4 399.9,153.8 397.9,162.5 395.9,170.3 393.9,176.9 391.9,182.2 389.9,186.0 387.9,188.2 385.9,188.7 383.9,187.4 381.9,184.6 379.9,180.1 377.9,174.2 375.9,167.1 373.9,158.9 371.9,149.8 369.9,140.3 367.9,130.4 365.9,120.6 363.9,111.1 361.9,102.2 359.9,94.2 357.9,87.3 356.0,81.7 354.0,77.5 352.0,75.0 350.0,74.1 348.0,74.9 346.0,77.4 344.0,81.5 342.0,87.1 340.0,94.0 338.0,102.0 336.0,110.8 334.0,120.3 332.0,130.1 330.0,139.9 328.0,149.5 326.0,158.6 324.0,166.8 322.0,174.0 320.0,180.0 318.0,184.5 316.0,187.4 314.0,188.6 312.0,188.2 310.0,186.1 308.0,182.4 306.0,177.1 304.1,170.5 302.1,162.8 300.1,154.1 298.1,144.7 296.1,135.0 294.1,125.1 292.1,115.5 290.1,106.3 288.1,97.8 286.1,90.3 284.1,84.1 282.1,79.3 280.1,76.0 278.1,74.3 276.1,74.3 274.1,76.1 272.1,79.4 270.1,84.3 268.1,90.6 266.1,98.1 264.1,106.6 262.1,115.8 260.1,125.5 258.1,135.4 256.1,145.1 254.1,154.5 252.2,163.1 250.2,170.8 248.2,177.4 246.2,182.6 244.2,186.2 242.2,188.3 240.2,188.6 238.2,187.3 236.2,184.3 234.2,179.7 232.2,173.8 230.2,166.5 228.2,158.2 226.2,149.1 224.2,139.5 222.2,129.7 220.2,119.9 218.2,110.4 216.2,101.6 214.2,93.7 212.2,86.8 210.2,81.3 208.2,77.3 206.2,74.9 204.2,74.1 202.2,75.0 200.3,77.7 198.3,81.9 196.3,87.5 194.3,94.5 192.3,102.6 190.3,111.5 188.3,121.0 186.3,130.8 184.3,140.7 182.3,150.2 180.3,159.2 178.3,167.4 176.3,174.5 174.3,180.3 172.3,184.7 170.3,187.5 168.3,188.7 166.3,188.1 164.3,185.9 162.3,182.0 160.3,176.7 158.3,170.0 156.3,162.2 154.3,153.4 152.3,144.0 150.3,134.3 148.4,124.4 146.4,114.8 144.4,105.6 142.4,97.2 140.4,89.8 138.4,83.7 136.4,79.0 134.4,75.8 132.4,74.2 130.4,74.4 128.4,76.2 126.4,79.7 124.4,84.7 122.4,91.1 120.4,98.7 118.4,107.3 116.4,116.5 114.4,126.3 112.4,136.1 110.4,145.8 108.4,155.1 106.4,163.7 104.4,171.4 102.4,177.8 100.4,182.9 98.4,186.4 96.5,188.4 94.5,188.6 92.5,187.1 90.5,184.0 88.5,179.3 86.5,173.3 84.5,165.9 82.5,157.6 80.5,148.5 78.5,138.8 76.5,129.0 74.5,119.2 72.5,109.8 70.5,101.0 68.5,93.1 66.5,86.4 64.5,81.0 62.5,77.0 60.5,74.7 58.5,74.1 56.5,75.2 54.5,77.9 52.5,82.2 50.5,88.0 48.5,95.1 46.5,103.2 44.6,112.2 42.6,121.7 40.6,131.5 38.6,141.4 36.6,150.9 34.6,159.8 32.6,168.0 30.6,175.0 28.6,180.7 26.6,185.0 24.6,187.7 22.6,188.7 20.6,188.0 18.6,185.7Z" fill="url(#eg)" fill-opacity="0.46" stroke="url(#eg)" stroke-opacity="0.23" stroke-width="0.6"/><path d="M18.6,185.7 20.6,188.0 22.6,188.7 24.6,187.7 26.6,185.0 28.6,180.7 30.6,175.0 32.6,168.0 34.6,159.8 36.6,150.9 38.6,141.4 40.6,131.5 42.6,121.7 44.6,112.2 46.5,103.2 48.5,95.1 50.5,88.0 52.5,82.2 54.5,77.9 56.5,75.2 58.5,74.1 60.5,74.7 62.5,77.0 64.5,81.0 66.5,86.4 68.5,93.1 70.5,101.0 72.5,109.8 74.5,119.2 76.5,129.0 78.5,138.8 80.5,148.5 82.5,157.6 84.5,165.9 86.5,173.3 88.5,179.3 90.5,184.0 92.5,187.1 94.5,188.6 96.5,188.4 98.4,186.4 100.4,182.9 102.4,177.8 104.4,171.4 106.4,163.7 108.4,155.1 110.4,145.8 112.4,136.1 114.4,126.3 116.4,116.5 118.4,107.3 120.4,98.7 122.4,91.1 124.4,84.7 126.4,79.7 128.4,76.2 130.4,74.4 132.4,74.2 134.4,75.8 136.4,79.0 138.4,83.7 140.4,89.8 142.4,97.2 144.4,105.6 146.4,114.8 148.4,124.4 150.3,134.3 152.3,144.0 154.3,153.4 156.3,162.2 158.3,170.0 160.3,176.7 162.3,182.0 164.3,185.9 166.3,188.1 168.3,188.7 170.3,187.5 172.3,184.7 174.3,180.3 176.3,174.5 178.3,167.4 180.3,159.2 182.3,150.2 184.3,140.7 186.3,130.8 188.3,121.0 190.3,111.5 192.3,102.6 194.3,94.5 196.3,87.5 198.3,81.9 200.3,77.7 202.2,75.0 204.2,74.1 206.2,74.9 208.2,77.3 210.2,81.3 212.2,86.8 214.2,93.7 216.2,101.6 218.2,110.4 220.2,119.9 222.2,129.7 224.2,139.5 226.2,149.1 228.2,158.2 230.2,166.5 232.2,173.8 234.2,179.7 236.2,184.3 238.2,187.3 240.2,188.6 242.2,188.3 244.2,186.2 246.2,182.6 248.2,177.4 250.2,170.8 252.2,163.1 254.1,154.5 256.1,145.1 258.1,135.4 260.1,125.5 262.1,115.8 264.1,106.6 266.1,98.1 268.1,90.6 270.1,84.3 272.1,79.4 274.1,76.1 276.1,74.3 278.1,74.3 280.1,76.0 282.1,79.3 284.1,84.1 286.1,90.3 288.1,97.8 290.1,106.3 292.1,115.5 294.1,125.1 296.1,135.0 298.1,144.7 300.1,154.1 302.1,162.8 304.1,170.5 306.0,177.1 308.0,182.4 310.0,186.1 312.0,188.2 314.0,188.6 316.0,187.4 318.0,184.5 320.0,180.0 322.0,174.0 324.0,166.8 326.0,158.6 328.0,149.5 330.0,139.9 332.0,130.1 334.0,120.3 336.0,110.8 338.0,102.0 340.0,94.0 342.0,87.1 344.0,81.5 346.0,77.4 348.0,74.9 350.0,74.1 352.0,75.0 354.0,77.5 356.0,81.7 357.9,87.3 359.9,94.2 361.9,102.2 363.9,111.1 365.9,120.6 367.9,130.4 369.9,140.3 371.9,149.8 373.9,158.9 375.9,167.1 377.9,174.2 379.9,180.1 381.9,184.6 383.9,187.4 385.9,188.7 387.9,188.2 389.9,186.0 391.9,182.2 393.9,176.9 395.9,170.3 397.9,162.5 399.9,153.8 401.9,144.4 403.9,134.7 405.9,124.8 407.9,115.1 409.8,106.0 411.8,97.5 413.8,90.1 415.8,83.9 417.8,79.1 419.8,75.9 421.8,74.3 423.8,74.4 425.8,76.1 427.8,79.6 429.8,84.5 431.8,90.9 433.8,98.4 435.8,106.9 437.8,116.2 439.8,125.9 441.8,135.7 443.8,145.4 445.8,154.8 447.8,163.4 449.8,171.1 451.8,177.6 453.8,182.7 455.8,186.3 457.8,188.3 459.8,188.6 461.7,187.2 463.7,184.2 465.7,179.6 467.7,173.5 469.7,166.2 471.7,157.9 473.7,148.8 475.7,139.2 477.7,129.4 479.7,119.6 481.7,110.1 483.7,101.3 485.7,93.4 487.7,86.6 489.7,81.2 491.7,77.2 493.7,74.8 495.7,74.1 497.7,75.1 499.7,77.8 501.7,82.0 503.7,87.8 505.7,94.8 507.7,102.9 509.7,111.8 511.7,121.3 513.6,131.1 515.6,141.0 517.6,150.5 519.6,159.5 521.6,167.6 523.6,174.7 525.6,180.5 527.6,184.8 529.6,187.6 531.6,188.7 533.6,188.1 535.6,185.8 537.6,181.9 539.6,176.5 541.6,169.8 543.6,161.9 545.6,153.1 547.6,143.7 549.6,133.9 551.6,124.1 553.6,114.5 555.6,105.3 557.6,97.0 559.6,89.6 561.6,83.5 563.6,78.8 565.5,75.7 567.5,74.2 569.5,74.4 571.5,76.3 573.5,79.9 575.5,84.9 577.5,91.4 579.5,99.0 581.5,107.6 583.5,116.9 585.5,126.6 587.5,136.4 589.5,146.2 591.5,155.4 593.5,164.0 595.5,171.6 597.5,178.0 599.5,183.0 601.5,186.5 603.5,188.4 605.5,188.6 607.5,187.1 609.5,183.9 611.5,179.2 613.5,173.0 615.5,165.7 617.4,157.3 619.4,148.1 621.4,138.5 623.4,128.6 625.4,118.9 627.4,109.5 629.4,100.7 631.4,92.9 633.4,86.2 635.4,80.8 637.4,76.9 639.4,74.7 641.4,74.1 643.4,75.2 L643.4,75.3 641.4,78.0 639.4,82.3 637.4,88.0 635.4,94.9 633.4,102.9 631.4,111.7 629.4,121.1 627.4,130.8 625.4,140.5 623.4,149.9 621.4,158.8 619.4,166.9 617.4,174.0 615.5,179.9 613.5,184.3 611.5,187.3 609.5,188.6 607.5,188.3 605.5,186.4 603.5,182.9 601.5,177.9 599.5,171.5 597.5,164.0 595.5,155.6 593.5,146.5 591.5,136.9 589.5,127.2 587.5,117.6 585.5,108.4 583.5,99.9 581.5,92.3 579.5,85.8 577.5,80.6 575.5,76.8 573.5,74.7 571.5,74.1 569.5,75.2 567.5,78.0 565.5,82.2 563.6,87.9 561.6,94.8 559.6,102.8 557.6,111.6 555.6,121.0 553.6,130.6 551.6,140.3 549.6,149.8 547.6,158.7 545.6,166.8 543.6,173.9 541.6,179.8 539.6,184.3 537.6,187.2 535.6,188.6 533.6,188.3 531.6,186.4 529.6,182.9 527.6,177.9 525.6,171.6 523.6,164.2 521.6,155.8 519.6,146.6 517.6,137.1 515.6,127.4 513.6,117.8 511.7,108.6 509.7,100.0 507.7,92.4 505.7,85.8 503.7,80.6 501.7,76.9 499.7,74.7 497.7,74.1 495.7,75.2 493.7,77.9 491.7,82.1 489.7,87.8 487.7,94.7 485.7,102.7 483.7,111.5 481.7,120.8 479.7,130.5 477.7,140.2 475.7,149.6 473.7,158.5 471.7,166.7 469.7,173.8 467.7,179.7 465.7,184.2 463.7,187.2 461.7,188.6 459.8,188.3 457.8,186.5 455.8,183.0 453.8,178.0 451.8,171.7 449.8,164.3 447.8,155.9 445.8,146.8 443.8,137.2 441.8,127.5 439.8,117.9 437.8,108.7 435.8,100.1 433.8,92.5 431.8,85.9 429.8,80.7 427.8,76.9 425.8,74.7 423.8,74.1 421.8,75.2 419.8,77.9 417.8,82.1 415.8,87.7 413.8,94.6 411.8,102.5 409.8,111.3 407.9,120.7 405.9,130.3 403.9,140.0 401.9,149.5 399.9,158.4 397.9,166.6 395.9,173.7 393.9,179.6 391.9,184.2 389.9,187.2 387.9,188.6 385.9,188.4 383.9,186.5 381.9,183.1 379.9,178.1 377.9,171.8 375.9,164.4 373.9,156.0 371.9,146.9 369.9,137.4 367.9,127.7 365.9,118.1 363.9,108.8 361.9,100.3 359.9,92.6 357.9,86.0 356.0,80.8 354.0,77.0 352.0,74.7 350.0,74.1 348.0,75.2 346.0,77.8 344.0,82.0 342.0,87.6 340.0,94.5 338.0,102.4 336.0,111.2 334.0,120.5 332.0,130.2 330.0,139.9 328.0,149.3 326.0,158.3 324.0,166.4 322.0,173.6 320.0,179.5 318.0,184.1 316.0,187.1 314.0,188.6 312.0,188.4 310.0,186.5 308.0,183.1 306.0,178.2 304.1,171.9 302.1,164.5 300.1,156.2 298.1,147.1 296.1,137.5 294.1,127.8 292.1,118.2 290.1,109.0 288.1,100.4 286.1,92.7 284.1,86.1 282.1,80.8 280.1,77.0 278.1,74.7 276.1,74.1 274.1,75.1 272.1,77.8 270.1,81.9 268.1,87.5 266.1,94.4 264.1,102.3 262.1,111.1 260.1,120.4 258.1,130.0 256.1,139.7 254.1,149.2 252.2,158.1 250.2,166.3 248.2,173.5 246.2,179.5 244.2,184.0 242.2,187.1 240.2,188.6 238.2,188.4 236.2,186.6 234.2,183.2 232.2,178.3 230.2,172.1 228.2,164.6 226.2,156.3 224.2,147.2 222.2,137.7 220.2,128.0 218.2,118.3 216.2,109.1 214.2,100.5 212.2,92.8 210.2,86.2 208.2,80.9 206.2,77.1 204.2,74.8 202.2,74.1 200.3,75.1 198.3,77.7 196.3,81.9 194.3,87.4 192.3,94.3 190.3,102.2 188.3,110.9 186.3,120.2 184.3,129.9 182.3,139.6 180.3,149.1 178.3,158.0 176.3,166.2 174.3,173.4 172.3,179.4 170.3,184.0 168.3,187.1 166.3,188.6 164.3,188.4 162.3,186.6 160.3,183.2 158.3,178.4 156.3,172.2 154.3,164.8 152.3,156.4 150.3,147.3 148.4,137.8 146.4,128.1 144.4,118.5 142.4,109.2 140.4,100.6 138.4,92.9 136.4,86.3 134.4,81.0 132.4,77.1 130.4,74.8 128.4,74.1 126.4,75.1 124.4,77.7 122.4,81.8 120.4,87.3 118.4,94.2 116.4,102.0 114.4,110.8 112.4,120.1 110.4,129.8 108.4,139.5 106.4,148.9 104.4,157.9 102.4,166.1 100.4,173.3 98.4,179.3 96.5,183.9 94.5,187.0 92.5,188.6 90.5,188.4 88.5,186.7 86.5,183.3 84.5,178.5 82.5,172.3 80.5,164.9 78.5,156.5 76.5,147.5 74.5,138.0 72.5,128.3 70.5,118.6 68.5,109.4 66.5,100.8 64.5,93.0 62.5,86.4 60.5,81.0 58.5,77.1 56.5,74.8 54.5,74.1 52.5,75.0 50.5,77.6 48.5,81.7 46.5,87.2 44.6,94.0 42.6,101.9 40.6,110.6 38.6,120.0 36.6,129.6 34.6,139.3 32.6,148.8 30.6,157.8 28.6,166.0 26.6,173.2 24.6,179.2 22.6,183.9 20.6,187.0 18.6,188.5Z" fill="url(#eg)" fill-opacity="0.32" stroke="url(#eg)" stroke-opacity="0.16" stroke-width="0.6"/><path d="M18.6,188.5 20.6,187.0 22.6,183.9 24.6,179.2 26.6,173.2 28.6,166.0 30.6,157.8 32.6,148.8 34.6,139.3 36.6,129.6 38.6,120.0 40.6,110.6 42.6,101.9 44.6,94.0 46.5,87.2 48.5,81.7 50.5,77.6 52.5,75.0 54.5,74.1 56.5,74.8 58.5,77.1 60.5,81.0 62.5,86.4 64.5,93.0 66.5,100.8 68.5,109.4 70.5,118.6 72.5,128.3 74.5,138.0 76.5,147.5 78.5,156.5 80.5,164.9 82.5,172.3 84.5,178.5 86.5,183.3 88.5,186.7 90.5,188.4 92.5,188.6 94.5,187.0 96.5,183.9 98.4,179.3 100.4,173.3 102.4,166.1 104.4,157.9 106.4,148.9 108.4,139.5 110.4,129.8 112.4,120.1 114.4,110.8 116.4,102.0 118.4,94.2 120.4,87.3 122.4,81.8 124.4,77.7 126.4,75.1 128.4,74.1 130.4,74.8 132.4,77.1 134.4,81.0 136.4,86.3 138.4,92.9 140.4,100.6 142.4,109.2 144.4,118.5 146.4,128.1 148.4,137.8 150.3,147.3 152.3,156.4 154.3,164.8 156.3,172.2 158.3,178.4 160.3,183.2 162.3,186.6 164.3,188.4 166.3,188.6 168.3,187.1 170.3,184.0 172.3,179.4 174.3,173.4 176.3,166.2 178.3,158.0 180.3,149.1 182.3,139.6 184.3,129.9 186.3,120.2 188.3,110.9 190.3,102.2 192.3,94.3 194.3,87.4 196.3,81.9 198.3,77.7 200.3,75.1 202.2,74.1 204.2,74.8 206.2,77.1 208.2,80.9 210.2,86.2 212.2,92.8 214.2,100.5 216.2,109.1 218.2,118.3 220.2,128.0 222.2,137.7 224.2,147.2 226.2,156.3 228.2,164.6 230.2,172.1 232.2,178.3 234.2,183.2 236.2,186.6 238.2,188.4 240.2,188.6 242.2,187.1 244.2,184.0 246.2,179.5 248.2,173.5 250.2,166.3 252.2,158.1 254.1,149.2 256.1,139.7 258.1,130.0 260.1,120.4 262.1,111.1 264.1,102.3 266.1,94.4 268.1,87.5 270.1,81.9 272.1,77.8 274.1,75.1 276.1,74.1 278.1,74.7 280.1,77.0 282.1,80.8 284.1,86.1 286.1,92.7 288.1,100.4 290.1,109.0 292.1,118.2 294.1,127.8 296.1,137.5 298.1,147.1 300.1,156.2 302.1,164.5 304.1,171.9 306.0,178.2 308.0,183.1 310.0,186.5 312.0,188.4 314.0,188.6 316.0,187.1 318.0,184.1 320.0,179.5 322.0,173.6 324.0,166.4 326.0,158.3 328.0,149.3 330.0,139.9 332.0,130.2 334.0,120.5 336.0,111.2 338.0,102.4 340.0,94.5 342.0,87.6 344.0,82.0 346.0,77.8 348.0,75.2 350.0,74.1 352.0,74.7 354.0,77.0 356.0,80.8 357.9,86.0 359.9,92.6 361.9,100.3 363.9,108.8 365.9,118.1 367.9,127.7 369.9,137.4 371.9,146.9 373.9,156.0 375.9,164.4 377.9,171.8 379.9,178.1 381.9,183.1 383.9,186.5 385.9,188.4 387.9,188.6 389.9,187.2 391.9,184.2 393.9,179.6 395.9,173.7 397.9,166.6 399.9,158.4 401.9,149.5 403.9,140.0 405.9,130.3 407.9,120.7 409.8,111.3 411.8,102.5 413.8,94.6 415.8,87.7 417.8,82.1 419.8,77.9 421.8,75.2 423.8,74.1 425.8,74.7 427.8,76.9 429.8,80.7 431.8,85.9 433.8,92.5 435.8,100.1 437.8,108.7 439.8,117.9 441.8,127.5 443.8,137.2 445.8,146.8 447.8,155.9 449.8,164.3 451.8,171.7 453.8,178.0 455.8,183.0 457.8,186.5 459.8,188.3 461.7,188.6 463.7,187.2 465.7,184.2 467.7,179.7 469.7,173.8 471.7,166.7 473.7,158.5 475.7,149.6 477.7,140.2 479.7,130.5 481.7,120.8 483.7,111.5 485.7,102.7 487.7,94.7 489.7,87.8 491.7,82.1 493.7,77.9 495.7,75.2 497.7,74.1 499.7,74.7 501.7,76.9 503.7,80.6 505.7,85.8 507.7,92.4 509.7,100.0 511.7,108.6 513.6,117.8 515.6,127.4 517.6,137.1 519.6,146.6 521.6,155.8 523.6,164.2 525.6,171.6 527.6,177.9 529.6,182.9 531.6,186.4 533.6,188.3 535.6,188.6 537.6,187.2 539.6,184.3 541.6,179.8 543.6,173.9 545.6,166.8 547.6,158.7 549.6,149.8 551.6,140.3 553.6,130.6 555.6,121.0 557.6,111.6 559.6,102.8 561.6,94.8 563.6,87.9 565.5,82.2 567.5,78.0 569.5,75.2 571.5,74.1 573.5,74.7 575.5,76.8 577.5,80.6 579.5,85.8 581.5,92.3 583.5,99.9 585.5,108.4 587.5,117.6 589.5,127.2 591.5,136.9 593.5,146.5 595.5,155.6 597.5,164.0 599.5,171.5 601.5,177.9 603.5,182.9 605.5,186.4 607.5,188.3 609.5,188.6 611.5,187.3 613.5,184.3 615.5,179.9 617.4,174.0 619.4,166.9 621.4,158.8 623.4,149.9 625.4,140.5 627.4,130.8 629.4,121.1 631.4,111.7 633.4,102.9 635.4,94.9 637.4,88.0 639.4,82.3 641.4,78.0 643.4,75.3 L643.4,88.7 641.4,95.6 639.4,103.6 637.4,112.2 635.4,121.4 633.4,130.9 631.4,140.4 629.4,149.7 627.4,158.4 625.4,166.4 623.4,173.4 621.4,179.3 619.4,183.8 617.4,186.9 615.5,188.5 613.5,188.5 611.5,186.9 609.5,183.8 607.5,179.2 605.5,173.3 603.5,166.3 601.5,158.3 599.5,149.5 597.5,140.3 595.5,130.8 593.5,121.3 591.5,112.1 589.5,103.4 587.5,95.5 585.5,88.6 583.5,82.9 581.5,78.5 579.5,75.6 577.5,74.2 575.5,74.4 573.5,76.2 571.5,79.5 569.5,84.2 567.5,90.2 565.5,97.4 563.6,105.5 561.6,114.4 559.6,123.6 557.6,133.2 555.6,142.6 553.6,151.8 551.6,160.4 549.6,168.1 547.6,174.9 545.6,180.5 543.6,184.7 541.6,187.5 539.6,188.6 537.6,188.3 535.6,186.3 533.6,182.8 531.6,177.9 529.6,171.8 527.6,164.5 525.6,156.3 523.6,147.4 521.6,138.0 519.6,128.5 517.6,119.1 515.6,110.0 513.6,101.5 511.7,93.8 509.7,87.2 507.7,81.7 505.7,77.7 503.7,75.1 501.7,74.1 499.7,74.7 497.7,76.8 495.7,80.5 493.7,85.5 491.7,91.8 489.7,99.2 487.7,107.5 485.7,116.5 483.7,125.9 481.7,135.4 479.7,144.8 477.7,153.8 475.7,162.3 473.7,169.8 471.7,176.3 469.7,181.6 467.7,185.5 465.7,187.9 463.7,188.7 461.7,187.9 459.8,185.6 457.8,181.8 455.8,176.6 453.8,170.1 451.8,162.6 449.8,154.2 447.8,145.2 445.8,135.8 443.8,126.3 441.8,116.9 439.8,107.9 437.8,99.6 435.8,92.1 433.8,85.8 431.8,80.7 429.8,77.0 427.8,74.7 425.8,74.1 423.8,75.0 421.8,77.5 419.8,81.5 417.8,86.9 415.8,93.5 413.8,101.1 411.8,109.6 409.8,118.7 407.9,128.1 405.9,137.6 403.9,147.0 401.9,155.9 399.9,164.1 397.9,171.5 395.9,177.7 393.9,182.6 391.9,186.2 389.9,188.2 387.9,188.7 385.9,187.5 383.9,184.9 381.9,180.7 379.9,175.2 377.9,168.5 375.9,160.7 373.9,152.2 371.9,143.0 369.9,133.6 367.9,124.1 365.9,114.8 363.9,105.9 361.9,97.8 359.9,90.5 357.9,84.5 356.0,79.7 354.0,76.3 352.0,74.5 350.0,74.2 348.0,75.5 346.0,78.3 344.0,82.7 342.0,88.3 340.0,95.2 338.0,103.0 336.0,111.7 334.0,120.9 332.0,130.3 330.0,139.8 328.0,149.1 326.0,157.9 324.0,165.9 322.0,173.0 320.0,179.0 318.0,183.6 316.0,186.8 314.0,188.5 312.0,188.5 310.0,187.0 308.0,184.0 306.0,179.5 304.1,173.7 302.1,166.7 300.1,158.8 298.1,150.1 296.1,140.8 294.1,131.3 292.1,121.9 290.1,112.6 288.1,103.9 286.1,96.0 284.1,89.0 282.1,83.2 280.1,78.7 278.1,75.7 276.1,74.3 274.1,74.4 272.1,76.0 270.1,79.2 268.1,83.9 266.1,89.8 264.1,96.9 262.1,105.0 260.1,113.8 258.1,123.1 256.1,132.6 254.1,142.0 252.2,151.2 250.2,159.8 248.2,167.7 246.2,174.5 244.2,180.2 242.2,184.5 240.2,187.3 238.2,188.6 236.2,188.3 234.2,186.5 232.2,183.1 230.2,178.3 228.2,172.2 226.2,165.0 224.2,156.8 222.2,147.9 220.2,138.6 218.2,129.1 216.2,119.7 214.2,110.5 212.2,102.0 210.2,94.3 208.2,87.5 206.2,82.0 204.2,77.9 202.2,75.2 200.3,74.1 198.3,74.6 196.3,76.6 194.3,80.2 192.3,85.2 190.3,91.4 188.3,98.8 186.3,107.0 184.3,115.9 182.3,125.3 180.3,134.8 178.3,144.2 176.3,153.3 174.3,161.8 172.3,169.4 170.3,176.0 168.3,181.3 166.3,185.3 164.3,187.8 162.3,188.7 160.3,188.0 158.3,185.8 156.3,182.1 154.3,177.0 152.3,170.6 150.3,163.1 148.4,154.8 146.4,145.8 144.4,136.4 142.4,126.9 140.4,117.5 138.4,108.5 136.4,100.1 134.4,92.6 132.4,86.1 130.4,80.9 128.4,77.1 126.4,74.8 124.4,74.1 122.4,74.9 120.4,77.3 118.4,81.2 116.4,86.5 114.4,93.0 112.4,100.6 110.4,109.1 108.4,118.1 106.4,127.5 104.4,137.0 102.4,146.4 100.4,155.3 98.4,163.6 96.5,171.0 94.5,177.3 92.5,182.4 90.5,186.0 88.5,188.1 86.5,188.7 84.5,187.7 82.5,185.1 80.5,181.0 78.5,175.6 76.5,168.9 74.5,161.2 72.5,152.7 70.5,143.6 68.5,134.2 66.5,124.7 64.5,115.3 62.5,106.4 60.5,98.2 58.5,91.0 56.5,84.8 54.5,79.9 52.5,76.5 50.5,74.5 48.5,74.2 46.5,75.4 44.6,78.1 42.6,82.4 40.6,87.9 38.6,94.7 36.6,102.5 34.6,111.1 32.6,120.3 30.6,129.7 28.6,139.3 26.6,148.5 24.6,157.4 22.6,165.5 20.6,172.6 18.6,178.6Z" fill="url(#eg)" fill-opacity="0.18" stroke="url(#eg)" stroke-opacity="0.09" stroke-width="0.6"/><path d="M18.6 74.5H643.4M18.6 188.3H643.4" stroke="url(#og)" stroke-opacity="0.55" stroke-width="2.8"/><path d="M596.0 127.7h.9v.9h-.9zM134.0 132.7h.9v.9h-.9zM77.4 110.0h.9v.9h-.9zM75.3 165.0h.9v.9h-.9zM451.9 81.6h.9v.9h-.9zM632.3 181.9h.9v.9h-.9zM117.0 78.7h.9v.9h-.9zM137.4 103.4h.9v.9h-.9zM37.4 127.5h.9v.9h-.9zM641.9 185.2h.9v.9h-.9zM543.6 154.0h.9v.9h-.9zM215.6 102.0h.9v.9h-.9zM199.2 84.7h.9v.9h-.9zM497.4 120.6h.9v.9h-.9zM547.5 119.1h.9v.9h-.9zM617.2 169.1h.9v.9h-.9zM18.9 99.9h.9v.9h-.9zM587.3 128.1h.9v.9h-.9zM631.1 120.3h.9v.9h-.9zM64.2 145.5h.9v.9h-.9zM505.0 106.4h.9v.9h-.9zM73.0 113.2h.9v.9h-.9zM621.0 159.4h.9v.9h-.9zM92.3 103.9h.9v.9h-.9zM81.7 83.6h.9v.9h-.9zM516.6 96.4h.9v.9h-.9zM137.7 156.6h.9v.9h-.9zM100.4 147.0h.9v.9h-.9zM91.4 122.8h.9v.9h-.9zM151.6 106.4h.9v.9h-.9zM625.2 164.4h.9v.9h-.9zM208.6 173.2h.9v.9h-.9zM150.3 119.9h.9v.9h-.9zM552.4 146.8h.9v.9h-.9zM81.3 184.5h.9v.9h-.9zM151.8 105.1h.9v.9h-.9zM501.4 112.8h.9v.9h-.9zM203.7 85.1h.9v.9h-.9zM74.9 140.4h.9v.9h-.9zM170.4 142.4h.9v.9h-.9zM617.9 129.6h.9v.9h-.9zM132.8 93.8h.9v.9h-.9zM586.2 165.9h.9v.9h-.9zM174.5 97.7h.9v.9h-.9zM480.6 179.2h.9v.9h-.9zM141.4 180.3h.9v.9h-.9zM569.8 142.6h.9v.9h-.9zM42.8 181.6h.9v.9h-.9zM167.6 153.6h.9v.9h-.9zM179.2 166.6h.9v.9h-.9zM128.2 155.3h.9v.9h-.9zM61.6 101.9h.9v.9h-.9zM591.8 99.3h.9v.9h-.9zM29.0 106.3h.9v.9h-.9zM128.7 117.2h.9v.9h-.9zM631.2 148.4h.9v.9h-.9zM450.5 140.6h.9v.9h-.9zM106.3 80.9h.9v.9h-.9zM29.8 175.9h.9v.9h-.9zM456.6 181.7h.9v.9h-.9zM31.9 146.2h.9v.9h-.9zM217.9 185.6h.9v.9h-.9zM65.6 136.4h.9v.9h-.9zM479.1 174.9h.9v.9h-.9zM479.1 153.5h.9v.9h-.9zM514.2 176.5h.9v.9h-.9zM581.4 171.7h.9v.9h-.9zM558.1 139.3h.9v.9h-.9zM68.7 146.5h.9v.9h-.9zM639.2 172.6h.9v.9h-.9zM473.6 119.3h.9v.9h-.9zM477.9 140.2h.9v.9h-.9zM70.9 158.6h.9v.9h-.9zM37.2 142.4h.9v.9h-.9zM454.9 131.1h.9v.9h-.9zM178.4 78.3h.9v.9h-.9zM206.7 150.7h.9v.9h-.9zM145.2 95.5h.9v.9h-.9zM584.5 148.8h.9v.9h-.9zM222.9 149.4h.9v.9h-.9zM142.6 123.9h.9v.9h-.9zM522.2 176.4h.9v.9h-.9zM568.6 118.8h.9v.9h-.9zM103.7 131.0h.9v.9h-.9zM541.6 169.3h.9v.9h-.9zM463.0 180.3h.9v.9h-.9zM191.5 95.5h.9v.9h-.9zM152.4 122.1h.9v.9h-.9zM215.6 168.2h.9v.9h-.9zM632.2 126.2h.9v.9h-.9zM65.3 80.5h.9v.9h-.9zM563.9 81.6h.9v.9h-.9zM461.4 139.1h.9v.9h-.9zM211.7 163.1h.9v.9h-.9zM30.5 91.9h.9v.9h-.9zM537.0 102.9h.9v.9h-.9zM106.6 82.2h.9v.9h-.9zM523.1 181.2h.9v.9h-.9zM446.3 98.7h.9v.9h-.9zM25.3 128.4h.9v.9h-.9zM464.8 96.6h.9v.9h-.9zM188.8 114.6h.9v.9h-.9zM454.3 133.6h.9v.9h-.9zM584.8 86.6h.9v.9h-.9zM601.3 155.6h.9v.9h-.9zM99.8 126.4h.9v.9h-.9zM568.0 163.6h.9v.9h-.9zM608.6 127.5h.9v.9h-.9zM469.7 166.0h.9v.9h-.9zM151.9 174.8h.9v.9h-.9zM631.2 183.2h.9v.9h-.9zM218.8 175.9h.9v.9h-.9zM553.3 114.9h.9v.9h-.9zM70.3 125.0h.9v.9h-.9zM524.2 84.1h.9v.9h-.9zM518.4 95.9h.9v.9h-.9zM227.9 162.7h.9v.9h-.9zM106.4 93.2h.9v.9h-.9zM543.4 152.0h.9v.9h-.9zM609.5 130.6h.9v.9h-.9zM611.6 86.4h.9v.9h-.9zM156.9 134.3h.9v.9h-.9zM199.9 156.3h.9v.9h-.9zM545.7 137.9h.9v.9h-.9zM213.3 118.5h.9v.9h-.9zM546.7 174.9h.9v.9h-.9zM148.7 169.5h.9v.9h-.9zM623.7 134.0h.9v.9h-.9zM624.3 133.1h.9v.9h-.9zM450.3 84.3h.9v.9h-.9zM616.4 177.4h.9v.9h-.9zM186.8 128.5h.9v.9h-.9zM97.9 124.2h.9v.9h-.9zM528.3 174.9h.9v.9h-.9zM138.2 144.2h.9v.9h-.9zM596.7 91.2h.9v.9h-.9zM505.5 79.6h.9v.9h-.9zM139.9 101.8h.9v.9h-.9zM447.9 112.1h.9v.9h-.9zM84.1 156.5h.9v.9h-.9zM95.3 132.5h.9v.9h-.9zM175.1 98.6h.9v.9h-.9zM146.2 145.7h.9v.9h-.9zM550.5 143.5h.9v.9h-.9zM553.9 102.4h.9v.9h-.9zM481.4 165.1h.9v.9h-.9zM582.6 111.4h.9v.9h-.9zM215.4 177.3h.9v.9h-.9zM154.9 185.5h.9v.9h-.9zM573.1 91.6h.9v.9h-.9zM168.1 156.0h.9v.9h-.9zM180.7 87.6h.9v.9h-.9zM538.5 122.9h.9v.9h-.9zM512.2 90.8h.9v.9h-.9zM29.7 98.9h.9v.9h-.9zM445.0 176.1h.9v.9h-.9zM623.6 89.6h.9v.9h-.9zM136.7 84.8h.9v.9h-.9zM84.9 81.2h.9v.9h-.9zM133.9 99.2h.9v.9h-.9zM543.6 184.6h.9v.9h-.9zM597.7 87.4h.9v.9h-.9zM57.3 180.4h.9v.9h-.9zM222.8 127.8h.9v.9h-.9zM456.6 168.8h.9v.9h-.9zM131.9 126.4h.9v.9h-.9zM480.5 121.1h.9v.9h-.9zM140.5 95.0h.9v.9h-.9zM576.7 164.2h.9v.9h-.9zM458.9 170.6h.9v.9h-.9zM632.6 164.5h.9v.9h-.9zM180.0 176.1h.9v.9h-.9zM483.7 161.6h.9v.9h-.9zM527.6 121.2h.9v.9h-.9zM578.8 172.7h.9v.9h-.9zM452.7 160.4h.9v.9h-.9zM496.7 121.2h.9v.9h-.9zM470.1 84.8h.9v.9h-.9zM25.2 115.7h.9v.9h-.9zM163.6 179.7h.9v.9h-.9zM434.8 113.8h.9v.9h-.9zM430.8 139.0h.9v.9h-.9zM643.3 146.9h.9v.9h-.9zM456.7 159.8h.9v.9h-.9zM631.0 79.6h.9v.9h-.9zM178.9 120.7h.9v.9h-.9zM50.1 98.3h.9v.9h-.9zM175.4 175.5h.9v.9h-.9zM622.9 138.8h.9v.9h-.9zM640.3 146.4h.9v.9h-.9zM524.4 85.4h.9v.9h-.9zM46.8 178.1h.9v.9h-.9zM118.5 128.3h.9v.9h-.9zM124.3 130.9h.9v.9h-.9zM609.2 122.8h.9v.9h-.9zM195.7 154.9h.9v.9h-.9zM203.6 78.6h.9v.9h-.9zM171.7 81.7h.9v.9h-.9zM116.4 159.1h.9v.9h-.9zM486.2 82.5h.9v.9h-.9zM636.4 179.7h.9v.9h-.9zM64.5 175.4h.9v.9h-.9zM626.6 103.6h.9v.9h-.9zM470.2 128.0h.9v.9h-.9zM630.2 165.8h.9v.9h-.9zM145.8 82.8h.9v.9h-.9zM504.7 134.7h.9v.9h-.9zM641.9 180.6h.9v.9h-.9zM477.4 103.0h.9v.9h-.9zM89.7 174.0h.9v.9h-.9zM508.6 145.0h.9v.9h-.9zM446.6 138.4h.9v.9h-.9zM489.3 97.7h.9v.9h-.9zM174.2 183.5h.9v.9h-.9zM590.7 172.5h.9v.9h-.9zM43.3 83.7h.9v.9h-.9zM187.9 123.3h.9v.9h-.9zM72.6 150.5h.9v.9h-.9zM150.2 114.4h.9v.9h-.9zM484.0 168.2h.9v.9h-.9zM65.1 90.1h.9v.9h-.9zM524.2 144.8h.9v.9h-.9zM498.9 100.2h.9v.9h-.9zM524.6 117.2h.9v.9h-.9zM221.9 136.7h.9v.9h-.9zM484.8 177.1h.9v.9h-.9zM79.2 172.1h.9v.9h-.9zM67.7 86.1h.9v.9h-.9zM446.8 109.6h.9v.9h-.9zM503.1 85.4h.9v.9h-.9zM151.8 149.0h.9v.9h-.9z" fill="#031a70" fill-opacity="0.6"/></g><path d="M18.6,73.3 19.6,73.3 20.6,73.3 21.6,73.3 22.6,73.3 23.6,73.3 24.6,73.3 25.6,73.3 26.6,73.3 27.6,73.3 28.6,73.3 29.6,73.3 30.6,73.3 31.6,73.3 32.6,73.3 33.6,73.3 34.6,73.3 35.6,73.3 36.6,73.3 37.6,73.3 38.6,73.3 39.6,73.3 40.6,73.3 41.6,73.3 42.6,73.3 43.6,73.3 44.6,73.3 45.5,73.3 46.5,73.3 47.5,73.3 48.5,73.3 49.5,73.3 50.5,73.3 51.5,73.3 52.5,73.3 53.5,73.3 54.5,73.3 55.5,73.3 56.5,73.3 57.5,73.3 58.5,73.3 59.5,73.3 60.5,73.3 61.5,73.3 62.5,73.3 63.5,73.3 64.5,73.3 65.5,73.3 66.5,73.5 67.5,74.2 68.5,75.4 69.5,76.9 70.5,78.9 71.5,81.3 72.5,84.1 73.5,87.2 74.5,90.7 75.5,94.4 76.5,98.5 77.5,102.8 78.5,103.3 79.5,99.7 80.5,96.3 81.5,93.1 82.5,90.0 83.5,87.2 84.5,84.6 85.5,82.3 86.5,80.2 87.5,78.4 88.5,76.8 89.5,75.5 90.5,74.5 91.5,73.8 92.5,73.4 93.5,73.3 94.5,73.3 95.5,73.3 96.5,73.3 97.4,73.3 98.4,73.3 99.4,73.3 100.4,73.3 101.4,73.3 102.4,73.3 103.4,73.3 104.4,73.3 105.4,73.3 106.4,73.3 107.4,73.3 108.4,73.3 109.4,73.3 110.4,73.3 111.4,73.3 112.4,73.3 113.4,73.3 114.4,73.3 115.4,73.3 116.4,73.3 117.4,73.3 118.4,73.3 119.4,73.3 120.4,73.3 121.4,73.3 122.4,73.3 123.4,73.3 124.4,73.3 125.4,73.3 126.4,73.3 127.4,73.3 128.4,73.3 129.4,73.3 130.4,73.3 131.4,73.3 132.4,73.3 133.4,73.3 134.4,73.3 135.4,73.3 136.4,73.3 137.4,73.5 138.4,74.1 139.4,75.2 140.4,76.7 141.4,78.6 142.4,81.0 143.4,83.7 144.4,86.7 145.4,90.2 146.4,93.9 147.4,97.9 148.4,102.2 149.3,106.7 150.3,111.4 151.3,116.2 152.3,121.2 153.3,126.2 154.3,131.3 155.3,136.3 156.3,139.1 157.3,135.0 158.3,130.9 159.3,126.7 160.3,122.6 161.3,118.5 162.3,114.5 163.3,110.6 164.3,106.8 165.3,103.1 166.3,99.5 167.3,96.1 168.3,92.9 169.3,89.9 170.3,87.1 171.3,84.5 172.3,82.2 173.3,80.1 174.3,78.3 175.3,76.7 176.3,75.4 177.3,74.5 178.3,73.8 179.3,73.4 180.3,73.3 181.3,73.3 182.3,73.3 183.3,73.3 184.3,73.3 185.3,73.3 186.3,73.3 187.3,73.3 188.3,73.3 189.3,73.3 190.3,73.3 191.3,73.3 192.3,73.3 193.3,73.3 194.3,73.3 195.3,73.3 196.3,73.3 197.3,73.3 198.3,73.3 199.3,73.3 200.3,73.3 201.2,73.3 202.2,73.3 203.2,73.3 204.2,73.3 205.2,73.3 206.2,73.3 207.2,73.3 208.2,73.4 209.2,74.0 210.2,75.0 211.2,76.5 212.2,78.3 213.2,80.6 214.2,83.3 215.2,86.3 216.2,89.7 217.2,93.4 218.2,97.4 219.2,101.6 220.2,106.1 221.2,110.8 222.2,115.6 223.2,120.5 224.2,125.5 225.2,130.6 226.2,135.6 227.2,140.7 228.2,145.6 229.2,150.4 230.2,155.1 231.2,159.6 232.2,163.8 233.2,167.8 234.2,171.5 235.2,168.5 236.2,165.3 237.2,161.9 238.2,158.4 239.2,154.7 240.2,150.9 241.2,147.0 242.2,143.0 243.2,138.9 244.2,134.8 245.2,130.6 246.2,126.5 247.2,122.4 248.2,118.3 249.2,114.3 250.2,110.4 251.2,106.6 252.2,102.9 253.1,99.3 254.1,95.9 255.1,92.7 256.1,89.7 257.1,86.9 258.1,84.4 259.1,82.0 260.1,80.0 261.1,78.2 262.1,76.6 263.1,75.4 264.1,74.4 265.1,73.8 266.1,73.4 267.1,73.3 268.1,73.3 269.1,73.3 270.1,73.3 271.1,73.3 272.1,73.3 273.1,73.3 274.1,73.3 275.1,73.3 276.1,73.3 277.1,73.3 278.1,73.3 279.1,73.4 280.1,73.9 281.1,74.9 282.1,76.2 283.1,78.1 284.1,80.3 285.1,82.9 286.1,85.9 287.1,89.2 288.1,92.9 289.1,96.8 290.1,101.0 291.1,105.5 292.1,110.1 293.1,114.9 294.1,119.8 295.1,124.8 296.1,129.9 297.1,135.0 298.1,140.0 299.1,144.9 300.1,149.8 301.1,154.5 302.1,159.0 303.1,163.2 304.1,167.3 305.0,171.0 306.0,174.4 307.0,177.5 308.0,180.2 309.0,182.6 310.0,184.5 311.0,186.0 312.0,187.1 313.0,186.7 314.0,185.8 315.0,184.5 316.0,183.0 317.0,181.2 318.0,179.1 319.0,176.7 320.0,174.2 321.0,171.4 322.0,168.4 323.0,165.1 324.0,161.8 325.0,158.2 326.0,154.5 327.0,150.7 328.0,146.8 329.0,142.7 330.0,138.7 331.0,134.2 332.0,129.1 333.0,124.1 334.0,119.1 335.0,114.2 336.0,109.4 337.0,104.8 338.0,100.4 339.0,96.2 340.0,92.3 341.0,88.7 342.0,85.4 343.0,82.5 344.0,79.9 345.0,77.8 346.0,76.0 347.0,74.7 348.0,73.8 349.0,73.4 350.0,73.3 351.0,73.3 352.0,73.3 353.0,73.3 354.0,73.3 355.0,73.6 356.0,74.1 357.0,74.9 357.9,76.1 358.9,77.5 359.9,79.2 360.9,81.1 361.9,83.3 362.9,85.8 363.9,88.5 364.9,91.4 365.9,94.5 366.9,97.8 367.9,101.3 368.9,104.9 369.9,108.7 370.9,112.6 371.9,116.6 372.9,120.6 373.9,124.7 374.9,128.8 375.9,133.0 376.9,137.1 377.9,141.2 378.9,145.2 379.9,149.2 380.9,153.1 381.9,156.8 382.9,160.4 383.9,163.9 384.9,167.2 385.9,170.2 386.9,173.1 387.9,175.8 388.9,178.2 389.9,180.4 390.9,180.2 391.9,177.5 392.9,174.4 393.9,170.9 394.9,167.2 395.9,163.2 396.9,158.9 397.9,154.4 398.9,149.7 399.9,144.8 400.9,139.9 401.9,134.9 402.9,129.8 403.9,124.8 404.9,119.8 405.9,114.8 406.9,110.0 407.9,105.4 408.9,101.0 409.8,96.7 410.8,92.8 411.8,89.1 412.8,85.8 413.8,82.8 414.8,80.2 415.8,78.0 416.8,76.2 417.8,74.8 418.8,73.9 419.8,73.4 420.8,73.3 421.8,73.3 422.8,73.3 423.8,73.3 424.8,73.3 425.8,73.3 426.8,73.3 427.8,73.3 428.8,73.3 429.8,73.3 430.8,73.3 431.8,73.3 432.8,73.3 433.8,73.3 434.8,73.3 435.8,73.3 436.8,73.3 437.8,73.3 438.8,73.3 439.8,73.3 440.8,73.3 441.8,73.6 442.8,74.1 443.8,75.0 444.8,76.1 445.8,77.6 446.8,79.3 447.8,81.2 448.8,83.5 449.8,85.9 450.8,88.6 451.8,91.6 452.8,94.7 453.8,98.0 454.8,101.5 455.8,105.1 456.8,108.9 457.8,112.8 458.8,116.8 459.8,120.8 460.8,124.9 461.7,129.1 462.7,133.2 463.7,137.3 464.7,141.4 465.7,145.5 466.7,149.4 467.7,153.3 468.7,155.0 469.7,150.3 470.7,145.5 471.7,140.6 472.7,135.6 473.7,130.5 474.7,125.4 475.7,120.4 476.7,115.5 477.7,110.7 478.7,106.0 479.7,101.5 480.7,97.3 481.7,93.3 482.7,89.6 483.7,86.3 484.7,83.2 485.7,80.6 486.7,78.3 487.7,76.4 488.7,75.0 489.7,74.0 490.7,73.4 491.7,73.3 492.7,73.3 493.7,73.3 494.7,73.3 495.7,73.3 496.7,73.3 497.7,73.3 498.7,73.3 499.7,73.3 500.7,73.3 501.7,73.3 502.7,73.3 503.7,73.3 504.7,73.3 505.7,73.3 506.7,73.3 507.7,73.3 508.7,73.3 509.7,73.3 510.7,73.3 511.7,73.3 512.7,73.3 513.6,73.3 514.6,73.3 515.6,73.3 516.6,73.3 517.6,73.3 518.6,73.3 519.6,73.3 520.6,73.3 521.6,73.3 522.6,73.3 523.6,73.3 524.6,73.3 525.6,73.3 526.6,73.3 527.6,73.3 528.6,73.6 529.6,74.2 530.6,75.0 531.6,76.2 532.6,77.6 533.6,79.4 534.6,81.3 535.6,83.6 536.6,86.1 537.6,88.8 538.6,91.7 539.6,94.9 540.6,98.2 541.6,101.7 542.6,105.3 543.6,109.1 544.6,113.0 545.6,117.0 546.6,121.1 547.6,116.2 548.6,111.3 549.6,106.6 550.6,102.1 551.6,97.9 552.6,93.8 553.6,90.1 554.6,86.7 555.6,83.6 556.6,80.9 557.6,78.6 558.6,76.7 559.6,75.2 560.6,74.1 561.6,73.5 562.6,73.3 563.6,73.3 564.6,73.3 565.5,73.3 566.5,73.3 567.5,73.3 568.5,73.3 569.5,73.3 570.5,73.3 571.5,73.3 572.5,73.3 573.5,73.3 574.5,73.3 575.5,73.3 576.5,73.3 577.5,73.3 578.5,73.3 579.5,73.3 580.5,73.3 581.5,73.3 582.5,73.3 583.5,73.3 584.5,73.3 585.5,73.3 586.5,73.3 587.5,73.3 588.5,73.3 589.5,73.3 590.5,73.3 591.5,73.3 592.5,73.3 593.5,73.3 594.5,73.3 595.5,73.3 596.5,73.3 597.5,73.3 598.5,73.3 599.5,73.3 600.5,73.3 601.5,73.3 602.5,73.3 603.5,73.3 604.5,73.3 605.5,73.3 606.5,73.3 607.5,73.3 608.5,73.3 609.5,73.3 610.5,73.3 611.5,73.3 612.5,73.3 613.5,73.3 614.5,73.3 615.5,73.6 616.5,74.2 617.4,75.1 618.4,76.3 619.4,77.7 620.4,79.5 621.4,81.5 622.4,83.7 623.4,86.2 624.4,89.0 625.4,87.1 626.4,84.0 627.4,81.3 628.4,78.9 629.4,76.9 630.4,75.3 631.4,74.2 632.4,73.5 633.4,73.3 634.4,73.3 635.4,73.3 636.4,73.3 637.4,73.3 638.4,73.3 639.4,73.3 640.4,73.3 641.4,73.3 642.4,73.3 643.4,73.3 L643.4,189.5 642.4,189.5 641.4,189.5 640.4,189.5 639.4,189.5 638.4,189.5 637.4,189.5 636.4,189.5 635.4,189.5 634.4,189.5 633.4,189.5 632.4,189.5 631.4,189.5 630.4,189.5 629.4,189.5 628.4,189.5 627.4,189.5 626.4,189.5 625.4,189.5 624.4,189.5 623.4,189.5 622.4,189.5 621.4,189.5 620.4,189.5 619.4,189.5 618.4,189.5 617.4,189.5 616.5,189.5 615.5,189.5 614.5,189.5 613.5,189.5 612.5,189.5 611.5,189.5 610.5,189.5 609.5,189.5 608.5,189.5 607.5,189.5 606.5,189.5 605.5,189.5 604.5,189.5 603.5,189.5 602.5,189.5 601.5,189.5 600.5,189.5 599.5,189.5 598.5,189.5 597.5,189.5 596.5,189.0 595.5,188.1 594.5,186.8 593.5,185.1 592.5,182.9 591.5,180.4 590.5,177.5 589.5,174.2 588.5,170.6 587.5,166.7 586.5,162.5 585.5,159.2 584.5,162.8 583.5,166.2 582.5,169.4 581.5,172.5 580.5,175.3 579.5,177.9 578.5,180.3 577.5,182.4 576.5,184.3 575.5,185.9 574.5,187.2 573.5,188.2 572.5,188.9 571.5,189.4 570.5,189.5 569.5,189.5 568.5,189.5 567.5,189.5 566.5,189.5 565.5,189.5 564.6,189.5 563.6,189.5 562.6,189.5 561.6,189.5 560.6,189.5 559.6,189.5 558.6,189.5 557.6,189.5 556.6,189.5 555.6,189.5 554.6,189.5 553.6,189.5 552.6,189.5 551.6,189.5 550.6,189.5 549.6,189.5 548.6,189.5 547.6,189.5 546.6,189.5 545.6,189.5 544.6,189.5 543.6,189.5 542.6,189.5 541.6,189.5 540.6,189.5 539.6,189.5 538.6,189.5 537.6,189.5 536.6,189.5 535.6,189.5 534.6,189.5 533.6,189.5 532.6,189.5 531.6,189.5 530.6,189.5 529.6,189.5 528.6,189.5 527.6,189.5 526.6,189.5 525.6,189.1 524.6,188.3 523.6,187.0 522.6,185.4 521.6,183.3 520.6,180.8 519.6,177.9 518.6,174.7 517.6,171.1 516.6,167.2 515.6,163.1 514.6,158.7 513.6,154.2 512.7,149.4 511.7,144.5 510.7,139.5 509.7,134.5 508.7,129.4 507.7,124.4 506.7,127.4 505.7,131.5 504.7,135.7 503.7,139.8 502.7,143.9 501.7,147.9 500.7,151.8 499.7,155.7 498.7,159.4 497.7,163.0 496.7,166.4 495.7,169.6 494.7,172.6 493.7,175.5 492.7,178.1 491.7,180.4 490.7,182.5 489.7,184.4 488.7,186.0 487.7,187.2 486.7,188.3 485.7,189.0 484.7,189.4 483.7,189.5 482.7,189.5 481.7,189.5 480.7,189.5 479.7,189.5 478.7,189.5 477.7,189.5 476.7,189.5 475.7,189.5 474.7,189.5 473.7,189.5 472.7,189.5 471.7,189.5 470.7,189.5 469.7,189.5 468.7,189.5 467.7,189.5 466.7,189.5 465.7,189.5 464.7,189.5 463.7,189.5 462.7,189.5 461.7,189.5 460.8,189.5 459.8,189.5 458.8,189.5 457.8,189.5 456.8,189.5 455.8,189.5 454.8,189.2 453.8,188.4 452.8,187.2 451.8,185.6 450.8,183.6 449.8,181.1 448.8,178.3 447.8,175.1 446.8,171.6 445.8,167.8 444.8,163.7 443.8,159.3 442.8,154.8 441.8,150.1 440.8,145.2 439.8,140.2 438.8,135.2 437.8,130.1 436.8,125.1 435.8,120.1 434.8,115.2 433.8,110.4 432.8,105.8 431.8,101.5 430.8,97.3 429.8,93.4 428.8,94.0 427.8,97.2 426.8,100.5 425.8,104.1 424.8,107.7 423.8,111.5 422.8,115.5 421.8,119.5 420.8,123.5 419.8,127.6 418.8,131.8 417.8,135.9 416.8,140.0 415.8,144.1 414.8,148.1 413.8,152.1 412.8,155.9 411.8,159.6 410.8,163.2 409.8,166.6 408.9,169.8 407.9,172.8 406.9,175.6 405.9,178.2 404.9,180.6 403.9,182.6 402.9,184.5 401.9,186.0 400.9,187.3 399.9,188.3 398.9,189.0 397.9,189.4 396.9,189.5 395.9,189.5 394.9,189.5 393.9,189.5 392.9,189.5 391.9,189.5 390.9,189.5 389.9,189.5 388.9,189.5 387.9,189.5 386.9,189.5 385.9,189.5 384.9,189.5 383.9,189.2 382.9,188.6 381.9,187.4 380.9,185.9 379.9,183.9 378.9,181.5 377.9,178.7 376.9,175.6 375.9,172.1 374.9,168.3 373.9,164.3 372.9,160.0 371.9,155.4 370.9,150.7 369.9,145.9 368.9,140.9 367.9,135.9 366.9,130.8 365.9,125.8 364.9,120.8 363.9,115.9 362.9,111.1 361.9,106.5 360.9,102.0 359.9,97.9 358.9,93.9 357.9,90.3 357.0,87.0 356.0,84.1 355.0,81.5 354.0,79.4 353.0,77.6 352.0,76.3 351.0,76.0 350.0,76.9 349.0,78.2 348.0,79.7 347.0,81.5 346.0,83.5 345.0,85.8 344.0,88.4 343.0,91.2 342.0,94.2 341.0,97.4 340.0,100.7 339.0,104.3 338.0,108.0 337.0,111.8 336.0,115.7 335.0,119.7 334.0,123.8 333.0,127.9 332.0,132.0 331.0,136.1 330.0,140.8 329.0,145.8 328.0,150.6 327.0,155.3 326.0,159.9 325.0,164.2 324.0,168.3 323.0,172.1 322.0,175.5 321.0,178.7 320.0,181.4 319.0,183.8 318.0,185.8 317.0,187.4 316.0,188.5 315.0,189.2 314.0,189.5 313.0,189.5 312.0,189.5 311.0,189.5 310.0,189.5 309.0,189.3 308.0,188.8 307.0,188.0 306.0,186.9 305.0,185.5 304.1,183.8 303.1,181.9 302.1,179.7 301.1,177.3 300.1,174.6 299.1,171.7 298.1,168.6 297.1,165.3 296.1,161.8 295.1,158.2 294.1,154.5 293.1,150.6 292.1,146.6 291.1,142.6 290.1,138.5 289.1,134.3 288.1,130.2 287.1,126.1 286.1,122.0 285.1,117.9 284.1,114.0 283.1,110.1 282.1,106.3 281.1,102.7 280.1,99.2 279.1,95.9 278.1,92.8 277.1,89.9 276.1,87.2 275.1,84.8 274.1,82.6 273.1,81.2 272.1,83.7 271.1,86.6 270.1,89.8 269.1,93.4 268.1,97.2 267.1,101.4 266.1,105.8 265.1,110.4 264.1,115.1 263.1,120.0 262.1,125.0 261.1,130.0 260.1,135.1 259.1,140.1 258.1,145.1 257.1,150.0 256.1,154.7 255.1,159.3 254.1,163.6 253.1,167.7 252.2,171.6 251.2,175.1 250.2,178.3 249.2,181.1 248.2,183.5 247.2,185.6 246.2,187.2 245.2,188.4 244.2,189.2 243.2,189.5 242.2,189.5 241.2,189.5 240.2,189.5 239.2,189.5 238.2,189.5 237.2,189.5 236.2,189.5 235.2,189.5 234.2,189.5 233.2,189.5 232.2,189.5 231.2,189.5 230.2,189.5 229.2,189.5 228.2,189.5 227.2,189.5 226.2,189.5 225.2,189.5 224.2,189.5 223.2,189.5 222.2,189.3 221.2,188.7 220.2,187.9 219.2,186.8 218.2,185.4 217.2,183.7 216.2,181.8 215.2,179.6 214.2,177.1 213.2,174.4 212.2,171.5 211.2,168.4 210.2,165.1 209.2,161.6 208.2,158.0 207.2,154.2 206.2,150.4 205.2,146.4 204.2,142.3 203.2,138.2 202.2,134.1 201.2,130.0 200.3,125.8 199.3,121.8 198.3,117.7 197.3,113.7 196.3,109.9 195.3,106.1 194.3,109.7 193.3,114.5 192.3,119.3 191.3,124.3 190.3,129.3 189.3,134.4 188.3,139.4 187.3,144.4 186.3,149.3 185.3,154.1 184.3,158.7 183.3,163.0 182.3,167.2 181.3,171.0 180.3,174.6 179.3,177.8 178.3,180.7 177.3,183.2 176.3,185.3 175.3,187.0 174.3,188.3 173.3,189.1 172.3,189.5 171.3,189.5 170.3,189.5 169.3,189.5 168.3,189.5 167.3,189.5 166.3,189.5 165.3,189.5 164.3,189.5 163.3,189.5 162.3,189.5 161.3,189.5 160.3,189.5 159.3,189.5 158.3,189.5 157.3,189.5 156.3,189.5 155.3,189.5 154.3,189.5 153.3,189.5 152.3,189.5 151.3,189.5 150.3,189.5 149.3,189.5 148.4,189.5 147.4,189.5 146.4,189.5 145.4,189.5 144.4,189.5 143.4,189.5 142.4,189.5 141.4,189.5 140.4,189.5 139.4,189.5 138.4,189.5 137.4,189.5 136.4,189.5 135.4,189.2 134.4,188.7 133.4,187.9 132.4,186.7 131.4,185.3 130.4,183.6 129.4,181.6 128.4,179.4 127.4,177.0 126.4,174.3 125.4,171.3 124.4,168.2 123.4,164.9 122.4,161.4 121.4,157.8 120.4,154.0 119.4,150.1 118.4,146.2 117.4,142.1 116.4,143.8 115.4,148.7 114.4,153.4 113.4,158.0 112.4,162.5 111.4,166.6 110.4,170.5 109.4,174.1 108.4,177.4 107.4,180.4 106.4,182.9 105.4,185.1 104.4,186.8 103.4,188.1 102.4,189.0 101.4,189.4 100.4,189.5 99.4,189.5 98.4,189.5 97.4,189.5 96.5,189.5 95.5,189.5 94.5,189.5 93.5,189.5 92.5,189.5 91.5,189.5 90.5,189.5 89.5,189.5 88.5,189.5 87.5,189.5 86.5,189.5 85.5,189.5 84.5,189.5 83.5,189.5 82.5,189.5 81.5,189.5 80.5,189.5 79.5,189.5 78.5,189.5 77.5,189.5 76.5,189.5 75.5,189.5 74.5,189.5 73.5,189.5 72.5,189.5 71.5,189.5 70.5,189.5 69.5,189.5 68.5,189.5 67.5,189.5 66.5,189.5 65.5,189.5 64.5,189.5 63.5,189.5 62.5,189.5 61.5,189.5 60.5,189.5 59.5,189.5 58.5,189.5 57.5,189.5 56.5,189.5 55.5,189.5 54.5,189.5 53.5,189.5 52.5,189.5 51.5,189.5 50.5,189.5 49.5,189.5 48.5,189.2 47.5,188.7 46.5,187.8 45.5,186.6 44.6,185.2 43.6,183.5 42.6,181.5 41.6,179.3 40.6,176.8 39.6,174.1 38.6,173.7 37.6,177.0 36.6,180.0 35.6,182.6 34.6,184.8 33.6,186.6 32.6,188.0 31.6,188.9 30.6,189.4 29.6,189.5 28.6,189.5 27.6,189.5 26.6,189.5 25.6,189.5 24.6,189.5 23.6,189.5 22.6,189.5 21.6,189.5 20.6,189.5 19.6,189.5 18.6,189.5Z" fill="none" stroke="url(#og)" stroke-opacity="0.9" stroke-width="1.1"/><circle cx="330.6" cy="137" r="0.9" fill="#ff4020"/></g><path d="M57.65 60.8V218.2" stroke="#fff" stroke-opacity="0.68" stroke-width="0.8" stroke-dasharray="1 1.46"/><path d="M96.70 60.8V218.2" stroke="#fff" stroke-opacity="0.68" stroke-width="0.8" stroke-dasharray="1 1.46"/><path d="M135.75 60.8V218.2" stroke="#fff" stroke-opacity="0.68" stroke-width="0.8" stroke-dasharray="1 1.46"/><path d="M174.80 60.8V218.2" stroke="#fff" stroke-opacity="0.68" stroke-width="0.8" stroke-dasharray="1 1.46"/><path d="M213.85 60.8V218.2" stroke="#fff" stroke-opacity="0.68" stroke-width="0.8" stroke-dasharray="1 1.46"/><path d="M252.90 60.8V218.2" stroke="#fff" stroke-opacity="0.68" stroke-width="0.8" stroke-dasharray="1 1.46"/><path d="M291.95 60.8V218.2" stroke="#fff" stroke-opacity="0.68" stroke-width="0.8" stroke-dasharray="1 1.46"/><path d="M331.00 60.8V218.2" stroke="#fff" stroke-opacity="0.62" stroke-width="0.8"/><path d="M370.05 60.8V218.2" stroke="#fff" stroke-opacity="0.68" stroke-width="0.8" stroke-dasharray="1 1.46"/><path d="M409.10 60.8V218.2" stroke="#fff" stroke-opacity="0.68" stroke-width="0.8" stroke-dasharray="1 1.46"/><path d="M448.15 60.8V218.2" stroke="#fff" stroke-opacity="0.68" stroke-width="0.8" stroke-dasharray="1 1.46"/><path d="M487.20 60.8V218.2" stroke="#fff" stroke-opacity="0.68" stroke-width="0.8" stroke-dasharray="1 1.46"/><path d="M526.25 60.8V218.2" stroke="#fff" stroke-opacity="0.68" stroke-width="0.8" stroke-dasharray="1 1.46"/><path d="M565.30 60.8V218.2" stroke="#fff" stroke-opacity="0.68" stroke-width="0.8" stroke-dasharray="1 1.46"/><path d="M604.35 60.8V218.2" stroke="#fff" stroke-opacity="0.68" stroke-width="0.8" stroke-dasharray="1 1.46"/><path d="M18.6 80.47H643.4" stroke="#fff" stroke-opacity="0.68" stroke-width="0.8" stroke-dasharray="1 1.44"/><path d="M18.6 100.15H643.4" stroke="#fff" stroke-opacity="0.68" stroke-width="0.8" stroke-dasharray="1 1.44"/><path d="M18.6 119.82H643.4" stroke="#fff" stroke-opacity="0.68" stroke-width="0.8" stroke-dasharray="1 1.44"/><path d="M18.6 139.50H643.4" stroke="#fff" stroke-opacity="0.62" stroke-width="0.8"/><path d="M18.6 159.17H643.4" stroke="#fff" stroke-opacity="0.68" stroke-width="0.8" stroke-dasharray="1 1.44"/><path d="M18.6 178.85H643.4" stroke="#fff" stroke-opacity="0.68" stroke-width="0.8" stroke-dasharray="1 1.44"/><path d="M18.6 198.52H643.4" stroke="#fff" stroke-opacity="0.68" stroke-width="0.8" stroke-dasharray="1 1.44"/><path d="M18.60 60.8v1.2M18.60 218.2v-1.2M26.41 138.30v2.4M26.41 60.8v1.2M26.41 218.2v-1.2M34.22 138.30v2.4M34.22 60.8v1.2M34.22 218.2v-1.2M42.03 138.30v2.4M42.03 60.8v1.2M42.03 218.2v-1.2M49.84 138.30v2.4M49.84 60.8v1.2M49.84 218.2v-1.2M57.65 60.8v1.2M57.65 218.2v-1.2M65.46 138.30v2.4M65.46 60.8v1.2M65.46 218.2v-1.2M73.27 138.30v2.4M73.27 60.8v1.2M73.27 218.2v-1.2M81.08 138.30v2.4M81.08 60.8v1.2M81.08 218.2v-1.2M88.89 138.30v2.4M88.89 60.8v1.2M88.89 218.2v-1.2M96.70 60.8v1.2M96.70 218.2v-1.2M104.51 138.30v2.4M104.51 60.8v1.2M104.51 218.2v-1.2M112.32 138.30v2.4M112.32 60.8v1.2M112.32 218.2v-1.2M120.13 138.30v2.4M120.13 60.8v1.2M120.13 218.2v-1.2M127.94 138.30v2.4M127.94 60.8v1.2M127.94 218.2v-1.2M135.75 60.8v1.2M135.75 218.2v-1.2M143.56 138.30v2.4M143.56 60.8v1.2M143.56 218.2v-1.2M151.37 138.30v2.4M151.37 60.8v1.2M151.37 218.2v-1.2M159.18 138.30v2.4M159.18 60.8v1.2M159.18 218.2v-1.2M166.99 138.30v2.4M166.99 60.8v1.2M166.99 218.2v-1.2M174.80 60.8v1.2M174.80 218.2v-1.2M182.61 138.30v2.4M182.61 60.8v1.2M182.61 218.2v-1.2M190.42 138.30v2.4M190.42 60.8v1.2M190.42 218.2v-1.2M198.23 138.30v2.4M198.23 60.8v1.2M198.23 218.2v-1.2M206.04 138.30v2.4M206.04 60.8v1.2M206.04 218.2v-1.2M213.85 60.8v1.2M213.85 218.2v-1.2M221.66 138.30v2.4M221.66 60.8v1.2M221.66 218.2v-1.2M229.47 138.30v2.4M229.47 60.8v1.2M229.47 218.2v-1.2M237.28 138.30v2.4M237.28 60.8v1.2M237.28 218.2v-1.2M245.09 138.30v2.4M245.09 60.8v1.2M245.09 218.2v-1.2M252.90 60.8v1.2M252.90 218.2v-1.2M260.71 138.30v2.4M260.71 60.8v1.2M260.71 218.2v-1.2M268.52 138.30v2.4M268.52 60.8v1.2M268.52 218.2v-1.2M276.33 138.30v2.4M276.33 60.8v1.2M276.33 218.2v-1.2M284.14 138.30v2.4M284.14 60.8v1.2M284.14 218.2v-1.2M291.95 60.8v1.2M291.95 218.2v-1.2M299.76 138.30v2.4M299.76 60.8v1.2M299.76 218.2v-1.2M307.57 138.30v2.4M307.57 60.8v1.2M307.57 218.2v-1.2M315.38 138.30v2.4M315.38 60.8v1.2M315.38 218.2v-1.2M323.19 138.30v2.4M323.19 60.8v1.2M323.19 218.2v-1.2M331.00 60.8v1.2M331.00 218.2v-1.2M338.81 138.30v2.4M338.81 60.8v1.2M338.81 218.2v-1.2M346.62 138.30v2.4M346.62 60.8v1.2M346.62 218.2v-1.2M354.43 138.30v2.4M354.43 60.8v1.2M354.43 218.2v-1.2M362.24 138.30v2.4M362.24 60.8v1.2M362.24 218.2v-1.2M370.05 60.8v1.2M370.05 218.2v-1.2M377.86 138.30v2.4M377.86 60.8v1.2M377.86 218.2v-1.2M385.67 138.30v2.4M385.67 60.8v1.2M385.67 218.2v-1.2M393.48 138.30v2.4M393.48 60.8v1.2M393.48 218.2v-1.2M401.29 138.30v2.4M401.29 60.8v1.2M401.29 218.2v-1.2M409.10 60.8v1.2M409.10 218.2v-1.2M416.91 138.30v2.4M416.91 60.8v1.2M416.91 218.2v-1.2M424.72 138.30v2.4M424.72 60.8v1.2M424.72 218.2v-1.2M432.53 138.30v2.4M432.53 60.8v1.2M432.53 218.2v-1.2M440.34 138.30v2.4M440.34 60.8v1.2M440.34 218.2v-1.2M448.15 60.8v1.2M448.15 218.2v-1.2M455.96 138.30v2.4M455.96 60.8v1.2M455.96 218.2v-1.2M463.77 138.30v2.4M463.77 60.8v1.2M463.77 218.2v-1.2M471.58 138.30v2.4M471.58 60.8v1.2M471.58 218.2v-1.2M479.39 138.30v2.4M479.39 60.8v1.2M479.39 218.2v-1.2M487.20 60.8v1.2M487.20 218.2v-1.2M495.01 138.30v2.4M495.01 60.8v1.2M495.01 218.2v-1.2M502.82 138.30v2.4M502.82 60.8v1.2M502.82 218.2v-1.2M510.63 138.30v2.4M510.63 60.8v1.2M510.63 218.2v-1.2M518.44 138.30v2.4M518.44 60.8v1.2M518.44 218.2v-1.2M526.25 60.8v1.2M526.25 218.2v-1.2M534.06 138.30v2.4M534.06 60.8v1.2M534.06 218.2v-1.2M541.87 138.30v2.4M541.87 60.8v1.2M541.87 218.2v-1.2M549.68 138.30v2.4M549.68 60.8v1.2M549.68 218.2v-1.2M557.49 138.30v2.4M557.49 60.8v1.2M557.49 218.2v-1.2M565.30 60.8v1.2M565.30 218.2v-1.2M573.11 138.30v2.4M573.11 60.8v1.2M573.11 218.2v-1.2M580.92 138.30v2.4M580.92 60.8v1.2M580.92 218.2v-1.2M588.73 138.30v2.4M588.73 60.8v1.2M588.73 218.2v-1.2M596.54 138.30v2.4M596.54 60.8v1.2M596.54 218.2v-1.2M604.35 60.8v1.2M604.35 218.2v-1.2M612.16 138.30v2.4M612.16 60.8v1.2M612.16 218.2v-1.2M619.97 138.30v2.4M619.97 60.8v1.2M619.97 218.2v-1.2M627.78 138.30v2.4M627.78 60.8v1.2M627.78 218.2v-1.2M635.59 138.30v2.4M635.59 60.8v1.2M635.59 218.2v-1.2M643.40 60.8v1.2M643.40 218.2v-1.2M18.6 60.80h1.2M643.4 60.80h-1.2M329.80 64.73h2.4M18.6 64.73h1.2M643.4 64.73h-1.2M329.80 68.67h2.4M18.6 68.67h1.2M643.4 68.67h-1.2M329.80 72.60h2.4M18.6 72.60h1.2M643.4 72.60h-1.2M329.80 76.54h2.4M18.6 76.54h1.2M643.4 76.54h-1.2M18.6 80.47h1.2M643.4 80.47h-1.2M329.80 84.41h2.4M18.6 84.41h1.2M643.4 84.41h-1.2M329.80 88.34h2.4M18.6 88.34h1.2M643.4 88.34h-1.2M329.80 92.28h2.4M18.6 92.28h1.2M643.4 92.28h-1.2M329.80 96.22h2.4M18.6 96.22h1.2M643.4 96.22h-1.2M18.6 100.15h1.2M643.4 100.15h-1.2M329.80 104.08h2.4M18.6 104.08h1.2M643.4 104.08h-1.2M329.80 108.02h2.4M18.6 108.02h1.2M643.4 108.02h-1.2M329.80 111.95h2.4M18.6 111.95h1.2M643.4 111.95h-1.2M329.80 115.89h2.4M18.6 115.89h1.2M643.4 115.89h-1.2M18.6 119.82h1.2M643.4 119.82h-1.2M329.80 123.76h2.4M18.6 123.76h1.2M643.4 123.76h-1.2M329.80 127.69h2.4M18.6 127.69h1.2M643.4 127.69h-1.2M329.80 131.63h2.4M18.6 131.63h1.2M643.4 131.63h-1.2M329.80 135.56h2.4M18.6 135.56h1.2M643.4 135.56h-1.2M18.6 139.50h1.2M643.4 139.50h-1.2M329.80 143.44h2.4M18.6 143.44h1.2M643.4 143.44h-1.2M329.80 147.37h2.4M18.6 147.37h1.2M643.4 147.37h-1.2M329.80 151.30h2.4M18.6 151.30h1.2M643.4 151.30h-1.2M329.80 155.24h2.4M18.6 155.24h1.2M643.4 155.24h-1.2M18.6 159.17h1.2M643.4 159.17h-1.2M329.80 163.11h2.4M18.6 163.11h1.2M643.4 163.11h-1.2M329.80 167.04h2.4M18.6 167.04h1.2M643.4 167.04h-1.2M329.80 170.98h2.4M18.6 170.98h1.2M643.4 170.98h-1.2M329.80 174.91h2.4M18.6 174.91h1.2M643.4 174.91h-1.2M18.6 178.85h1.2M643.4 178.85h-1.2M329.80 182.78h2.4M18.6 182.78h1.2M643.4 182.78h-1.2M329.80 186.72h2.4M18.6 186.72h1.2M643.4 186.72h-1.2M329.80 190.65h2.4M18.6 190.65h1.2M643.4 190.65h-1.2M329.80 194.59h2.4M18.6 194.59h1.2M643.4 194.59h-1.2M18.6 198.52h1.2M643.4 198.52h-1.2M329.80 202.46h2.4M18.6 202.46h1.2M643.4 202.46h-1.2M329.80 206.39h2.4M18.6 206.39h1.2M643.4 206.39h-1.2M329.80 210.33h2.4M18.6 210.33h1.2M643.4 210.33h-1.2M329.80 214.26h2.4M18.6 214.26h1.2M643.4 214.26h-1.2M18.6 218.20h1.2M643.4 218.20h-1.2" stroke="#fff" stroke-opacity="0.8" stroke-width="0.6" fill="none"/><path d="M18.6 218.2H643.4V60.8" stroke="#8a9097" stroke-width="0.8" fill="none"/><path d="M326.7 60.8h8l-4 6.3z" fill="#f07a14"/><path d="M5.4 126.2h9.4l3.2 4.1l-3.2 4.1h-9.4z" fill="#e8e000"/><text x="9.8" y="133" font-size="6.2" font-weight="bold" fill="#3a3800" font-family="Liberation Sans,sans-serif" text-anchor="middle">1</text><rect x="7" y="127.4" width="5.8" height="5.8" fill="none" stroke="#5a5600" stroke-width="0.5"/><path d="M10 135.4h2.4M11.2 135.4v1.8M12 137h4.6M15 135.6l1.8 1.4l-1.8 1.4" stroke="#e8e000" stroke-width="0.7" fill="none"/></svg>
<div class="a" style="left:4.2px;top:221.2px;width:639.6px;height:9.4px;background:#252c37;border-top:0.8px solid #4a5561;border-left:0.8px solid #3a444f;"></div>
<div class="t" style="left:7.4px;top:223.8px;font-size:4.8px;font-weight:bold">实时频谱</div>
<div class="a" style="left:4.8px;top:229.8px;width:639px;height:0.8px;background:#59636d"></div>
<div class="a" style="left:602.1px;top:221.3px;width:7.4px;height:8.2px;background:#4a3420;border:0.8px solid #c97a22"></div><div class="a" style="left:610.2px;top:221.3px;width:7.4px;height:8.2px;background:#4a3420;border:0.8px solid #c97a22"></div><div class="a" style="left:618.6px;top:221.3px;width:7.4px;height:8.2px;background:#1f3149;border:0.8px solid #6d7983"></div><div class="a" style="left:626.8px;top:221.3px;width:7.4px;height:8.2px;background:#1f3149;border:0.8px solid #6d7983"></div><div class="a" style="left:635.0px;top:221.3px;width:7.4px;height:8.2px;background:#1f3149;border:0.8px solid #6d7983"></div><svg class="a" style="left:602px;top:221px" width="42" height="10" viewBox="0 0 42 10"><path d="M2 4h4" stroke="#e8831e" stroke-width="1.2" fill="none"/><path d="M3 6h2" stroke="#e8831e" stroke-opacity="0.75" stroke-width="0.8" fill="none"/><path d="M11 2.5l2 2l-2 2" stroke="#e8831e" stroke-width="0.8" fill="none"/><rect x="18.5" y="3.5" width="4" height="2" fill="none" stroke="#d0d6dc" stroke-width="0.8"/><rect x="27" y="3" width="3" height="3.4" fill="#56616c"/><path d="M35.2 3l3 3M38.2 3l-3 3" stroke="#fff" stroke-width="0.9"/></svg>
<svg class="a" style="left:0;top:0" width="750" height="421" viewBox="0 0 750 421"><defs><linearGradient id="bg" gradientUnits="userSpaceOnUse" x1="0" y1="326.0" x2="0" y2="389.0"><stop offset="0.0000" stop-color="#0028d8"/><stop offset="0.0635" stop-color="#0038f0"/><stop offset="0.0952" stop-color="#0a70ff"/><stop offset="0.1175" stop-color="#10d0f4"/><stop offset="0.1460" stop-color="#30f060"/><stop offset="0.1746" stop-color="#f4f020"/><stop offset="0.1968" stop-color="#ff9010"/><stop offset="0.2190" stop-color="#ff3c08"/><stop offset="0.2635" stop-color="#ff2c04"/><stop offset="0.3079" stop-color="#ff3c08"/><stop offset="0.3302" stop-color="#ff9010"/><stop offset="0.3524" stop-color="#f4f020"/><stop offset="0.3810" stop-color="#30f060"/><stop offset="0.4127" stop-color="#10d0f4"/><stop offset="0.4540" stop-color="#0a80ff"/><stop offset="0.5079" stop-color="#0440fc"/><stop offset="0.5714" stop-color="#0224f8"/><stop offset="1.0000" stop-color="#0220f4"/></linearGradient><linearGradient id="bx" gradientUnits="userSpaceOnUse" x1="242" y1="0" x2="406" y2="0"><stop offset="0" stop-color="#1070ff"/><stop offset="0.006" stop-color="#20d8e8"/><stop offset="0.014" stop-color="#1c88ff"/><stop offset="0.035" stop-color="#1058fc"/><stop offset="0.07" stop-color="#0a38f8"/><stop offset="0.5" stop-color="#0a34f6"/><stop offset="0.93" stop-color="#0a38f8"/><stop offset="0.965" stop-color="#1058fc"/><stop offset="0.986" stop-color="#1c88ff"/><stop offset="0.994" stop-color="#20d8e8"/><stop offset="1" stop-color="#1070ff"/></linearGradient><linearGradient id="bt" x1="0" y1="0" x2="0" y2="1"><stop offset="0" stop-color="#2a90ff" stop-opacity="0.35"/><stop offset="0.03" stop-color="#2080ff" stop-opacity="0.08"/><stop offset="0.5" stop-color="#0030c0" stop-opacity="0.0"/><stop offset="1" stop-color="#0030d0" stop-opacity="0.0"/></linearGradient><linearGradient id="st" x1="0" y1="0" x2="0" y2="1"><stop offset="0" stop-color="#000" stop-opacity="0"/><stop offset="0.15" stop-color="#000" stop-opacity="0"/><stop offset="0.2" stop-color="#ffe000" stop-opacity="0.45"/><stop offset="0.32" stop-color="#ffe000" stop-opacity="0.45"/><stop offset="0.36" stop-color="#0ff" stop-opacity="0.0"/><stop offset="0.40" stop-color="#20f0ff" stop-opacity="0.8"/><stop offset="0.5" stop-color="#20b0ff" stop-opacity="0.55"/><stop offset="0.62" stop-color="#2070ff" stop-opacity="0"/><stop offset="1" stop-color="#2080ff" stop-opacity="0"/></linearGradient><pattern id="sp" patternUnits="userSpaceOnUse" x="5" y="326" width="2.35" height="64"><rect x="0.6" y="0" width="1.0" height="64" fill="url(#st)"/></pattern><pattern id="vp" patternUnits="userSpaceOnUse" x="243" y="260" width="2.35" height="80"><rect x="0.6" y="0" width="1.0" height="80" fill="#3070ff" fill-opacity="0.32"/></pattern></defs><rect x="5.0" y="230.6" width="638.4" height="158.0" fill="#000"/><rect x="242" y="260.6" width="164" height="72" fill="url(#bx)"/><rect x="242" y="260.6" width="164" height="72" fill="url(#bt)"/><rect x="246" y="261" width="156" height="71" fill="url(#vp)"/><path d="M5.0,329.6 6.0,329.8 7.0,329.2 8.0,329.9 9.0,329.4 10.0,329.6 11.0,329.9 12.0,329.4 13.0,330.0 14.0,329.5 15.0,329.9 16.0,329.9 17.0,329.5 18.0,329.0 19.0,329.9 20.0,329.7 21.0,329.2 22.0,328.9 23.0,329.3 24.0,329.5 25.0,328.8 26.0,329.9 27.0,329.0 28.0,329.7 29.0,329.8 30.0,329.9 31.0,329.6 32.0,329.0 33.0,329.8 34.0,329.3 35.0,329.2 36.0,329.6 37.0,329.3 38.0,329.9 39.0,329.9 40.0,329.8 41.0,329.2 42.0,329.5 43.0,329.6 44.0,329.3 45.0,329.5 46.0,329.6 47.0,329.0 48.0,329.2 49.0,329.7 50.0,329.3 51.0,329.4 52.0,328.9 53.0,329.1 54.0,329.7 55.0,328.8 56.0,329.9 57.0,329.5 58.0,329.1 59.0,329.8 60.0,329.4 61.0,330.0 62.0,329.2 63.0,329.1 64.0,329.3 65.0,328.9 66.0,329.6 67.0,329.2 68.0,329.3 69.0,329.3 70.0,329.5 71.0,329.0 72.0,328.9 73.0,329.4 74.0,329.2 75.0,329.9 76.0,329.2 77.0,329.2 78.0,328.8 79.0,329.0 80.0,329.7 81.0,329.5 82.0,329.2 83.0,330.0 84.0,329.4 85.0,329.8 86.0,329.9 87.0,329.9 88.0,329.1 89.0,329.8 90.0,329.7 91.0,329.5 92.0,329.0 93.0,329.9 94.0,329.5 95.0,329.3 96.0,328.9 97.0,329.0 98.0,329.0 99.0,329.7 100.0,329.5 101.0,329.6 102.0,328.9 103.0,328.9 104.0,329.8 105.0,329.8 106.0,329.7 107.0,329.7 108.0,329.4 109.0,329.3 110.0,329.7 111.0,330.0 112.0,329.5 113.0,329.6 114.0,329.3 115.0,328.9 116.0,329.2 117.0,329.4 118.0,329.3 119.0,329.2 120.0,329.9 121.0,328.9 122.0,329.1 123.0,329.0 124.0,329.0 125.0,329.5 126.0,329.5 127.0,329.9 128.0,329.2 129.0,329.9 130.0,329.9 131.0,329.7 132.0,329.8 133.0,329.6 134.0,329.9 135.0,330.0 136.0,329.8 137.0,329.9 138.0,329.6 139.0,330.0 140.0,329.0 141.0,329.3 142.0,329.8 143.0,329.7 144.0,329.6 145.0,329.6 146.0,329.9 147.0,329.0 148.0,328.8 149.0,329.4 150.0,329.4 151.0,329.9 152.0,329.9 153.0,329.6 154.0,329.7 155.0,329.0 156.0,329.8 157.0,330.0 158.0,328.9 159.0,329.4 160.0,329.8 161.0,329.3 162.0,330.0 162.5,330.0 162.5,327.0 163.5,326.4 164.5,326.6 165.5,326.8 166.5,327.3 167.5,327.2 168.5,327.4 169.5,326.7 170.5,327.0 171.5,326.7 172.5,327.2 173.5,327.3 174.5,326.6 175.5,326.4 176.5,326.6 177.5,326.6 178.5,326.6 179.5,326.7 180.5,327.3 181.5,327.0 182.5,327.2 183.5,327.6 184.5,327.6 185.5,327.3 186.5,327.3 187.5,326.8 188.5,326.5 189.5,327.1 190.5,326.5 191.5,326.4 192.5,326.5 193.5,327.2 194.5,327.3 195.5,327.3 196.5,327.4 197.5,327.4 198.5,326.9 199.5,326.5 200.5,326.6 201.5,327.0 202.5,326.8 203.5,326.6 204.5,327.5 205.5,326.8 206.5,326.5 207.5,326.7 208.5,326.7 209.5,327.0 210.5,327.4 211.5,326.7 212.5,327.2 213.5,326.6 214.5,326.4 215.5,327.1 216.5,327.1 217.5,326.5 218.5,326.7 219.5,327.4 220.5,327.4 221.5,327.4 222.5,326.5 223.5,326.6 224.5,327.4 225.5,326.6 226.5,326.4 227.5,326.8 228.5,327.2 229.5,326.9 230.5,327.4 231.5,327.6 232.5,326.4 233.5,326.8 234.5,327.0 235.5,326.5 236.5,327.1 237.5,326.6 238.5,326.6 239.5,327.3 240.5,327.3 241.5,327.2 242.0,327.6 242.0,331.0 406.0,331.0 406.0,327.3 407.0,326.9 408.0,327.3 409.0,327.1 410.0,327.4 411.0,326.5 412.0,327.2 413.0,327.1 414.0,326.9 415.0,326.5 416.0,327.1 417.0,326.5 418.0,327.0 419.0,327.0 420.0,327.0 421.0,327.6 422.0,327.1 423.0,327.4 424.0,327.6 425.0,326.6 426.0,327.4 427.0,327.0 428.0,326.7 429.0,326.9 430.0,327.2 431.0,327.0 432.0,326.9 433.0,326.7 434.0,327.5 435.0,326.9 436.0,327.3 437.0,327.3 438.0,326.7 439.0,327.0 440.0,326.9 441.0,326.7 442.0,326.5 443.0,327.1 444.0,326.9 445.0,327.0 446.0,327.0 447.0,326.8 448.0,327.1 449.0,327.0 450.0,327.0 451.0,326.5 452.0,326.8 453.0,326.5 454.0,326.5 455.0,327.3 456.0,326.9 457.0,326.5 458.0,326.6 459.0,327.4 460.0,327.5 461.0,327.1 462.0,327.5 463.0,327.3 464.0,327.5 465.0,326.8 466.0,326.7 467.0,326.5 468.0,327.4 469.0,326.7 470.0,326.8 471.0,327.4 472.0,326.5 473.0,326.4 474.0,327.3 475.0,326.5 476.0,327.1 477.0,327.0 478.0,326.4 479.0,326.6 480.0,327.4 481.0,327.1 482.0,327.0 483.0,327.2 484.0,327.6 484.0,329.8 485.0,329.6 486.0,329.1 487.0,330.0 488.0,329.3 489.0,329.5 490.0,330.0 491.0,329.6 492.0,329.3 493.0,329.4 494.0,329.9 495.0,328.8 496.0,329.1 497.0,328.8 498.0,329.9 499.0,329.7 500.0,330.0 501.0,329.1 502.0,329.7 503.0,329.8 504.0,329.5 505.0,328.9 506.0,329.0 507.0,329.7 508.0,329.8 509.0,328.9 510.0,329.3 511.0,329.2 512.0,329.9 513.0,329.9 514.0,329.2 515.0,329.5 516.0,329.9 517.0,328.9 518.0,329.2 519.0,329.0 520.0,329.9 521.0,329.0 522.0,329.9 523.0,329.0 524.0,329.5 525.0,329.6 526.0,329.3 527.0,328.9 528.0,329.7 529.0,329.8 530.0,329.4 531.0,329.7 532.0,329.9 533.0,329.8 534.0,329.9 535.0,329.8 536.0,329.6 537.0,329.6 538.0,329.1 539.0,329.7 540.0,329.4 541.0,329.8 542.0,329.6 543.0,330.0 544.0,329.7 545.0,330.0 546.0,329.1 547.0,329.3 548.0,329.8 549.0,329.4 550.0,328.9 551.0,329.9 552.0,329.0 553.0,329.5 554.0,329.4 555.0,329.0 556.0,329.5 557.0,329.4 558.0,329.2 559.0,328.8 560.0,329.6 561.0,329.0 562.0,329.2 563.0,329.2 564.0,329.5 565.0,329.6 566.0,329.9 567.0,329.8 568.0,329.9 569.0,329.1 570.0,329.7 571.0,329.8 572.0,329.9 573.0,329.0 574.0,329.0 575.0,329.2 576.0,329.7 577.0,329.7 578.0,329.6 579.0,329.4 580.0,329.8 581.0,329.5 582.0,329.7 583.0,328.8 584.0,328.8 585.0,329.3 586.0,329.7 587.0,328.8 588.0,329.6 589.0,329.6 590.0,330.0 591.0,329.5 592.0,329.4 593.0,329.4 594.0,329.8 595.0,329.4 596.0,330.0 597.0,329.7 598.0,329.9 599.0,329.5 600.0,329.9 601.0,330.0 602.0,329.6 603.0,329.7 604.0,329.3 605.0,329.4 606.0,329.1 607.0,329.2 608.0,329.1 609.0,328.9 610.0,329.5 611.0,329.6 612.0,328.8 613.0,329.8 614.0,329.1 615.0,329.2 616.0,329.9 617.0,329.0 618.0,328.9 619.0,329.2 620.0,329.1 621.0,329.0 622.0,329.8 623.0,329.4 624.0,329.4 625.0,329.0 626.0,329.0 627.0,329.0 628.0,329.3 629.0,328.9 630.0,329.2 631.0,329.2 632.0,329.7 633.0,330.0 634.0,329.8 635.0,329.6 636.0,329.9 637.0,329.0 638.0,329.3 639.0,329.2 640.0,329.2 641.0,329.2 642.0,329.4 643.0,330.0 643.4,330.0 L643.4,388.6 L5.0,388.6Z" fill="url(#bg)"/><rect x="5.0" y="326" width="638.4" height="62.6" fill="url(#sp)"/><ellipse cx="323.9" cy="333" rx="2" ry="1.8" fill="#30e8f0" fill-opacity="0.85"/><ellipse cx="164" cy="328.2" rx="1.6" ry="1.6" fill="#1060ff"/><ellipse cx="483.6" cy="328.2" rx="1.6" ry="1.6" fill="#1060ff"/><path d="M5.4 388.6v-12.7h0.9v12.7zM7.3 388.6v-7.7h1.3v7.7zM8.6 388.6v-13.2h1.0v13.2zM10.6 388.6v-10.2h1.3v10.2zM12.3 388.6v-14.4h1.0v14.4zM13.3 388.6v-12.2h0.9v12.2zM15.0 388.6v-2.1h1.0v2.1zM16.8 388.6v-9.1h0.9v9.1zM18.1 388.6v-7.4h1.0v7.4zM20.1 388.6v-7.5h1.0v7.5zM21.5 388.6v-7.8h1.0v7.8zM22.5 388.6v-18.7h0.9v18.7zM23.4 388.6v-8.1h1.3v8.1zM24.7 388.6v-8.6h1.0v8.6zM25.7 388.6v-9.7h1.0v9.7zM26.7 388.6v-3.6h1.0v3.6zM27.7 388.6v-10.2h1.3v10.2zM29.4 388.6v-1.5h1.3v1.5zM31.7 388.6v-5.5h1.0v5.5zM33.1 388.6v-5.6h1.0v5.6zM34.1 388.6v-5.7h1.3v5.7zM35.4 388.6v-15.0h0.9v15.0zM37.3 388.6v-5.9h1.3v5.9zM39.0 388.6v-16.9h1.0v16.9zM40.4 388.6v-13.3h1.0v13.3zM41.4 388.6v-3.2h1.0v3.2zM42.4 388.6v-16.2h1.0v16.2zM43.4 388.6v-12.9h1.3v12.9zM44.7 388.6v-12.2h1.0v12.2zM46.7 388.6v-3.8h1.3v3.8zM48.4 388.6v-9.7h1.0v9.7zM49.8 388.6v-3.8h1.0v3.8zM50.8 388.6v-5.7h1.0v5.7zM51.8 388.6v-13.9h1.0v13.9zM53.2 388.6v-10.5h1.3v10.5zM54.5 388.6v-1.9h1.0v1.9zM56.3 388.6v-16.5h1.0v16.5zM57.7 388.6v-19.0h1.3v19.0zM59.4 388.6v-2.0h0.9v2.0zM60.3 388.6v-4.5h1.0v4.5zM61.3 388.6v-6.8h0.9v6.8zM63.2 388.6v-15.9h1.0v15.9zM64.6 388.6v-7.8h1.3v7.8zM65.9 388.6v-10.8h1.0v10.8zM66.9 388.6v-5.2h1.3v5.2zM69.2 388.6v-8.8h0.9v8.8zM70.1 388.6v-3.3h1.3v3.3zM72.2 388.6v-4.4h1.3v4.4zM73.9 388.6v-4.5h1.0v4.5zM74.9 388.6v-7.4h1.3v7.4zM76.2 388.6v-9.2h1.0v9.2zM77.2 388.6v-9.2h1.0v9.2zM78.2 388.6v-11.6h1.3v11.6zM80.5 388.6v-9.5h1.0v9.5zM82.3 388.6v-15.0h1.0v15.0zM83.3 388.6v-9.0h1.0v9.0zM84.7 388.6v-5.6h1.0v5.6zM86.1 388.6v-6.7h0.9v6.7zM87.4 388.6v-10.5h0.9v10.5zM88.3 388.6v-7.4h1.3v7.4zM89.6 388.6v-7.3h1.0v7.3zM90.6 388.6v-7.5h1.3v7.5zM91.9 388.6v-10.0h1.0v10.0zM93.9 388.6v-14.3h1.3v14.3zM95.2 388.6v-8.1h1.0v8.1zM96.6 388.6v-7.8h1.0v7.8zM97.6 388.6v-16.5h1.0v16.5zM98.6 388.6v-8.6h0.9v8.6zM100.3 388.6v-2.5h1.0v2.5zM101.3 388.6v-14.7h0.9v14.7zM103.2 388.6v-2.5h1.0v2.5zM105.2 388.6v-1.7h1.0v1.7zM106.2 388.6v-7.3h1.3v7.3zM107.5 388.6v-7.6h1.0v7.6zM108.5 388.6v-4.5h0.9v4.5zM109.4 388.6v-2.6h0.9v2.6zM111.1 388.6v-15.0h1.0v15.0zM112.1 388.6v-16.2h0.9v16.2zM114.0 388.6v-5.9h1.3v5.9zM115.3 388.6v-7.7h1.3v7.7zM116.6 388.6v-10.2h1.3v10.2zM117.9 388.6v-6.3h0.9v6.3zM118.8 388.6v-4.3h1.0v4.3zM119.8 388.6v-8.8h0.9v8.8zM120.7 388.6v-12.4h1.0v12.4zM121.7 388.6v-3.4h0.9v3.4zM122.6 388.6v-14.5h1.3v14.5zM124.3 388.6v-13.6h1.3v13.6zM125.6 388.6v-14.9h1.0v14.9zM127.6 388.6v-12.0h1.0v12.0zM128.6 388.6v-7.9h0.9v7.9zM130.3 388.6v-7.8h1.0v7.8zM131.7 388.6v-1.6h1.0v1.6zM132.7 388.6v-18.4h0.9v18.4zM133.6 388.6v-10.0h1.3v10.0zM135.3 388.6v-18.9h1.0v18.9zM136.3 388.6v-2.7h1.0v2.7zM138.3 388.6v-7.9h0.9v7.9zM139.2 388.6v-6.8h1.0v6.8zM140.2 388.6v-10.0h1.0v10.0zM141.2 388.6v-4.8h1.0v4.8zM142.2 388.6v-2.1h1.0v2.1zM144.0 388.6v-7.2h0.9v7.2zM145.9 388.6v-4.2h0.9v4.2zM147.2 388.6v-15.2h1.3v15.2zM148.5 388.6v-2.2h0.9v2.2zM149.4 388.6v-8.9h1.0v8.9zM150.4 388.6v-8.3h1.3v8.3zM152.5 388.6v-7.9h0.9v7.9zM153.4 388.6v-12.5h1.0v12.5zM154.4 388.6v-2.4h0.9v2.4zM155.3 388.6v-14.2h1.0v14.2zM156.3 388.6v-11.0h1.0v11.0zM157.3 388.6v-9.4h0.9v9.4zM158.6 388.6v-4.3h0.9v4.3zM159.9 388.6v-9.8h0.9v9.8zM161.8 388.6v-3.2h1.3v3.2zM163.1 388.6v-11.1h0.9v11.1zM164.0 388.6v-13.4h1.3v13.4zM165.7 388.6v-3.4h1.0v3.4zM167.7 388.6v-7.6h1.0v7.6zM168.7 388.6v-4.8h0.9v4.8zM169.6 388.6v-8.4h1.3v8.4zM170.9 388.6v-1.6h1.0v1.6zM172.9 388.6v-11.0h1.0v11.0zM174.9 388.6v-4.7h1.0v4.7zM175.9 388.6v-8.6h0.9v8.6zM177.2 388.6v-8.0h1.0v8.0zM178.2 388.6v-3.9h1.3v3.9zM179.5 388.6v-3.8h1.3v3.8zM180.8 388.6v-17.1h1.0v17.1zM182.8 388.6v-10.1h1.3v10.1zM184.9 388.6v-18.1h1.0v18.1zM186.7 388.6v-6.0h1.0v6.0zM188.1 388.6v-4.7h1.0v4.7zM189.1 388.6v-18.2h0.9v18.2zM191.0 388.6v-14.6h1.3v14.6zM193.1 388.6v-17.9h1.3v17.9zM194.4 388.6v-11.1h1.0v11.1zM195.8 388.6v-4.9h0.9v4.9zM197.5 388.6v-16.3h1.3v16.3zM199.6 388.6v-11.3h1.0v11.3zM201.0 388.6v-4.3h1.0v4.3zM202.4 388.6v-8.0h0.9v8.0zM203.3 388.6v-9.4h1.0v9.4zM205.3 388.6v-4.3h1.3v4.3zM207.6 388.6v-14.7h0.9v14.7zM209.3 388.6v-13.1h1.0v13.1zM210.3 388.6v-16.5h1.0v16.5zM212.3 388.6v-13.7h0.9v13.7zM213.2 388.6v-10.3h1.0v10.3zM215.0 388.6v-8.1h1.0v8.1zM216.0 388.6v-8.6h1.0v8.6zM217.8 388.6v-6.5h1.0v6.5zM218.8 388.6v-2.0h1.0v2.0zM220.8 388.6v-17.4h1.3v17.4zM222.1 388.6v-10.3h0.9v10.3zM224.0 388.6v-18.8h1.3v18.8zM226.1 388.6v-7.4h0.9v7.4zM227.0 388.6v-17.1h1.3v17.1zM229.3 388.6v-10.3h1.0v10.3zM231.1 388.6v-2.3h0.9v2.3zM232.4 388.6v-7.1h0.9v7.1zM233.3 388.6v-10.3h1.0v10.3zM235.3 388.6v-1.6h1.0v1.6zM236.3 388.6v-11.2h1.0v11.2zM237.3 388.6v-2.1h0.9v2.1zM238.2 388.6v-2.9h1.0v2.9zM239.2 388.6v-6.7h1.3v6.7zM241.3 388.6v-4.7h1.0v4.7zM243.1 388.6v-14.8h0.9v14.8zM244.0 388.6v-11.3h0.9v11.3zM245.9 388.6v-3.2h1.0v3.2zM247.3 388.6v-13.8h0.9v13.8zM249.2 388.6v-18.5h1.3v18.5zM251.3 388.6v-17.7h1.0v17.7zM252.3 388.6v-14.2h0.9v14.2zM253.6 388.6v-4.8h0.9v4.8zM254.5 388.6v-12.3h1.0v12.3zM255.5 388.6v-6.6h1.3v6.6zM257.6 388.6v-2.3h1.0v2.3zM259.6 388.6v-3.7h1.3v3.7zM261.9 388.6v-5.9h1.3v5.9zM264.2 388.6v-14.4h1.3v14.4zM265.5 388.6v-4.5h1.0v4.5zM267.5 388.6v-2.3h1.0v2.3zM269.5 388.6v-3.1h1.3v3.1zM271.8 388.6v-11.6h1.0v11.6zM272.8 388.6v-13.8h1.0v13.8zM273.8 388.6v-14.1h1.0v14.1zM274.8 388.6v-15.0h1.0v15.0zM276.8 388.6v-15.0h1.3v15.0zM278.1 388.6v-10.9h1.3v10.9zM279.8 388.6v-17.5h0.9v17.5zM281.1 388.6v-15.2h1.0v15.2zM282.1 388.6v-6.9h1.0v6.9zM283.1 388.6v-1.8h1.0v1.8zM284.1 388.6v-17.5h0.9v17.5zM285.0 388.6v-3.1h0.9v3.1zM286.9 388.6v-1.6h1.0v1.6zM287.9 388.6v-13.1h0.9v13.1zM289.8 388.6v-14.5h1.0v14.5zM290.8 388.6v-1.6h0.9v1.6zM292.7 388.6v-11.4h1.0v11.4zM293.7 388.6v-12.2h1.0v12.2zM294.7 388.6v-5.3h1.0v5.3zM295.7 388.6v-14.2h1.0v14.2zM296.7 388.6v-12.0h1.3v12.0zM298.0 388.6v-9.2h1.3v9.2zM299.3 388.6v-7.9h1.0v7.9zM300.7 388.6v-11.7h1.0v11.7zM302.7 388.6v-14.5h1.0v14.5zM303.7 388.6v-6.6h1.0v6.6zM304.7 388.6v-2.7h1.3v2.7zM307.0 388.6v-9.9h1.3v9.9zM309.1 388.6v-8.2h1.0v8.2zM310.9 388.6v-15.4h1.0v15.4zM312.9 388.6v-4.8h0.9v4.8zM314.2 388.6v-12.5h0.9v12.5zM316.1 388.6v-4.5h1.3v4.5zM318.4 388.6v-3.7h0.9v3.7zM319.3 388.6v-5.3h1.0v5.3zM320.7 388.6v-17.2h1.3v17.2zM322.0 388.6v-7.8h0.9v7.8zM322.9 388.6v-11.6h1.3v11.6zM325.2 388.6v-10.6h1.3v10.6zM326.9 388.6v-10.3h1.0v10.3zM327.9 388.6v-7.2h1.0v7.2zM329.7 388.6v-5.5h1.0v5.5zM331.7 388.6v-2.1h1.0v2.1zM333.5 388.6v-4.8h1.0v4.8zM334.5 388.6v-8.8h0.9v8.8zM335.4 388.6v-14.5h1.3v14.5zM336.7 388.6v-18.0h1.0v18.0zM338.1 388.6v-4.5h0.9v4.5zM339.0 388.6v-5.9h0.9v5.9zM339.9 388.6v-8.0h1.0v8.0zM341.7 388.6v-15.5h0.9v15.5zM342.6 388.6v-7.7h0.9v7.7zM344.5 388.6v-8.3h1.3v8.3zM345.8 388.6v-12.3h1.0v12.3zM347.8 388.6v-4.6h1.3v4.6zM349.1 388.6v-7.5h1.3v7.5zM350.4 388.6v-12.6h1.0v12.6zM351.4 388.6v-16.4h0.9v16.4zM353.1 388.6v-16.6h1.0v16.6zM355.1 388.6v-4.1h1.3v4.1zM356.4 388.6v-2.9h1.0v2.9zM358.4 388.6v-13.7h1.0v13.7zM359.4 388.6v-16.3h1.0v16.3zM361.4 388.6v-4.1h1.0v4.1zM363.2 388.6v-7.7h1.3v7.7zM364.5 388.6v-14.9h0.9v14.9zM366.4 388.6v-15.8h0.9v15.8zM367.3 388.6v-6.0h0.9v6.0zM368.2 388.6v-6.1h1.0v6.1zM370.0 388.6v-5.1h1.3v5.1zM372.1 388.6v-19.0h1.3v19.0zM373.8 388.6v-4.6h0.9v4.6zM375.7 388.6v-7.2h1.0v7.2zM376.7 388.6v-7.2h1.3v7.2zM378.4 388.6v-17.8h1.0v17.8zM379.8 388.6v-8.3h1.0v8.3zM381.8 388.6v-5.3h1.3v5.3zM384.1 388.6v-4.0h1.0v4.0zM385.1 388.6v-5.5h1.3v5.5zM386.8 388.6v-7.2h1.0v7.2zM387.8 388.6v-18.3h0.9v18.3zM388.7 388.6v-18.5h1.0v18.5zM390.5 388.6v-17.2h0.9v17.2zM392.4 388.6v-3.9h1.0v3.9zM393.4 388.6v-11.9h1.0v11.9zM394.4 388.6v-10.7h1.0v10.7zM395.4 388.6v-18.0h1.0v18.0zM397.2 388.6v-17.0h0.9v17.0zM399.1 388.6v-16.7h1.0v16.7zM400.1 388.6v-5.1h0.9v5.1zM402.0 388.6v-17.4h0.9v17.4zM403.7 388.6v-2.5h1.0v2.5zM405.1 388.6v-4.3h1.3v4.3zM406.4 388.6v-10.2h1.0v10.2zM408.2 388.6v-12.7h1.0v12.7zM409.2 388.6v-6.8h1.0v6.8zM410.6 388.6v-6.1h0.9v6.1zM411.5 388.6v-12.2h0.9v12.2zM412.4 388.6v-12.4h1.0v12.4zM413.4 388.6v-6.4h1.0v6.4zM414.4 388.6v-6.1h1.0v6.1zM415.4 388.6v-3.1h1.0v3.1zM416.8 388.6v-11.8h1.0v11.8zM417.8 388.6v-6.1h0.9v6.1zM418.7 388.6v-8.1h1.3v8.1zM420.0 388.6v-5.4h1.0v5.4zM421.0 388.6v-13.0h1.0v13.0zM422.0 388.6v-5.5h0.9v5.5zM422.9 388.6v-6.8h1.3v6.8zM425.0 388.6v-11.0h0.9v11.0zM425.9 388.6v-3.6h1.3v3.6zM428.0 388.6v-9.3h1.3v9.3zM430.1 388.6v-3.2h0.9v3.2zM431.0 388.6v-3.1h1.0v3.1zM432.0 388.6v-13.3h1.3v13.3zM433.3 388.6v-17.3h1.0v17.3zM434.3 388.6v-11.8h1.0v11.8zM435.3 388.6v-4.2h0.9v4.2zM436.6 388.6v-11.9h0.9v11.9zM437.9 388.6v-9.2h0.9v9.2zM439.2 388.6v-13.6h1.3v13.6zM440.5 388.6v-2.5h1.0v2.5zM441.9 388.6v-11.7h0.9v11.7zM443.8 388.6v-8.5h0.9v8.5zM445.1 388.6v-3.2h0.9v3.2zM446.0 388.6v-4.6h1.3v4.6zM447.3 388.6v-6.8h1.3v6.8zM449.6 388.6v-13.6h1.0v13.6zM451.6 388.6v-13.3h0.9v13.3zM452.5 388.6v-12.5h1.3v12.5zM454.8 388.6v-15.3h0.9v15.3zM456.7 388.6v-1.7h0.9v1.7zM458.0 388.6v-7.6h1.0v7.6zM459.4 388.6v-10.6h1.3v10.6zM461.1 388.6v-9.7h0.9v9.7zM462.0 388.6v-14.8h1.3v14.8zM463.7 388.6v-7.9h1.0v7.9zM465.5 388.6v-5.4h1.0v5.4zM467.3 388.6v-9.1h1.0v9.1zM469.1 388.6v-16.9h1.0v16.9zM470.5 388.6v-5.9h1.0v5.9zM471.9 388.6v-4.0h1.0v4.0zM472.9 388.6v-6.9h0.9v6.9zM473.8 388.6v-18.1h1.0v18.1zM474.8 388.6v-18.0h1.3v18.0zM476.1 388.6v-6.7h1.3v6.7zM477.8 388.6v-7.8h1.0v7.8zM478.8 388.6v-12.4h1.3v12.4zM481.1 388.6v-5.3h0.9v5.3zM482.4 388.6v-4.4h1.0v4.4zM483.4 388.6v-6.9h1.0v6.9zM485.2 388.6v-6.5h1.0v6.5zM486.2 388.6v-4.5h1.0v4.5zM487.2 388.6v-10.8h1.0v10.8zM488.2 388.6v-4.0h1.0v4.0zM489.2 388.6v-6.3h0.9v6.3zM490.1 388.6v-4.2h1.0v4.2zM491.9 388.6v-9.5h1.0v9.5zM493.7 388.6v-6.8h1.0v6.8zM494.7 388.6v-8.7h1.0v8.7zM495.7 388.6v-15.7h1.0v15.7zM497.1 388.6v-1.6h1.0v1.6zM499.1 388.6v-8.7h0.9v8.7zM500.8 388.6v-13.6h0.9v13.6zM501.7 388.6v-5.2h0.9v5.2zM503.6 388.6v-4.9h1.0v4.9zM504.6 388.6v-19.0h1.0v19.0zM505.6 388.6v-2.1h1.0v2.1zM506.6 388.6v-18.5h0.9v18.5zM507.5 388.6v-12.5h1.3v12.5zM508.8 388.6v-2.3h0.9v2.3zM509.7 388.6v-10.5h1.3v10.5zM512.0 388.6v-2.3h1.0v2.3zM513.4 388.6v-2.7h1.0v2.7zM514.8 388.6v-4.7h0.9v4.7zM516.1 388.6v-10.0h0.9v10.0zM517.0 388.6v-15.1h1.0v15.1zM519.0 388.6v-2.6h0.9v2.6zM520.3 388.6v-17.1h1.3v17.1zM521.6 388.6v-5.2h0.9v5.2zM523.5 388.6v-5.7h0.9v5.7zM524.4 388.6v-11.8h1.0v11.8zM525.8 388.6v-15.3h1.3v15.3zM527.1 388.6v-2.2h1.0v2.2zM528.1 388.6v-10.3h0.9v10.3zM529.0 388.6v-6.4h1.0v6.4zM530.8 388.6v-3.7h1.0v3.7zM532.6 388.6v-5.4h1.0v5.4zM533.6 388.6v-16.2h1.0v16.2zM534.6 388.6v-14.5h1.0v14.5zM536.0 388.6v-14.3h1.0v14.3zM537.0 388.6v-14.1h1.0v14.1zM538.8 388.6v-1.5h1.0v1.5zM539.8 388.6v-4.2h1.3v4.2zM541.1 388.6v-4.9h1.0v4.9zM542.9 388.6v-12.6h1.0v12.6zM544.7 388.6v-1.7h1.3v1.7zM546.0 388.6v-1.8h1.0v1.8zM547.8 388.6v-4.1h1.3v4.1zM550.1 388.6v-16.6h1.0v16.6zM551.1 388.6v-7.2h1.3v7.2zM552.4 388.6v-3.8h1.3v3.8zM553.7 388.6v-15.3h1.0v15.3zM555.5 388.6v-15.8h1.0v15.8zM557.5 388.6v-7.0h0.9v7.0zM558.4 388.6v-6.2h0.9v6.2zM559.3 388.6v-5.2h1.0v5.2zM561.3 388.6v-16.9h0.9v16.9zM562.2 388.6v-18.8h1.3v18.8zM563.9 388.6v-6.7h1.0v6.7zM564.9 388.6v-4.4h1.0v4.4zM565.9 388.6v-2.1h0.9v2.1zM566.8 388.6v-3.2h1.0v3.2zM567.8 388.6v-3.0h1.3v3.0zM569.9 388.6v-6.2h1.0v6.2zM570.9 388.6v-9.2h0.9v9.2zM572.2 388.6v-6.5h1.0v6.5zM573.2 388.6v-2.5h1.0v2.5zM575.0 388.6v-13.3h1.0v13.3zM577.0 388.6v-12.7h1.0v12.7zM578.0 388.6v-15.9h1.3v15.9zM580.1 388.6v-16.6h1.3v16.6zM581.4 388.6v-10.7h1.0v10.7zM582.4 388.6v-13.2h1.0v13.2zM583.8 388.6v-14.3h1.0v14.3zM585.8 388.6v-15.2h1.3v15.2zM588.1 388.6v-10.8h1.0v10.8zM589.1 388.6v-5.0h0.9v5.0zM590.0 388.6v-3.9h1.3v3.9zM592.3 388.6v-4.0h0.9v4.0zM593.2 388.6v-17.1h1.0v17.1zM595.2 388.6v-8.6h0.9v8.6zM596.1 388.6v-1.5h1.0v1.5zM597.1 388.6v-5.5h1.0v5.5zM598.1 388.6v-3.9h1.0v3.9zM599.1 388.6v-6.7h1.0v6.7zM600.5 388.6v-1.8h1.0v1.8zM601.9 388.6v-10.4h0.9v10.4zM603.8 388.6v-8.2h1.0v8.2zM605.8 388.6v-6.7h1.0v6.7zM607.2 388.6v-15.5h1.3v15.5zM608.9 388.6v-9.2h1.0v9.2zM609.9 388.6v-6.7h1.3v6.7zM611.2 388.6v-14.8h1.0v14.8zM612.2 388.6v-11.5h1.0v11.5zM613.2 388.6v-7.9h1.0v7.9zM615.0 388.6v-3.7h1.3v3.7zM617.3 388.6v-2.5h1.3v2.5zM618.6 388.6v-9.5h1.0v9.5zM620.6 388.6v-9.8h1.0v9.8zM622.6 388.6v-7.4h1.0v7.4zM624.4 388.6v-3.6h1.3v3.6zM625.7 388.6v-12.5h1.0v12.5zM627.1 388.6v-14.0h0.9v14.0zM628.4 388.6v-9.0h1.0v9.0zM629.8 388.6v-15.4h0.9v15.4zM631.1 388.6v-17.5h1.0v17.5zM633.1 388.6v-5.8h1.3v5.8zM635.4 388.6v-7.9h1.3v7.9zM637.1 388.6v-4.9h1.0v4.9zM638.1 388.6v-5.9h1.0v5.9zM639.1 388.6v-15.7h1.0v15.7zM640.1 388.6v-6.1h0.9v6.1zM641.0 388.6v-2.9h1.3v2.9zM642.3 388.6v-17.9h1.3v17.9z" fill="#000"/><rect x="5.0" y="387.0" width="638.4" height="1.6" fill="#000" fill-opacity="0.6"/><path d="M44.90 230.6V388.6" stroke="#fff" stroke-opacity="0.68" stroke-width="0.8" stroke-dasharray="1 1.46"/><path d="M84.80 230.6V388.6" stroke="#fff" stroke-opacity="0.68" stroke-width="0.8" stroke-dasharray="1 1.46"/><path d="M124.70 230.6V388.6" stroke="#fff" stroke-opacity="0.68" stroke-width="0.8" stroke-dasharray="1 1.46"/><path d="M164.60 230.6V388.6" stroke="#fff" stroke-opacity="0.68" stroke-width="0.8" stroke-dasharray="1 1.46"/><path d="M204.50 230.6V388.6" stroke="#fff" stroke-opacity="0.68" stroke-width="0.8" stroke-dasharray="1 1.46"/><path d="M244.40 230.6V388.6" stroke="#fff" stroke-opacity="0.68" stroke-width="0.8" stroke-dasharray="1 1.46"/><path d="M284.30 230.6V388.6" stroke="#fff" stroke-opacity="0.68" stroke-width="0.8" stroke-dasharray="1 1.46"/><path d="M324.20 230.6V388.6" stroke="#fff" stroke-opacity="0.62" stroke-width="0.8"/><path d="M364.10 230.6V388.6" stroke="#fff" stroke-opacity="0.68" stroke-width="0.8" stroke-dasharray="1 1.46"/><path d="M404.00 230.6V388.6" stroke="#fff" stroke-opacity="0.68" stroke-width="0.8" stroke-dasharray="1 1.46"/><path d="M443.90 230.6V388.6" stroke="#fff" stroke-opacity="0.68" stroke-width="0.8" stroke-dasharray="1 1.46"/><path d="M483.80 230.6V388.6" stroke="#fff" stroke-opacity="0.68" stroke-width="0.8" stroke-dasharray="1 1.46"/><path d="M523.70 230.6V388.6" stroke="#fff" stroke-opacity="0.68" stroke-width="0.8" stroke-dasharray="1 1.46"/><path d="M563.60 230.6V388.6" stroke="#fff" stroke-opacity="0.68" stroke-width="0.8" stroke-dasharray="1 1.46"/><path d="M603.50 230.6V388.6" stroke="#fff" stroke-opacity="0.68" stroke-width="0.8" stroke-dasharray="1 1.46"/><path d="M5.0 250.35H643.4" stroke="#fff" stroke-opacity="0.68" stroke-width="0.8" stroke-dasharray="1 1.44"/><path d="M5.0 270.10H643.4" stroke="#fff" stroke-opacity="0.68" stroke-width="0.8" stroke-dasharray="1 1.44"/><path d="M5.0 289.85H643.4" stroke="#fff" stroke-opacity="0.68" stroke-width="0.8" stroke-dasharray="1 1.44"/><path d="M5.0 309.60H643.4" stroke="#fff" stroke-opacity="0.62" stroke-width="0.8"/><path d="M5.0 329.35H643.4" stroke="#fff" stroke-opacity="0.68" stroke-width="0.8" stroke-dasharray="1 1.44"/><path d="M5.0 349.10H643.4" stroke="#fff" stroke-opacity="0.68" stroke-width="0.8" stroke-dasharray="1 1.44"/><path d="M5.0 368.85H643.4" stroke="#fff" stroke-opacity="0.68" stroke-width="0.8" stroke-dasharray="1 1.44"/><path d="M5.00 230.6v1.2M5.00 388.6v-1.2M12.98 308.40v2.4M12.98 230.6v1.2M12.98 388.6v-1.2M20.96 308.40v2.4M20.96 230.6v1.2M20.96 388.6v-1.2M28.94 308.40v2.4M28.94 230.6v1.2M28.94 388.6v-1.2M36.92 308.40v2.4M36.92 230.6v1.2M36.92 388.6v-1.2M44.90 230.6v1.2M44.90 388.6v-1.2M52.88 308.40v2.4M52.88 230.6v1.2M52.88 388.6v-1.2M60.86 308.40v2.4M60.86 230.6v1.2M60.86 388.6v-1.2M68.84 308.40v2.4M68.84 230.6v1.2M68.84 388.6v-1.2M76.82 308.40v2.4M76.82 230.6v1.2M76.82 388.6v-1.2M84.80 230.6v1.2M84.80 388.6v-1.2M92.78 308.40v2.4M92.78 230.6v1.2M92.78 388.6v-1.2M100.76 308.40v2.4M100.76 230.6v1.2M100.76 388.6v-1.2M108.74 308.40v2.4M108.74 230.6v1.2M108.74 388.6v-1.2M116.72 308.40v2.4M116.72 230.6v1.2M116.72 388.6v-1.2M124.70 230.6v1.2M124.70 388.6v-1.2M132.68 308.40v2.4M132.68 230.6v1.2M132.68 388.6v-1.2M140.66 308.40v2.4M140.66 230.6v1.2M140.66 388.6v-1.2M148.64 308.40v2.4M148.64 230.6v1.2M148.64 388.6v-1.2M156.62 308.40v2.4M156.62 230.6v1.2M156.62 388.6v-1.2M164.60 230.6v1.2M164.60 388.6v-1.2M172.58 308.40v2.4M172.58 230.6v1.2M172.58 388.6v-1.2M180.56 308.40v2.4M180.56 230.6v1.2M180.56 388.6v-1.2M188.54 308.40v2.4M188.54 230.6v1.2M188.54 388.6v-1.2M196.52 308.40v2.4M196.52 230.6v1.2M196.52 388.6v-1.2M204.50 230.6v1.2M204.50 388.6v-1.2M212.48 308.40v2.4M212.48 230.6v1.2M212.48 388.6v-1.2M220.46 308.40v2.4M220.46 230.6v1.2M220.46 388.6v-1.2M228.44 308.40v2.4M228.44 230.6v1.2M228.44 388.6v-1.2M236.42 308.40v2.4M236.42 230.6v1.2M236.42 388.6v-1.2M244.40 230.6v1.2M244.40 388.6v-1.2M252.38 308.40v2.4M252.38 230.6v1.2M252.38 388.6v-1.2M260.36 308.40v2.4M260.36 230.6v1.2M260.36 388.6v-1.2M268.34 308.40v2.4M268.34 230.6v1.2M268.34 388.6v-1.2M276.32 308.40v2.4M276.32 230.6v1.2M276.32 388.6v-1.2M284.30 230.6v1.2M284.30 388.6v-1.2M292.28 308.40v2.4M292.28 230.6v1.2M292.28 388.6v-1.2M300.26 308.40v2.4M300.26 230.6v1.2M300.26 388.6v-1.2M308.24 308.40v2.4M308.24 230.6v1.2M308.24 388.6v-1.2M316.22 308.40v2.4M316.22 230.6v1.2M316.22 388.6v-1.2M324.20 230.6v1.2M324.20 388.6v-1.2M332.18 308.40v2.4M332.18 230.6v1.2M332.18 388.6v-1.2M340.16 308.40v2.4M340.16 230.6v1.2M340.16 388.6v-1.2M348.14 308.40v2.4M348.14 230.6v1.2M348.14 388.6v-1.2M356.12 308.40v2.4M356.12 230.6v1.2M356.12 388.6v-1.2M364.10 230.6v1.2M364.10 388.6v-1.2M372.08 308.40v2.4M372.08 230.6v1.2M372.08 388.6v-1.2M380.06 308.40v2.4M380.06 230.6v1.2M380.06 388.6v-1.2M388.04 308.40v2.4M388.04 230.6v1.2M388.04 388.6v-1.2M396.02 308.40v2.4M396.02 230.6v1.2M396.02 388.6v-1.2M404.00 230.6v1.2M404.00 388.6v-1.2M411.98 308.40v2.4M411.98 230.6v1.2M411.98 388.6v-1.2M419.96 308.40v2.4M419.96 230.6v1.2M419.96 388.6v-1.2M427.94 308.40v2.4M427.94 230.6v1.2M427.94 388.6v-1.2M435.92 308.40v2.4M435.92 230.6v1.2M435.92 388.6v-1.2M443.90 230.6v1.2M443.90 388.6v-1.2M451.88 308.40v2.4M451.88 230.6v1.2M451.88 388.6v-1.2M459.86 308.40v2.4M459.86 230.6v1.2M459.86 388.6v-1.2M467.84 308.40v2.4M467.84 230.6v1.2M467.84 388.6v-1.2M475.82 308.40v2.4M475.82 230.6v1.2M475.82 388.6v-1.2M483.80 230.6v1.2M483.80 388.6v-1.2M491.78 308.40v2.4M491.78 230.6v1.2M491.78 388.6v-1.2M499.76 308.40v2.4M499.76 230.6v1.2M499.76 388.6v-1.2M507.74 308.40v2.4M507.74 230.6v1.2M507.74 388.6v-1.2M515.72 308.40v2.4M515.72 230.6v1.2M515.72 388.6v-1.2M523.70 230.6v1.2M523.70 388.6v-1.2M531.68 308.40v2.4M531.68 230.6v1.2M531.68 388.6v-1.2M539.66 308.40v2.4M539.66 230.6v1.2M539.66 388.6v-1.2M547.64 308.40v2.4M547.64 230.6v1.2M547.64 388.6v-1.2M555.62 308.40v2.4M555.62 230.6v1.2M555.62 388.6v-1.2M563.60 230.6v1.2M563.60 388.6v-1.2M571.58 308.40v2.4M571.58 230.6v1.2M571.58 388.6v-1.2M579.56 308.40v2.4M579.56 230.6v1.2M579.56 388.6v-1.2M587.54 308.40v2.4M587.54 230.6v1.2M587.54 388.6v-1.2M595.52 308.40v2.4M595.52 230.6v1.2M595.52 388.6v-1.2M603.50 230.6v1.2M603.50 388.6v-1.2M611.48 308.40v2.4M611.48 230.6v1.2M611.48 388.6v-1.2M619.46 308.40v2.4M619.46 230.6v1.2M619.46 388.6v-1.2M627.44 308.40v2.4M627.44 230.6v1.2M627.44 388.6v-1.2M635.42 308.40v2.4M635.42 230.6v1.2M635.42 388.6v-1.2M643.40 230.6v1.2M643.40 388.6v-1.2M5.0 230.60h1.2M643.4 230.60h-1.2M323.00 234.55h2.4M5.0 234.55h1.2M643.4 234.55h-1.2M323.00 238.50h2.4M5.0 238.50h1.2M643.4 238.50h-1.2M323.00 242.45h2.4M5.0 242.45h1.2M643.4 242.45h-1.2M323.00 246.40h2.4M5.0 246.40h1.2M643.4 246.40h-1.2M5.0 250.35h1.2M643.4 250.35h-1.2M323.00 254.30h2.4M5.0 254.30h1.2M643.4 254.30h-1.2M323.00 258.25h2.4M5.0 258.25h1.2M643.4 258.25h-1.2M323.00 262.20h2.4M5.0 262.20h1.2M643.4 262.20h-1.2M323.00 266.15h2.4M5.0 266.15h1.2M643.4 266.15h-1.2M5.0 270.10h1.2M643.4 270.10h-1.2M323.00 274.05h2.4M5.0 274.05h1.2M643.4 274.05h-1.2M323.00 278.00h2.4M5.0 278.00h1.2M643.4 278.00h-1.2M323.00 281.95h2.4M5.0 281.95h1.2M643.4 281.95h-1.2M323.00 285.90h2.4M5.0 285.90h1.2M643.4 285.90h-1.2M5.0 289.85h1.2M643.4 289.85h-1.2M323.00 293.80h2.4M5.0 293.80h1.2M643.4 293.80h-1.2M323.00 297.75h2.4M5.0 297.75h1.2M643.4 297.75h-1.2M323.00 301.70h2.4M5.0 301.70h1.2M643.4 301.70h-1.2M323.00 305.65h2.4M5.0 305.65h1.2M643.4 305.65h-1.2M5.0 309.60h1.2M643.4 309.60h-1.2M323.00 313.55h2.4M5.0 313.55h1.2M643.4 313.55h-1.2M323.00 317.50h2.4M5.0 317.50h1.2M643.4 317.50h-1.2M323.00 321.45h2.4M5.0 321.45h1.2M643.4 321.45h-1.2M323.00 325.40h2.4M5.0 325.40h1.2M643.4 325.40h-1.2M5.0 329.35h1.2M643.4 329.35h-1.2M323.00 333.30h2.4M5.0 333.30h1.2M643.4 333.30h-1.2M323.00 337.25h2.4M5.0 337.25h1.2M643.4 337.25h-1.2M323.00 341.20h2.4M5.0 341.20h1.2M643.4 341.20h-1.2M323.00 345.15h2.4M5.0 345.15h1.2M643.4 345.15h-1.2M5.0 349.10h1.2M643.4 349.10h-1.2M323.00 353.05h2.4M5.0 353.05h1.2M643.4 353.05h-1.2M323.00 357.00h2.4M5.0 357.00h1.2M643.4 357.00h-1.2M323.00 360.95h2.4M5.0 360.95h1.2M643.4 360.95h-1.2M323.00 364.90h2.4M5.0 364.90h1.2M643.4 364.90h-1.2M5.0 368.85h1.2M643.4 368.85h-1.2M323.00 372.80h2.4M5.0 372.80h1.2M643.4 372.80h-1.2M323.00 376.75h2.4M5.0 376.75h1.2M643.4 376.75h-1.2M323.00 380.70h2.4M5.0 380.70h1.2M643.4 380.70h-1.2M323.00 384.65h2.4M5.0 384.65h1.2M643.4 384.65h-1.2M5.0 388.60h1.2M643.4 388.60h-1.2" stroke="#fff" stroke-opacity="0.8" stroke-width="0.6" fill="none"/><path d="M5.0 230.6V388.6H643.4V230.6" stroke="#8a9097" stroke-width="0.8" fill="none"/><path d="M5.0 388.90000000000003H643.4" stroke="#b4b8bc" stroke-width="0.9"/><text x="44.9" y="386.8" font-size="5.2" font-weight="bold" fill="#fffcc8" text-anchor="middle" font-family="Liberation Sans,sans-serif">65.00MHz</text><path d="M43.7 388.6l1.2 -2l1.2 2z" fill="#f0e800"/><text x="84.8" y="386.8" font-size="5.2" font-weight="bold" fill="#fffcc8" text-anchor="middle" font-family="Liberation Sans,sans-serif">70.00MHz</text><path d="M83.6 388.6l1.2 -2l1.2 2z" fill="#f0e800"/><text x="124.7" y="386.8" font-size="5.2" font-weight="bold" fill="#fffcc8" text-anchor="middle" font-family="Liberation Sans,sans-serif">75.00MHz</text><path d="M123.5 388.6l1.2 -2l1.2 2z" fill="#f0e800"/><text x="164.6" y="386.8" font-size="5.2" font-weight="bold" fill="#fffcc8" text-anchor="middle" font-family="Liberation Sans,sans-serif">80.00MHz</text><path d="M163.4 388.6l1.2 -2l1.2 2z" fill="#f0e800"/><text x="204.5" y="386.8" font-size="5.2" font-weight="bold" fill="#fffcc8" text-anchor="middle" font-family="Liberation Sans,sans-serif">85.00MHz</text><path d="M203.3 388.6l1.2 -2l1.2 2z" fill="#f0e800"/><text x="244.4" y="386.8" font-size="5.2" font-weight="bold" fill="#fffcc8" text-anchor="middle" font-family="Liberation Sans,sans-serif">90.00MHz</text><path d="M243.2 388.6l1.2 -2l1.2 2z" fill="#f0e800"/><text x="284.3" y="386.8" font-size="5.2" font-weight="bold" fill="#fffcc8" text-anchor="middle" font-family="Liberation Sans,sans-serif">95.00MHz</text><path d="M283.1 388.6l1.2 -2l1.2 2z" fill="#f0e800"/><text x="324.2" y="386.8" font-size="5.2" font-weight="bold" fill="#fffcc8" text-anchor="middle" font-family="Liberation Sans,sans-serif">100.00MHz</text><path d="M323.0 388.6l1.2 -2l1.2 2z" fill="#f0e800"/><text x="364.1" y="386.8" font-size="5.2" font-weight="bold" fill="#fffcc8" text-anchor="middle" font-family="Liberation Sans,sans-serif">105.00MHz</text><path d="M362.9 388.6l1.2 -2l1.2 2z" fill="#f0e800"/><text x="404.0" y="386.8" font-size="5.2" font-weight="bold" fill="#fffcc8" text-anchor="middle" font-family="Liberation Sans,sans-serif">110.00MHz</text><path d="M402.8 388.6l1.2 -2l1.2 2z" fill="#f0e800"/><text x="443.9" y="386.8" font-size="5.2" font-weight="bold" fill="#fffcc8" text-anchor="middle" font-family="Liberation Sans,sans-serif">115.00MHz</text><path d="M442.7 388.6l1.2 -2l1.2 2z" fill="#f0e800"/><text x="483.8" y="386.8" font-size="5.2" font-weight="bold" fill="#fffcc8" text-anchor="middle" font-family="Liberation Sans,sans-serif">120.00MHz</text><path d="M482.6 388.6l1.2 -2l1.2 2z" fill="#f0e800"/><text x="523.7" y="386.8" font-size="5.2" font-weight="bold" fill="#fffcc8" text-anchor="middle" font-family="Liberation Sans,sans-serif">125.00MHz</text><path d="M522.5 388.6l1.2 -2l1.2 2z" fill="#f0e800"/><text x="563.6" y="386.8" font-size="5.2" font-weight="bold" fill="#fffcc8" text-anchor="middle" font-family="Liberation Sans,sans-serif">130.00MHz</text><path d="M562.4 388.6l1.2 -2l1.2 2z" fill="#f0e800"/><text x="603.5" y="386.8" font-size="5.2" font-weight="bold" fill="#fffcc8" text-anchor="middle" font-family="Liberation Sans,sans-serif">135.00MHz</text><path d="M602.3 388.6l1.2 -2l1.2 2z" fill="#f0e800"/><text x="641.4" y="252.3" font-size="5.1" font-weight="bold" fill="#f4ec00" text-anchor="end" font-family="Liberation Sans,sans-serif">10.00dBV</text><path d="M643.4 249.2l-1.6 1.1l1.6 1.1z" fill="#f0e800"/><text x="641.4" y="272.1" font-size="5.1" font-weight="bold" fill="#f4ec00" text-anchor="end" font-family="Liberation Sans,sans-serif">-10.00dBV</text><path d="M643.4 269.0l-1.6 1.1l1.6 1.1z" fill="#f0e800"/><text x="641.4" y="291.9" font-size="5.1" font-weight="bold" fill="#f4ec00" text-anchor="end" font-family="Liberation Sans,sans-serif">-30.00dBV</text><path d="M643.4 288.8l-1.6 1.1l1.6 1.1z" fill="#f0e800"/><text x="641.4" y="311.6" font-size="5.1" font-weight="bold" fill="#f4ec00" text-anchor="end" font-family="Liberation Sans,sans-serif">-50.00dBV</text><path d="M643.4 308.5l-1.6 1.1l1.6 1.1z" fill="#f0e800"/><text x="641.4" y="331.4" font-size="5.1" font-weight="bold" fill="#f4ec00" text-anchor="end" font-family="Liberation Sans,sans-serif">-70.00dBV</text><path d="M643.4 328.2l-1.6 1.1l1.6 1.1z" fill="#f0e800"/><text x="641.4" y="351.1" font-size="5.1" font-weight="bold" fill="#f4ec00" text-anchor="end" font-family="Liberation Sans,sans-serif">-90.00dBV</text><path d="M643.4 348.0l-1.6 1.1l1.6 1.1z" fill="#f0e800"/><text x="641.4" y="370.9" font-size="5.1" font-weight="bold" fill="#f4ec00" text-anchor="end" font-family="Liberation Sans,sans-serif">-110.00dBV</text><path d="M643.4 367.8l-1.6 1.1l1.6 1.1z" fill="#f0e800"/></svg>
<div class="a" style="left:5.8px;top:397.2px;width:98.4px;height:17px;border:1px solid #e0d800;border-radius:1.5px"></div>
<div class="a" style="left:24px;top:397.6px;width:0.9px;height:16.2px;background:#e0d800"></div>
<div class="t" style="left:14px;top:403.8px;font-size:6.6px;color:#fff000">1</div>
<div class="t" style="left:29.6px;top:403.8px;font-size:6.4px;color:#fff000">100mV/</div>
<div class="t" style="left:59.4px;top:403.8px;font-size:6.4px;color:#fff000">AC</div>
<div class="t" style="left:73.6px;top:403.8px;font-size:6.4px;color:#fff000">50</div>
<div class="a" style="left:650.2px;top:24.2px;width:99px;height:394.4px;border:1px solid #1c2838;"></div>
<div class="hd" style="left:677px;top:37px"><svg class="a" style="left:0;top:0" width="46" height="15" viewBox="0 0 46 15"><defs><linearGradient id="hg" x1="0" y1="0" x2="0" y2="1"><stop offset="0" stop-color="#33608a"/><stop offset="1" stop-color="#14304a"/></linearGradient></defs><path d="M6.2 0.2H45.4L39.6 14.8H0.4z" fill="url(#hg)"/><path d="M3.9 0.2L0.5 9.2" stroke="#9db4cc" stroke-width="1.3"/></svg><span>功能</span></div>
<div class="hd" style="left:677px;top:137.8px"><svg class="a" style="left:0;top:0" width="46" height="15" viewBox="0 0 46 15"><defs><linearGradient id="hg" x1="0" y1="0" x2="0" y2="1"><stop offset="0" stop-color="#33608a"/><stop offset="1" stop-color="#14304a"/></linearGradient></defs><path d="M6.2 0.2H45.4L39.6 14.8H0.4z" fill="url(#hg)"/><path d="M3.9 0.2L0.5 9.2" stroke="#9db4cc" stroke-width="1.3"/></svg><span>触发</span></div>
<div class="hd" style="left:677px;top:342px"><svg class="a" style="left:0;top:0" width="46" height="15" viewBox="0 0 46 15"><defs><linearGradient id="hg" x1="0" y1="0" x2="0" y2="1"><stop offset="0" stop-color="#33608a"/><stop offset="1" stop-color="#14304a"/></linearGradient></defs><path d="M6.2 0.2H45.4L39.6 14.8H0.4z" fill="url(#hg)"/><path d="M3.9 0.2L0.5 9.2" stroke="#9db4cc" stroke-width="1.3"/></svg><span>通道</span></div>
<div class="pb" style="left:662.8px;top:62.6px"><i></i><span>采集</span></div>
<div class="pb" style="left:706.2px;top:62.6px"><i></i><span>触发</span></div>
<div class="pb" style="left:662.8px;top:85px"><i></i><span>测量</span></div>
<div class="pb" style="left:706.2px;top:85px"><i></i><span>光标</span></div>
<div class="pb" style="left:662.8px;top:107.8px"><i></i><span>运算</span></div>
<div class="pb" style="left:706.2px;top:107.8px"><i></i><span>显示</span></div>
<svg class="a" style="left:650px;top:162.4px" width="100" height="69.0" viewBox="0 0 100 69.0"><path d="M8.4 8V65.0H67M50 8H92V53.0" fill="none" stroke="#3b4653" stroke-width="0.8"/><path d="M92 54.0V65.0H74" fill="none" stroke="#3b4653" stroke-width="0.8" stroke-dasharray="1.6 1.2"/><circle cx="8.4" cy="8" r="1.3" fill="#667482"/><circle cx="50" cy="8" r="1.3" fill="#667482"/></svg><div class="t" style="left:666.4px;top:165.4px;font-size:7.6px;">触发源</div>
<svg class="a" style="left:650px;top:234.6px" width="100" height="46.2" viewBox="0 0 100 46.2"><path d="M8.4 8V42.20000000000002H67M44 8H92V30.200000000000017" fill="none" stroke="#3b4653" stroke-width="0.8"/><path d="M92 31.200000000000017V42.20000000000002H74" fill="none" stroke="#3b4653" stroke-width="0.8" stroke-dasharray="1.6 1.2"/><circle cx="8.4" cy="8" r="1.3" fill="#667482"/><circle cx="44" cy="8" r="1.3" fill="#667482"/></svg><div class="t" style="left:666.4px;top:237.6px;font-size:7.6px;">边沿</div>
<svg class="a" style="left:650px;top:284.4px" width="100" height="46.4" viewBox="0 0 100 46.4"><path d="M8.4 8V42.400000000000034H67M44 8H92V30.400000000000034" fill="none" stroke="#3b4653" stroke-width="0.8"/><path d="M92 31.400000000000034V42.400000000000034H74" fill="none" stroke="#3b4653" stroke-width="0.8" stroke-dasharray="1.6 1.2"/><circle cx="8.4" cy="8" r="1.3" fill="#667482"/><circle cx="44" cy="8" r="1.3" fill="#667482"/></svg><div class="t" style="left:666.4px;top:287.4px;font-size:7.6px;">模式</div>
<svg class="a" style="left:667.1px;top:180.0px" width="9" height="9" viewBox="0 0 9 9"><circle cx="4.5" cy="4.5" r="3.4" fill="#000" stroke="#777" stroke-width="0.7"/><circle cx="4.5" cy="4.5" r="2.4" fill="#f29a14"/><circle cx="4.5" cy="4.5" r="1.1" fill="#ffb020"/></svg><div class="rl" style="left:679px;top:181px;font-size:8px;font-weight:normal">1</div>
<svg class="a" style="left:699.4px;top:180.0px" width="9" height="9" viewBox="0 0 9 9"><circle cx="4.5" cy="4.5" r="3.4" fill="#000" stroke="#777" stroke-width="0.7"/></svg><div class="rl" style="left:711px;top:181px;font-size:8px;font-weight:normal">2</div>
<svg class="a" style="left:667.1px;top:193.1px" width="9" height="9" viewBox="0 0 9 9"><circle cx="4.5" cy="4.5" r="3.4" fill="#000" stroke="#777" stroke-width="0.7"/></svg><div class="rl" style="left:679px;top:194.1px;font-size:8px;font-weight:normal">3</div>
<svg class="a" style="left:699.4px;top:193.1px" width="9" height="9" viewBox="0 0 9 9"><circle cx="4.5" cy="4.5" r="3.4" fill="#000" stroke="#777" stroke-width="0.7"/></svg><div class="rl" style="left:711px;top:194.1px;font-size:8px;font-weight:normal">4</div>
<svg class="a" style="left:667.1px;top:206.5px" width="9" height="9" viewBox="0 0 9 9"><circle cx="4.5" cy="4.5" r="3.4" fill="#000" stroke="#777" stroke-width="0.7"/></svg><div class="rl" style="left:678px;top:208.4px;font-size:6.3px;">Ext</div>
<svg class="a" style="left:666.9px;top:256.3px" width="9" height="9" viewBox="0 0 9 9"><circle cx="4.5" cy="4.5" r="3.4" fill="#000" stroke="#777" stroke-width="0.7"/><circle cx="4.5" cy="4.5" r="2.4" fill="#f29a14"/><circle cx="4.5" cy="4.5" r="1.1" fill="#ffb020"/></svg><div class="rl" style="left:677.1px;top:257px;font-size:10px;font-family:DejaVu Sans,Liberation Sans,sans-serif;font-weight:normal">↑</div>
<svg class="a" style="left:686.5px;top:256.3px" width="9" height="9" viewBox="0 0 9 9"><circle cx="4.5" cy="4.5" r="3.4" fill="#000" stroke="#777" stroke-width="0.7"/></svg><div class="rl" style="left:696.4px;top:257px;font-size:10px;font-family:DejaVu Sans,Liberation Sans,sans-serif;font-weight:normal">↓</div>
<svg class="a" style="left:705.5px;top:256.3px" width="9" height="9" viewBox="0 0 9 9"><circle cx="4.5" cy="4.5" r="3.4" fill="#000" stroke="#777" stroke-width="0.7"/></svg><div class="rl" style="left:715.5px;top:257px;font-size:10px;font-family:DejaVu Sans,Liberation Sans,sans-serif;font-weight:normal">↑</div><div class="rl" style="left:722.4px;top:257px;font-size:10px;font-family:DejaVu Sans,Liberation Sans,sans-serif;font-weight:normal">↓</div>
<svg class="a" style="left:666.9px;top:306.1px" width="9" height="9" viewBox="0 0 9 9"><circle cx="4.5" cy="4.5" r="3.4" fill="#000" stroke="#777" stroke-width="0.7"/><circle cx="4.5" cy="4.5" r="2.4" fill="#f29a14"/><circle cx="4.5" cy="4.5" r="1.1" fill="#ffb020"/></svg><div class="rl" style="left:677.4px;top:307.4px;font-size:6.8px;">自动</div>
<svg class="a" style="left:699.1px;top:306.1px" width="9" height="9" viewBox="0 0 9 9"><circle cx="4.5" cy="4.5" r="3.4" fill="#000" stroke="#777" stroke-width="0.7"/></svg><div class="rl" style="left:710px;top:307.4px;font-size:6.8px;">正常</div>
<div class="cb" style="left:664px;top:367.6px;border-color:#e0d800;background:#1c1a00;box-shadow:inset 0 0 2px #6a6400">1</div>
<div class="cb" style="left:705px;top:367.6px">2</div>
<div class="cb" style="left:664px;top:386.6px">3</div>
<div class="cb" style="left:705px;top:386.6px">4</div>
</body></html>
